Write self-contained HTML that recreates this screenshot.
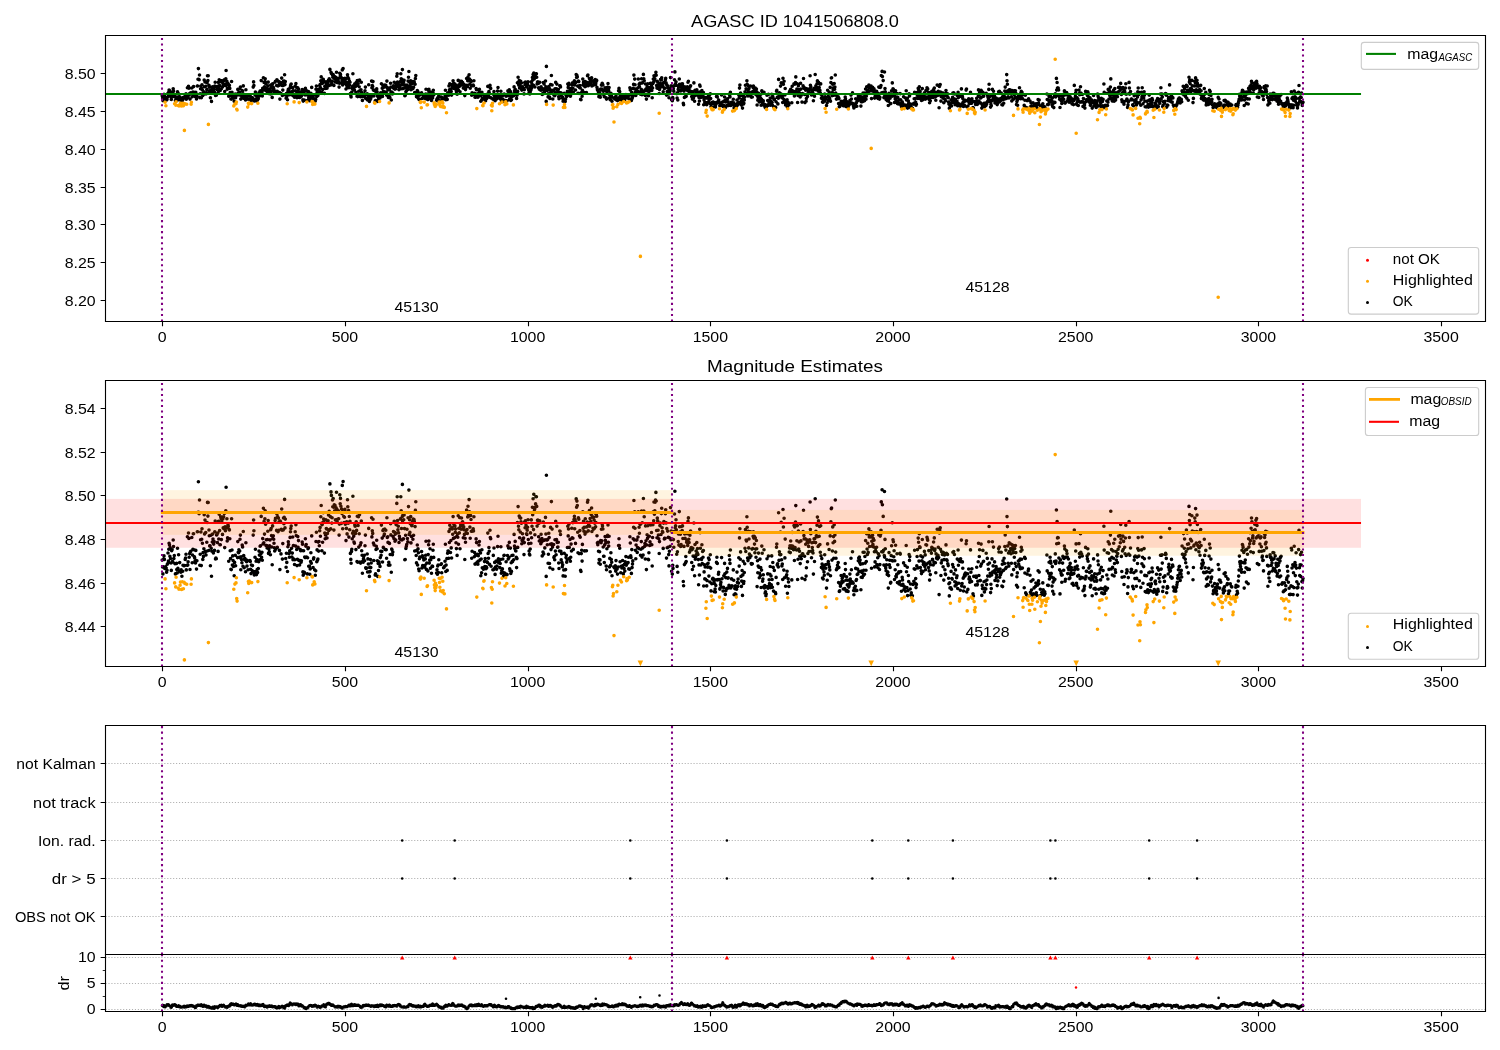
<!DOCTYPE html>
<html><head><meta charset="utf-8"><style>html,body{margin:0;padding:0;background:#fff;width:1500px;height:1050px;overflow:hidden}text{-webkit-font-smoothing:antialiased}svg{will-change:transform}</style></head><body>
<svg width="1500" height="1050" viewBox="0 0 1500 1050" style="display:block">
<rect width="1500" height="1050" fill="#fff"/>
<g font-family='"Liberation Sans", sans-serif'>
<defs><clipPath id="c1"><rect x="105.5" y="35.5" width="1380.0" height="286.0"/></clipPath><clipPath id="c2"><rect x="105.5" y="380.5" width="1380.0" height="286.0"/></clipPath><clipPath id="c4"><rect x="105.5" y="954.5" width="1380.0" height="57.0"/></clipPath></defs>
<g clip-path="url(#c1)">
<path d="M162.2 95.8h0M162.6 98.1h0M162.9 100.6h0M163.3 98.1h0M163.7 95.4h0M164.0 94.3h0M164.4 95.6h0M164.8 98.7h0M165.5 98.2h0M166.2 98.6h0M166.6 100.0h0M167.0 99.4h0M167.3 97.2h0M167.7 97.0h0M168.0 93.3h0M168.4 96.1h0M168.8 92.0h0M169.1 90.0h0M169.5 90.6h0M169.9 94.5h0M170.2 91.5h0M170.6 95.2h0M171.0 96.8h0M171.3 99.4h0M171.7 92.6h0M172.1 92.2h0M172.4 96.3h0M172.8 96.4h0M173.2 88.8h0M173.5 91.1h0M173.9 95.3h0M174.3 94.2h0M175.0 97.1h0M175.4 100.6h0M176.5 97.0h0M176.8 99.1h0M177.2 100.3h0M177.5 91.7h0M177.9 98.7h0M178.6 93.9h0M179.4 99.6h0M179.7 96.7h0M180.8 100.0h0M181.2 99.2h0M181.9 101.4h0M182.7 99.7h0M183.0 97.6h0M183.8 97.8h0M184.5 97.7h0M185.2 95.6h0M185.6 95.1h0M186.0 93.8h0M186.3 99.2h0M187.0 97.6h0M187.4 87.7h0M187.8 97.5h0M188.1 96.4h0M188.5 86.4h0M188.9 88.3h0M189.2 94.8h0M189.6 93.6h0M190.0 99.1h0M190.3 93.0h0M190.7 92.8h0M191.8 88.0h0M192.2 96.7h0M192.5 94.0h0M192.9 92.1h0M193.3 86.7h0M193.6 86.6h0M194.0 92.2h0M194.4 94.7h0M194.7 95.1h0M195.1 96.1h0M195.5 96.8h0M195.8 92.4h0M196.2 95.9h0M196.5 98.9h0M196.9 96.0h0M197.3 86.0h0M197.6 86.0h0M198.0 79.2h0M198.4 68.6h0M198.7 79.2h0M199.1 79.7h0M199.5 75.0h0M199.8 97.6h0M200.2 93.7h0M200.6 88.7h0M200.9 86.0h0M201.3 97.7h0M201.7 88.6h0M202.0 84.9h0M202.4 90.0h0M202.8 95.6h0M203.1 93.2h0M203.5 94.5h0M203.9 91.9h0M204.2 80.1h0M204.6 86.7h0M205.0 81.9h0M205.3 93.0h0M205.7 86.3h0M206.0 94.0h0M206.4 92.8h0M206.8 89.6h0M207.1 82.8h0M207.5 75.8h0M207.9 80.5h0M208.2 75.8h0M208.6 92.5h0M209.0 85.4h0M209.3 87.3h0M209.7 90.9h0M210.1 90.8h0M210.4 97.8h0M210.8 87.2h0M211.2 91.7h0M211.5 101.4h0M211.9 92.8h0M212.3 89.5h0M212.6 86.8h0M213.0 88.5h0M213.4 93.3h0M213.7 90.2h0M214.1 89.4h0M214.5 92.4h0M214.8 86.0h0M215.2 82.2h0M215.5 95.4h0M215.9 95.1h0M216.3 95.3h0M216.6 87.1h0M217.0 87.0h0M217.4 89.7h0M217.7 86.4h0M218.1 92.8h0M218.5 82.4h0M218.8 88.5h0M219.2 79.9h0M219.6 85.6h0M219.9 90.5h0M220.3 90.5h0M220.7 80.8h0M221.0 81.4h0M221.4 88.7h0M221.8 82.2h0M222.1 80.9h0M222.5 86.9h0M222.9 81.5h0M223.2 84.6h0M223.6 80.8h0M224.0 85.0h0M224.3 79.7h0M224.7 91.5h0M225.1 84.3h0M225.4 85.6h0M225.8 78.7h0M226.1 70.5h0M226.5 84.6h0M226.9 81.4h0M227.2 89.2h0M227.6 88.1h0M228.0 83.6h0M228.3 84.0h0M228.7 96.2h0M229.1 85.1h0M229.4 85.4h0M229.8 88.4h0M230.2 92.6h0M230.5 95.3h0M230.9 99.0h0M231.3 99.1h0M231.6 81.5h0M232.0 92.3h0M232.4 97.6h0M232.7 94.3h0M233.1 96.0h0M233.5 98.0h0M234.2 101.2h0M234.6 96.6h0M235.3 94.1h0M235.6 97.7h0M237.5 94.9h0M237.8 89.4h0M238.2 93.1h0M238.6 93.2h0M238.9 92.2h0M239.3 94.9h0M239.7 92.6h0M240.0 88.5h0M240.4 87.1h0M240.8 99.1h0M241.1 94.7h0M241.5 95.6h0M241.9 96.7h0M242.2 90.6h0M242.6 91.2h0M243.0 97.9h0M243.3 85.9h0M243.7 94.2h0M244.1 98.4h0M244.4 95.6h0M244.8 95.2h0M245.1 95.8h0M245.5 99.9h0M245.9 89.8h0M246.2 95.7h0M246.6 96.4h0M247.0 97.9h0M247.3 96.0h0M248.1 99.2h0M249.5 96.0h0M249.9 96.0h0M250.3 96.3h0M250.6 99.0h0M251.0 100.5h0M251.4 97.5h0M252.1 99.4h0M252.5 97.7h0M252.8 99.9h0M253.2 87.1h0M253.6 81.9h0M253.9 85.6h0M254.3 101.0h0M254.6 99.8h0M255.0 94.8h0M255.4 92.0h0M255.7 99.8h0M256.1 96.2h0M256.5 100.9h0M256.8 95.6h0M257.2 99.1h0M257.6 100.1h0M258.3 98.7h0M258.7 96.4h0M259.0 92.7h0M259.4 94.1h0M259.8 95.7h0M260.1 91.0h0M260.5 90.8h0M260.9 93.6h0M261.2 80.6h0M261.6 94.8h0M262.0 93.1h0M262.3 95.9h0M262.7 88.3h0M263.1 90.2h0M263.4 77.8h0M263.8 89.8h0M264.1 82.4h0M264.5 86.8h0M264.9 81.5h0M265.2 78.7h0M265.6 83.4h0M266.0 90.7h0M266.3 88.8h0M266.7 90.8h0M267.1 91.6h0M267.4 88.7h0M267.8 85.8h0M268.2 82.1h0M268.5 93.5h0M268.9 92.0h0M269.3 92.9h0M269.6 90.9h0M270.0 88.8h0M270.4 94.0h0M270.7 85.3h0M271.1 84.9h0M271.5 87.3h0M271.8 91.2h0M272.2 97.4h0M272.6 83.9h0M272.9 88.3h0M273.3 87.4h0M273.7 88.5h0M274.0 90.0h0M274.4 91.5h0M274.7 92.7h0M275.1 82.1h0M275.5 81.3h0M275.8 92.0h0M276.2 91.6h0M276.6 85.5h0M276.9 79.8h0M277.3 91.4h0M277.7 80.8h0M278.0 86.0h0M278.4 81.2h0M278.8 85.5h0M279.1 82.5h0M279.5 92.5h0M279.9 99.1h0M280.2 82.2h0M280.6 82.6h0M281.0 93.6h0M281.3 85.1h0M281.7 78.1h0M282.1 85.5h0M282.4 95.5h0M282.8 90.1h0M283.2 85.4h0M283.5 81.2h0M283.9 83.2h0M284.2 81.0h0M284.6 74.8h0M285.0 84.6h0M285.3 81.6h0M285.7 95.3h0M286.1 98.3h0M286.4 93.5h0M286.8 96.6h0M287.5 99.8h0M287.9 91.2h0M288.3 89.4h0M288.6 90.4h0M289.0 93.6h0M289.4 94.8h0M289.7 92.6h0M290.1 87.9h0M290.5 86.0h0M290.8 84.8h0M291.2 84.0h0M291.6 91.7h0M291.9 94.7h0M292.3 93.4h0M292.7 87.8h0M293.0 95.7h0M293.4 90.7h0M293.7 95.5h0M294.5 97.3h0M294.8 95.7h0M295.2 86.0h0M295.6 90.9h0M295.9 83.5h0M296.3 87.3h0M296.7 92.1h0M297.0 97.7h0M297.4 95.5h0M297.8 87.7h0M298.1 91.3h0M298.5 89.1h0M298.9 95.9h0M299.6 97.5h0M300.0 96.0h0M300.3 92.1h0M300.7 92.6h0M301.1 96.6h0M301.4 96.0h0M301.8 92.5h0M302.2 89.5h0M302.5 90.3h0M302.9 99.9h0M303.2 101.1h0M303.6 92.6h0M304.0 100.5h0M304.3 100.0h0M304.7 94.7h0M305.1 94.9h0M305.4 88.4h0M305.8 91.0h0M306.2 90.4h0M306.5 94.7h0M307.3 100.6h0M307.6 95.0h0M308.0 91.8h0M308.4 91.6h0M308.7 97.9h0M309.1 98.0h0M309.5 98.0h0M309.8 100.7h0M310.2 98.8h0M310.6 96.3h0M310.9 93.2h0M311.3 96.9h0M311.7 87.4h0M313.1 98.4h0M313.5 95.5h0M313.8 95.0h0M314.6 99.1h0M315.3 101.1h0M315.7 99.5h0M316.0 89.3h0M316.4 86.1h0M316.8 96.4h0M317.1 92.3h0M317.5 95.8h0M317.9 95.4h0M318.2 89.6h0M318.6 92.7h0M319.0 89.4h0M319.3 90.8h0M319.7 85.6h0M320.1 84.5h0M320.4 87.5h0M320.8 80.8h0M321.2 76.9h0M321.5 83.1h0M321.9 92.6h0M322.2 83.5h0M322.6 89.6h0M323.0 82.7h0M323.3 79.4h0M323.7 81.6h0M324.1 82.0h0M324.4 93.4h0M324.8 86.4h0M325.2 88.4h0M325.5 87.1h0M325.9 81.8h0M326.3 84.9h0M326.6 85.0h0M327.0 88.2h0M327.4 86.6h0M327.7 82.3h0M328.1 82.1h0M328.5 80.2h0M328.8 85.6h0M329.2 78.9h0M329.6 85.2h0M329.9 69.4h0M330.3 80.7h0M330.7 85.0h0M331.0 72.2h0M331.4 73.4h0M331.8 83.0h0M332.1 81.1h0M332.5 75.0h0M332.8 77.3h0M333.2 74.5h0M333.6 77.4h0M333.9 85.4h0M334.3 76.6h0M334.7 78.8h0M335.0 76.8h0M335.4 81.9h0M335.8 79.1h0M336.1 77.6h0M336.5 72.3h0M336.9 78.2h0M337.2 82.6h0M337.6 81.6h0M338.0 81.6h0M338.3 78.7h0M338.7 81.5h0M339.1 87.1h0M339.4 83.3h0M339.8 73.2h0M340.2 76.3h0M340.5 74.4h0M340.9 77.1h0M341.3 83.1h0M341.6 78.1h0M342.0 79.7h0M342.3 69.9h0M342.7 84.9h0M343.1 68.6h0M343.4 79.0h0M343.8 80.7h0M344.2 82.8h0M344.5 81.0h0M344.9 78.2h0M345.3 83.4h0M345.6 79.2h0M346.0 89.0h0M346.4 84.8h0M346.7 82.5h0M347.1 86.7h0M347.5 74.8h0M347.8 77.3h0M348.2 83.0h0M348.6 78.6h0M348.9 87.8h0M349.3 80.7h0M349.7 85.3h0M350.0 82.3h0M350.4 93.5h0M350.8 95.6h0M351.1 96.9h0M351.5 92.8h0M351.8 92.0h0M352.2 88.4h0M352.6 86.5h0M352.9 73.7h0M353.3 85.8h0M353.7 87.5h0M354.0 89.5h0M354.4 90.0h0M354.8 83.7h0M355.1 84.1h0M355.5 86.5h0M355.9 92.2h0M356.2 82.5h0M356.6 85.5h0M357.0 96.3h0M357.3 80.6h0M357.7 96.6h0M358.1 83.8h0M358.4 80.7h0M358.8 91.3h0M359.2 86.7h0M359.5 80.1h0M359.9 96.5h0M360.3 90.6h0M360.6 96.8h0M361.0 89.8h0M361.3 82.3h0M361.7 92.5h0M362.1 94.1h0M362.4 100.4h0M362.8 96.2h0M363.2 96.5h0M363.5 95.2h0M363.9 94.4h0M364.3 94.1h0M364.6 96.0h0M365.0 90.8h0M365.4 87.1h0M365.7 98.5h0M366.1 98.7h0M366.8 98.6h0M367.2 93.7h0M367.6 99.9h0M367.9 95.4h0M368.3 97.1h0M368.7 84.8h0M369.0 99.9h0M369.4 101.5h0M369.8 98.3h0M370.1 99.8h0M370.5 95.6h0M370.8 98.4h0M371.2 96.8h0M371.6 81.1h0M371.9 87.8h0M372.3 85.6h0M372.7 86.5h0M373.0 81.6h0M373.4 89.9h0M373.8 95.9h0M374.1 90.5h0M375.2 101.0h0M375.6 100.6h0M376.0 92.1h0M376.3 91.0h0M376.7 88.9h0M377.1 91.9h0M377.4 96.0h0M377.8 101.4h0M378.2 97.0h0M378.5 99.4h0M378.9 96.4h0M379.3 97.2h0M380.0 98.0h0M380.3 94.9h0M380.7 92.7h0M381.1 94.1h0M381.4 83.7h0M381.8 92.8h0M382.2 88.2h0M382.5 96.4h0M382.9 85.5h0M383.3 91.4h0M383.6 85.2h0M384.0 87.3h0M384.4 86.8h0M384.7 85.0h0M385.1 92.1h0M385.5 92.2h0M385.8 85.4h0M386.2 92.2h0M386.6 95.1h0M386.9 81.1h0M387.3 88.0h0M387.7 87.7h0M388.0 89.7h0M388.4 97.5h0M388.8 96.6h0M389.5 90.0h0M389.9 97.6h0M390.2 93.9h0M390.6 83.2h0M390.9 87.1h0M391.3 100.0h0M391.7 92.0h0M392.0 92.2h0M392.4 94.0h0M392.8 93.0h0M393.1 87.6h0M393.5 85.9h0M393.9 88.4h0M394.2 82.3h0M394.6 86.2h0M395.0 89.2h0M395.3 86.8h0M395.7 88.8h0M396.1 83.5h0M396.4 86.5h0M396.8 76.2h0M397.2 73.8h0M397.5 82.1h0M397.9 85.3h0M398.3 84.1h0M398.6 86.3h0M399.0 89.7h0M399.4 87.5h0M399.7 88.4h0M400.1 88.5h0M400.4 81.5h0M400.8 73.8h0M401.2 78.7h0M401.5 84.9h0M401.9 88.8h0M402.3 80.7h0M402.6 82.2h0M403.0 80.1h0M403.4 88.4h0M403.7 81.8h0M404.1 80.2h0M404.5 84.9h0M404.8 95.7h0M405.2 95.6h0M405.6 87.2h0M405.9 91.8h0M406.3 91.1h0M406.7 90.4h0M407.0 85.1h0M407.4 88.3h0M407.8 89.5h0M408.1 81.1h0M408.5 77.3h0M408.9 71.5h0M409.2 86.9h0M409.6 81.8h0M409.9 86.2h0M410.3 83.2h0M410.7 80.7h0M411.0 89.8h0M411.4 87.6h0M411.8 83.9h0M412.1 83.3h0M412.5 82.5h0M412.9 88.6h0M413.2 81.5h0M413.6 87.2h0M414.0 81.7h0M414.3 82.3h0M414.7 92.6h0M415.1 84.2h0M415.4 78.6h0M415.8 75.6h0M416.2 94.2h0M416.5 96.8h0M416.9 92.4h0M417.3 90.6h0M417.6 97.5h0M418.0 91.9h0M418.4 93.3h0M418.7 98.9h0M419.1 99.5h0M419.4 95.3h0M419.8 94.7h0M421.6 92.9h0M422.0 98.5h0M422.4 94.3h0M422.7 97.7h0M423.1 95.0h0M423.5 97.8h0M423.8 95.7h0M424.6 98.2h0M424.9 97.7h0M425.3 95.4h0M425.7 94.1h0M426.0 89.2h0M426.4 99.0h0M426.8 96.8h0M427.9 99.6h0M428.2 93.9h0M428.6 90.5h0M428.9 89.2h0M429.3 96.8h0M429.7 95.8h0M430.0 91.9h0M430.4 98.6h0M430.8 95.7h0M431.1 94.9h0M431.5 100.4h0M431.9 98.1h0M432.2 97.9h0M432.6 98.0h0M433.0 92.4h0M433.3 90.3h0M433.7 94.9h0M436.6 100.3h0M437.0 99.1h0M437.4 100.7h0M437.7 97.9h0M438.1 97.5h0M438.4 100.1h0M438.8 95.7h0M441.0 97.3h0M441.4 97.1h0M441.7 100.2h0M443.6 98.4h0M443.9 98.4h0M444.7 97.9h0M445.0 96.2h0M445.4 90.3h0M445.8 99.7h0M446.1 97.5h0M446.9 95.3h0M447.2 99.4h0M447.6 93.4h0M448.0 92.7h0M448.3 92.7h0M448.7 95.2h0M449.0 85.9h0M449.4 89.7h0M449.8 83.7h0M450.1 85.0h0M450.5 93.2h0M450.9 89.0h0M451.2 91.6h0M451.6 95.1h0M452.0 84.6h0M452.3 85.0h0M452.7 86.8h0M453.1 80.7h0M453.4 88.3h0M453.8 83.3h0M454.2 83.8h0M454.5 88.1h0M454.9 84.0h0M455.3 86.1h0M455.6 85.0h0M456.0 89.8h0M456.4 91.8h0M456.7 87.7h0M457.1 94.2h0M457.5 86.8h0M457.8 87.9h0M458.2 80.4h0M458.5 90.3h0M458.9 84.8h0M459.3 86.4h0M459.6 81.0h0M460.0 91.8h0M460.4 83.1h0M460.7 84.0h0M461.1 85.1h0M461.5 81.2h0M461.8 83.4h0M462.2 84.0h0M462.6 82.5h0M462.9 83.3h0M463.3 88.1h0M463.7 84.3h0M464.0 85.3h0M464.4 86.9h0M464.8 95.6h0M465.1 88.2h0M465.5 89.6h0M465.9 85.4h0M466.2 86.4h0M466.6 78.5h0M467.0 85.2h0M467.3 86.6h0M467.7 80.8h0M468.0 77.1h0M468.4 79.8h0M468.8 80.6h0M469.1 74.8h0M469.5 79.1h0M469.9 84.3h0M470.2 88.2h0M470.6 80.4h0M471.0 81.7h0M471.3 85.8h0M471.7 95.2h0M472.1 92.7h0M472.4 85.8h0M472.8 85.4h0M473.2 85.0h0M473.5 85.7h0M473.9 80.8h0M474.3 94.6h0M474.6 93.2h0M475.0 97.2h0M475.4 94.2h0M475.7 97.1h0M476.1 88.5h0M476.5 89.7h0M477.2 96.5h0M477.5 93.8h0M477.9 97.2h0M478.3 94.3h0M478.6 96.1h0M479.0 90.6h0M479.4 89.4h0M479.7 92.5h0M480.1 95.7h0M480.5 93.4h0M480.8 101.3h0M481.2 95.4h0M481.6 100.2h0M481.9 92.2h0M482.3 98.5h0M483.4 99.0h0M484.5 96.3h0M484.9 98.1h0M485.2 95.3h0M485.6 100.7h0M486.0 98.8h0M486.3 98.1h0M486.7 98.4h0M487.0 96.4h0M487.4 96.6h0M487.8 86.4h0M488.1 93.5h0M488.5 95.2h0M488.9 91.5h0M489.2 92.7h0M489.6 97.3h0M490.0 85.4h0M490.3 88.0h0M490.7 88.4h0M491.1 97.9h0M492.9 99.1h0M493.3 94.2h0M493.6 99.1h0M494.0 91.6h0M494.4 98.7h0M494.7 96.6h0M495.1 100.8h0M495.5 98.2h0M495.8 96.3h0M496.2 96.1h0M496.6 99.0h0M496.9 97.9h0M497.3 96.3h0M497.6 91.1h0M498.0 87.5h0M498.4 95.3h0M498.7 96.7h0M499.1 96.2h0M499.8 98.4h0M500.2 97.0h0M500.6 95.6h0M500.9 91.2h0M501.3 100.4h0M501.7 99.5h0M502.4 98.9h0M502.8 95.4h0M503.1 100.1h0M503.5 101.4h0M503.9 94.2h0M504.2 94.1h0M504.6 100.3h0M505.3 100.9h0M506.1 96.3h0M506.4 100.7h0M507.1 100.8h0M507.5 94.2h0M507.9 90.9h0M508.2 95.4h0M508.6 91.6h0M509.0 94.9h0M509.3 89.7h0M509.7 98.8h0M510.1 99.5h0M510.4 91.6h0M510.8 100.4h0M511.2 96.7h0M511.5 99.7h0M511.9 94.2h0M512.3 96.2h0M512.6 96.3h0M513.0 94.1h0M513.7 95.7h0M514.1 86.9h0M514.5 90.9h0M514.8 91.8h0M515.2 89.3h0M515.6 92.6h0M515.9 92.7h0M516.3 94.8h0M516.6 98.4h0M517.0 95.3h0M517.4 82.8h0M517.7 91.4h0M518.1 77.3h0M518.5 84.1h0M518.8 85.3h0M519.2 80.5h0M519.6 88.0h0M519.9 81.1h0M520.3 86.0h0M520.7 81.3h0M521.0 82.5h0M521.4 83.0h0M521.8 90.1h0M522.1 89.0h0M522.5 86.7h0M522.9 88.8h0M523.2 88.3h0M523.6 88.2h0M524.0 93.9h0M524.3 89.7h0M524.7 82.5h0M525.1 84.6h0M525.4 82.1h0M525.8 83.1h0M526.1 83.8h0M526.5 86.7h0M526.9 86.9h0M527.2 85.4h0M527.6 84.4h0M528.0 81.8h0M528.3 88.7h0M528.7 90.1h0M529.1 92.7h0M529.4 93.8h0M529.8 94.0h0M530.2 92.0h0M530.5 86.4h0M530.9 90.0h0M531.3 81.9h0M531.6 88.1h0M532.0 84.0h0M532.4 77.5h0M532.7 80.1h0M533.1 74.6h0M533.5 85.2h0M533.8 73.0h0M534.2 79.0h0M534.6 78.3h0M534.9 87.0h0M535.3 77.5h0M535.6 76.3h0M536.0 73.8h0M536.4 73.8h0M536.7 77.2h0M537.1 84.0h0M537.5 82.0h0M537.8 81.9h0M538.2 82.5h0M538.6 87.7h0M538.9 83.1h0M539.3 89.2h0M539.7 82.2h0M540.0 89.3h0M540.4 88.8h0M540.8 90.2h0M541.1 86.9h0M541.5 89.6h0M541.9 88.3h0M542.2 94.4h0M542.6 89.2h0M543.0 93.0h0M543.3 82.6h0M543.7 93.6h0M544.1 84.0h0M544.4 88.9h0M544.8 91.6h0M545.1 88.8h0M545.5 81.0h0M545.9 86.8h0M546.2 101.4h0M547.0 88.9h0M547.3 90.5h0M547.7 88.6h0M548.1 96.9h0M548.4 93.8h0M548.8 86.5h0M549.2 88.0h0M549.5 97.0h0M549.9 98.5h0M550.3 90.3h0M550.6 84.5h0M551.0 92.2h0M551.4 75.5h0M551.7 90.2h0M552.1 85.0h0M552.5 91.3h0M552.8 99.0h0M553.6 90.4h0M553.9 94.9h0M554.3 94.6h0M554.7 95.7h0M555.0 88.7h0M555.4 92.7h0M555.7 82.4h0M556.1 93.9h0M556.5 88.7h0M556.8 84.1h0M557.2 89.7h0M557.6 91.4h0M557.9 91.3h0M558.3 89.6h0M558.7 96.8h0M559.0 98.7h0M559.4 92.6h0M559.8 85.8h0M560.1 85.8h0M560.5 86.9h0M560.9 92.8h0M561.2 95.7h0M561.6 93.6h0M562.0 96.6h0M562.3 98.1h0M562.7 97.4h0M563.1 101.3h0M563.8 99.3h0M564.2 93.4h0M565.2 101.4h0M565.6 99.1h0M566.0 94.9h0M566.3 94.1h0M566.7 96.5h0M567.1 95.7h0M567.4 91.4h0M567.8 84.0h0M568.2 87.4h0M568.5 85.0h0M568.9 83.4h0M569.3 91.4h0M569.6 95.2h0M570.0 88.6h0M570.4 96.2h0M570.7 94.8h0M571.1 90.2h0M571.5 92.6h0M571.8 84.8h0M572.2 88.0h0M572.6 82.8h0M572.9 88.2h0M573.3 92.1h0M573.7 82.7h0M574.0 81.7h0M574.4 80.7h0M574.7 84.9h0M575.1 81.8h0M575.5 90.0h0M575.8 82.5h0M576.2 74.6h0M576.6 77.5h0M576.9 75.4h0M577.3 76.9h0M577.7 86.1h0M578.0 93.3h0M578.4 81.1h0M578.8 81.6h0M579.1 93.5h0M579.5 87.4h0M579.9 85.6h0M580.2 87.9h0M580.6 99.4h0M581.0 99.8h0M581.3 93.5h0M581.7 92.4h0M582.1 96.2h0M582.4 90.4h0M582.8 79.1h0M583.2 84.8h0M583.5 82.3h0M583.9 85.8h0M584.2 84.5h0M584.6 92.6h0M585.0 86.8h0M585.3 81.5h0M585.7 86.2h0M586.1 86.1h0M586.4 92.6h0M586.8 84.3h0M587.2 82.6h0M587.5 75.8h0M587.9 75.1h0M588.3 85.7h0M588.6 83.3h0M589.0 82.9h0M589.4 78.6h0M589.7 84.1h0M590.1 81.4h0M590.5 82.7h0M590.8 82.5h0M591.2 80.0h0M591.6 77.7h0M591.9 85.9h0M592.3 80.9h0M592.7 80.7h0M593.0 84.7h0M593.4 85.1h0M593.7 81.0h0M594.1 81.9h0M594.5 84.8h0M594.8 83.0h0M595.2 79.6h0M595.6 84.2h0M595.9 82.8h0M596.3 80.0h0M596.7 80.6h0M597.0 87.4h0M597.4 89.8h0M597.8 90.5h0M598.1 89.7h0M598.5 92.8h0M598.9 96.8h0M599.2 95.6h0M599.6 92.9h0M600.0 95.7h0M600.3 97.2h0M600.7 89.0h0M601.1 89.8h0M601.4 85.1h0M601.8 89.1h0M602.2 83.3h0M602.5 84.0h0M602.9 85.0h0M603.2 91.3h0M603.6 94.5h0M604.0 94.5h0M604.3 96.7h0M604.7 90.5h0M605.1 87.7h0M605.4 89.0h0M605.8 89.9h0M606.2 97.9h0M606.5 99.1h0M606.9 91.9h0M607.3 87.6h0M607.6 87.2h0M608.0 83.6h0M608.4 89.6h0M608.7 90.9h0M609.1 87.5h0M609.5 98.2h0M609.8 95.2h0M610.2 99.8h0M610.6 97.6h0M610.9 93.2h0M611.3 95.6h0M611.7 96.5h0M612.0 101.2h0M613.8 98.2h0M614.2 98.1h0M614.6 98.5h0M614.9 98.4h0M615.3 97.8h0M615.7 99.6h0M616.0 96.0h0M616.4 99.0h0M617.1 98.9h0M617.5 100.6h0M618.2 98.2h0M618.6 90.8h0M619.0 88.4h0M619.3 90.7h0M619.7 91.7h0M620.1 96.4h0M620.8 100.2h0M621.2 98.0h0M621.9 98.5h0M622.3 98.4h0M622.6 95.9h0M623.0 97.7h0M623.3 100.6h0M624.1 98.7h0M624.4 97.3h0M624.8 99.6h0M625.2 96.3h0M625.5 96.7h0M625.9 94.6h0M626.3 97.6h0M627.7 96.9h0M628.1 96.7h0M628.5 94.8h0M628.8 98.8h0M629.6 99.0h0M629.9 87.7h0M630.3 89.9h0M630.7 94.4h0M631.0 94.9h0M631.4 100.4h0M631.8 92.2h0M632.1 98.4h0M632.5 97.2h0M632.8 96.1h0M633.2 88.4h0M633.6 84.4h0M633.9 75.1h0M634.3 88.8h0M634.7 79.1h0M635.0 84.8h0M635.4 92.4h0M635.8 95.4h0M636.1 90.6h0M636.5 88.9h0M636.9 88.8h0M637.2 93.1h0M637.6 91.4h0M638.0 87.8h0M638.3 79.0h0M638.7 91.7h0M639.1 84.4h0M639.4 86.5h0M639.8 83.2h0M640.2 83.4h0M640.5 94.2h0M640.9 92.0h0M641.3 89.4h0M641.6 78.8h0M642.0 94.8h0M642.3 82.9h0M642.7 91.6h0M643.1 94.0h0M643.4 74.4h0M643.8 78.8h0M644.2 80.8h0M644.5 91.1h0M644.9 90.1h0M645.3 95.4h0M645.6 84.0h0M646.0 89.1h0M646.4 99.1h0M646.7 90.6h0M647.1 87.0h0M647.5 88.3h0M647.8 83.9h0M648.2 95.5h0M648.6 95.7h0M648.9 93.2h0M649.3 87.5h0M649.7 90.7h0M650.0 89.5h0M650.4 83.4h0M650.8 83.6h0M651.1 83.4h0M651.5 86.2h0M651.8 90.5h0M652.2 97.8h0M652.6 88.0h0M652.9 83.6h0M653.3 79.1h0M653.7 82.1h0M654.0 75.7h0M654.4 79.9h0M654.8 78.7h0M655.1 75.7h0M655.5 75.0h0M655.9 72.3h0M656.2 75.3h0M656.6 85.6h0M657.0 88.1h0M657.3 81.2h0M657.7 82.2h0M658.1 85.5h0M658.4 87.1h0M658.8 88.4h0M659.2 93.5h0M659.5 89.4h0M659.9 83.8h0M660.3 83.0h0M660.6 79.4h0M661.0 86.9h0M661.4 79.7h0M661.7 77.8h0M662.1 84.6h0M662.4 85.9h0M662.8 86.1h0M663.2 91.7h0M663.5 83.0h0M663.9 82.4h0M664.3 88.5h0M664.6 88.2h0M665.0 88.3h0M665.4 79.7h0M665.7 78.3h0M666.1 82.9h0M666.5 95.1h0M666.8 84.9h0M667.2 91.5h0M667.6 85.7h0M667.9 91.4h0M668.3 87.9h0M668.7 93.9h0M669.0 97.8h0M669.4 92.7h0M669.8 88.1h0M670.1 91.0h0M670.5 77.6h0M670.9 88.8h0M671.2 85.7h0M671.6 99.7h0M671.9 88.5h0M672.3 100.7h0M672.7 97.6h0M673.0 98.7h0M673.4 88.7h0M673.8 91.3h0M674.1 85.9h0M674.5 79.8h0M674.9 71.9h0M675.2 84.6h0M675.6 83.9h0M676.0 81.8h0M676.3 85.3h0M676.7 93.8h0M677.1 98.0h0M677.4 92.9h0M677.8 100.0h0M678.2 89.4h0M678.5 86.7h0M678.9 90.6h0M679.3 79.0h0M679.6 84.2h0M680.0 86.0h0M680.4 86.9h0M680.7 91.0h0M681.1 90.4h0M681.4 84.1h0M681.8 86.0h0M682.2 85.5h0M682.5 83.9h0M682.9 88.3h0M683.3 103.2h0M683.6 104.7h0M684.0 91.1h0M684.4 97.4h0M684.7 86.7h0M685.1 88.3h0M685.5 96.8h0M685.8 94.6h0M686.2 96.3h0M686.6 89.6h0M686.9 89.0h0M687.3 86.7h0M687.7 90.7h0M688.0 82.3h0M688.4 81.2h0M688.8 88.6h0M689.1 89.7h0M689.5 93.1h0M689.9 87.2h0M690.2 92.4h0M690.6 85.7h0M690.9 91.7h0M691.3 91.5h0M691.7 96.6h0M692.0 92.2h0M692.4 99.1h0M692.8 91.7h0M693.1 94.4h0M693.5 98.0h0M693.9 82.9h0M694.2 94.5h0M694.6 101.2h0M695.0 90.4h0M695.3 95.5h0M695.7 94.6h0M696.1 92.7h0M696.4 93.9h0M696.8 89.7h0M697.2 93.3h0M697.5 91.8h0M697.9 93.8h0M698.3 95.6h0M698.6 104.3h0M699.0 97.5h0M699.4 101.0h0M699.7 85.1h0M700.1 86.3h0M700.4 91.7h0M700.8 97.5h0M701.2 95.4h0M701.5 95.6h0M701.9 90.5h0M702.3 97.0h0M702.6 92.8h0M703.0 94.8h0M703.4 92.5h0M703.7 104.8h0M704.1 99.9h0M704.5 97.4h0M704.8 102.3h0M705.2 98.2h0M705.6 102.5h0M706.7 104.7h0M707.0 102.9h0M707.4 97.2h0M707.8 98.3h0M708.1 96.9h0M708.5 95.1h0M708.9 101.4h0M709.2 95.6h0M709.6 98.3h0M709.9 103.4h0M710.3 93.9h0M710.7 98.6h0M711.0 106.5h0M711.8 104.0h0M712.5 102.4h0M712.9 102.1h0M713.6 102.4h0M714.0 103.1h0M714.3 106.8h0M714.7 104.0h0M715.1 105.8h0M715.4 106.9h0M715.8 104.6h0M716.2 102.6h0M716.5 96.6h0M716.9 94.8h0M717.3 97.0h0M717.6 102.7h0M718.0 102.5h0M718.4 100.7h0M718.7 100.0h0M719.1 102.5h0M719.8 105.8h0M720.2 105.5h0M720.5 104.3h0M720.9 103.5h0M721.3 105.1h0M721.6 94.9h0M722.0 102.3h0M723.1 106.5h0M723.5 105.3h0M723.8 101.2h0M724.6 97.0h0M724.9 100.5h0M725.3 107.7h0M725.7 101.9h0M726.0 106.4h0M726.4 105.8h0M726.8 99.9h0M727.1 105.6h0M727.5 98.7h0M727.9 102.1h0M728.2 101.9h0M728.6 105.4h0M729.0 104.5h0M729.3 94.2h0M729.7 95.7h0M730.0 96.9h0M730.4 92.3h0M730.8 105.5h0M731.1 105.2h0M731.5 102.3h0M731.9 104.7h0M732.2 104.8h0M733.3 99.2h0M733.7 102.8h0M734.1 107.9h0M734.8 105.7h0M735.2 107.5h0M735.5 104.8h0M735.9 107.7h0M736.6 105.9h0M737.0 100.0h0M737.4 103.5h0M737.7 105.0h0M738.1 102.4h0M738.5 103.8h0M738.8 95.0h0M739.2 97.9h0M739.5 88.1h0M739.9 85.0h0M740.3 95.5h0M740.6 93.0h0M741.0 101.5h0M741.4 104.9h0M741.7 103.1h0M742.1 99.4h0M742.5 108.1h0M742.8 101.0h0M743.2 96.2h0M743.6 103.9h0M743.9 103.2h0M744.3 100.1h0M744.7 97.1h0M745.0 91.7h0M745.4 85.2h0M745.8 92.8h0M746.1 88.8h0M746.5 89.1h0M746.9 80.8h0M747.2 84.4h0M747.6 95.1h0M748.0 96.0h0M748.3 85.8h0M748.7 91.6h0M749.0 88.5h0M749.4 93.7h0M749.8 95.0h0M750.1 94.3h0M750.5 86.0h0M750.9 94.3h0M751.2 97.0h0M751.6 97.2h0M752.0 92.0h0M752.3 97.0h0M752.7 91.8h0M753.1 87.5h0M753.4 86.0h0M753.8 88.2h0M754.2 87.5h0M754.5 90.2h0M754.9 93.2h0M755.3 88.1h0M755.6 92.0h0M756.0 94.8h0M756.4 89.0h0M756.7 91.9h0M757.1 105.0h0M757.5 96.1h0M757.8 100.2h0M758.2 97.9h0M758.5 93.4h0M758.9 98.3h0M759.3 101.9h0M759.6 100.4h0M760.0 95.4h0M760.4 101.2h0M760.7 98.4h0M761.1 105.3h0M761.5 99.3h0M761.8 90.9h0M762.2 93.4h0M762.6 103.1h0M762.9 102.3h0M763.3 100.9h0M763.7 105.1h0M764.0 92.2h0M764.4 105.5h0M764.8 104.6h0M765.1 107.3h0M765.5 106.7h0M765.9 108.1h0M766.2 107.6h0M767.0 95.3h0M767.3 105.1h0M767.7 100.6h0M768.0 105.5h0M768.4 94.4h0M768.8 104.8h0M769.1 102.6h0M769.5 104.0h0M769.9 100.7h0M770.2 98.0h0M770.6 105.3h0M771.0 101.3h0M771.3 104.4h0M771.7 94.3h0M772.1 102.5h0M772.4 105.2h0M772.8 96.6h0M773.2 98.3h0M773.5 106.5h0M774.3 99.4h0M775.4 107.1h0M775.7 107.5h0M776.1 101.8h0M776.5 91.3h0M776.8 90.3h0M777.2 97.5h0M777.6 97.1h0M777.9 103.9h0M778.3 98.2h0M778.6 79.4h0M779.0 95.9h0M779.4 92.9h0M779.7 93.9h0M780.1 93.9h0M780.5 86.1h0M780.8 93.9h0M781.2 82.7h0M781.6 95.7h0M781.9 97.8h0M782.3 97.2h0M782.7 102.5h0M783.0 78.3h0M783.4 84.3h0M783.8 99.3h0M784.1 81.3h0M784.5 101.9h0M784.9 95.0h0M785.2 88.5h0M785.6 104.9h0M786.0 101.5h0M786.3 101.4h0M786.7 100.9h0M787.1 99.7h0M787.4 107.3h0M788.1 102.3h0M788.5 103.4h0M788.9 105.0h0M789.2 93.0h0M789.6 91.6h0M790.0 90.8h0M790.3 93.2h0M790.7 89.2h0M791.1 90.9h0M791.4 91.7h0M791.8 102.7h0M792.2 86.2h0M792.5 90.9h0M792.9 91.4h0M793.3 91.2h0M793.6 92.2h0M794.0 83.8h0M794.4 95.9h0M794.7 84.3h0M795.1 91.5h0M795.5 82.6h0M795.8 76.9h0M796.2 83.3h0M796.6 92.3h0M796.9 89.1h0M797.3 83.8h0M797.6 102.5h0M798.0 95.5h0M798.4 85.7h0M798.7 92.0h0M799.1 89.5h0M799.5 92.7h0M799.8 94.5h0M800.2 97.0h0M800.6 83.3h0M800.9 89.1h0M801.3 95.3h0M801.7 94.2h0M802.0 102.1h0M802.4 93.6h0M802.8 93.7h0M803.1 85.9h0M803.5 78.5h0M803.9 87.3h0M804.2 88.5h0M804.6 94.5h0M805.0 102.6h0M805.3 88.4h0M805.7 90.3h0M806.1 101.3h0M806.4 98.5h0M806.8 88.7h0M807.1 89.7h0M807.5 96.4h0M807.9 93.5h0M808.2 89.8h0M808.6 91.1h0M809.0 92.8h0M809.3 89.2h0M809.7 88.8h0M810.1 75.7h0M810.4 85.2h0M810.8 86.7h0M811.2 92.7h0M811.5 95.0h0M811.9 89.8h0M812.3 91.4h0M812.6 92.5h0M813.0 93.4h0M813.4 100.7h0M813.7 89.6h0M814.1 88.4h0M814.5 96.3h0M814.8 88.4h0M815.2 74.5h0M815.6 89.7h0M815.9 85.8h0M816.3 87.3h0M816.6 87.4h0M817.0 83.7h0M817.4 80.9h0M817.7 87.7h0M818.1 91.1h0M818.5 82.2h0M818.8 90.8h0M819.2 87.5h0M819.6 84.1h0M819.9 90.4h0M820.3 93.1h0M820.7 83.9h0M821.0 94.3h0M821.4 98.3h0M821.8 95.3h0M822.1 97.2h0M822.5 102.1h0M822.9 98.9h0M823.2 102.3h0M823.6 98.1h0M824.0 99.9h0M824.3 101.1h0M824.7 94.0h0M825.4 97.4h0M825.8 98.7h0M826.5 105.5h0M826.9 97.2h0M827.2 102.8h0M827.6 90.2h0M828.0 100.6h0M828.3 96.3h0M828.7 97.2h0M829.1 92.1h0M829.4 98.2h0M829.8 99.2h0M830.2 87.4h0M830.5 101.2h0M830.9 82.6h0M831.3 78.0h0M831.6 77.7h0M832.0 95.8h0M832.4 92.6h0M832.7 84.3h0M833.1 89.8h0M833.5 87.7h0M833.8 95.2h0M834.2 83.5h0M834.6 89.3h0M834.9 87.1h0M835.3 75.0h0M835.7 93.0h0M836.0 95.2h0M836.4 99.1h0M837.1 98.7h0M837.5 97.6h0M837.8 98.7h0M838.2 96.7h0M838.6 103.6h0M838.9 98.4h0M839.3 106.7h0M839.7 106.5h0M840.0 104.0h0M840.4 104.9h0M840.8 104.1h0M841.1 101.2h0M841.5 103.8h0M841.9 103.1h0M842.2 102.2h0M842.6 103.2h0M843.0 103.4h0M843.3 105.8h0M843.7 101.4h0M844.1 100.8h0M844.4 105.8h0M844.8 105.7h0M845.2 97.0h0M845.5 99.1h0M845.9 102.8h0M846.2 106.6h0M846.6 101.5h0M847.0 106.4h0M847.3 104.4h0M847.7 102.8h0M848.1 106.7h0M848.8 105.2h0M849.2 104.7h0M849.5 104.1h0M849.9 100.6h0M850.3 102.4h0M850.6 103.4h0M851.0 95.1h0M851.4 99.1h0M851.7 103.8h0M852.1 103.3h0M852.5 92.9h0M852.8 103.6h0M853.2 103.8h0M853.6 106.4h0M853.9 107.9h0M854.3 105.5h0M854.7 105.5h0M855.0 106.5h0M855.4 104.9h0M855.7 98.7h0M856.1 102.9h0M856.5 102.6h0M856.8 106.3h0M857.2 100.8h0M857.6 98.9h0M857.9 100.6h0M858.3 96.0h0M858.7 95.1h0M859.0 99.7h0M859.4 94.7h0M859.8 96.7h0M860.1 95.8h0M860.5 97.2h0M860.9 106.1h0M861.2 101.8h0M861.6 99.6h0M862.0 100.1h0M862.3 101.8h0M862.7 97.0h0M863.1 93.1h0M863.4 101.2h0M863.8 99.3h0M864.2 93.1h0M864.5 100.7h0M864.9 94.6h0M865.2 96.9h0M865.6 89.0h0M866.0 99.3h0M866.3 96.3h0M866.7 86.7h0M867.1 92.0h0M867.4 93.8h0M867.8 90.0h0M868.2 93.1h0M868.5 86.7h0M868.9 85.0h0M869.3 87.8h0M869.6 91.1h0M870.0 86.1h0M870.4 87.5h0M870.7 87.8h0M871.1 86.0h0M871.5 98.6h0M871.8 89.3h0M872.2 91.0h0M872.6 87.2h0M872.9 90.4h0M873.3 88.3h0M873.7 91.2h0M874.0 88.9h0M874.4 92.9h0M874.7 98.1h0M875.1 96.4h0M875.5 92.5h0M875.8 91.5h0M876.2 92.9h0M876.6 91.3h0M876.9 97.4h0M877.3 97.4h0M877.7 95.0h0M878.0 98.5h0M878.4 93.6h0M878.8 87.1h0M879.1 94.3h0M879.5 99.1h0M879.9 97.4h0M880.2 87.5h0M880.6 86.9h0M881.0 85.5h0M881.3 75.6h0M881.7 92.9h0M882.1 71.4h0M882.4 76.6h0M882.8 92.9h0M883.2 80.6h0M883.5 92.4h0M883.9 97.6h0M884.3 94.2h0M884.6 94.8h0M885.0 88.6h0M885.3 91.9h0M885.7 98.5h0M886.1 99.5h0M886.4 97.5h0M886.8 95.7h0M887.2 100.8h0M887.5 99.9h0M887.9 100.0h0M888.3 105.5h0M888.6 101.2h0M889.0 93.2h0M889.4 97.5h0M889.7 95.9h0M890.1 98.3h0M890.5 103.8h0M890.8 103.5h0M891.2 94.2h0M891.6 90.8h0M891.9 96.0h0M892.3 82.9h0M892.7 96.1h0M893.0 88.7h0M893.4 89.4h0M893.8 94.7h0M894.1 92.5h0M894.5 102.5h0M894.8 96.1h0M895.2 99.1h0M895.6 90.7h0M895.9 101.4h0M896.3 101.7h0M896.7 100.8h0M897.0 93.6h0M897.4 103.6h0M897.8 97.4h0M898.1 103.7h0M898.5 100.3h0M898.9 99.8h0M899.2 104.1h0M899.6 103.2h0M900.0 93.5h0M900.3 93.7h0M900.7 99.8h0M901.1 104.5h0M901.4 106.6h0M902.2 101.7h0M902.5 102.7h0M902.9 104.2h0M903.3 104.7h0M903.6 96.8h0M904.0 106.0h0M904.7 105.1h0M905.1 97.7h0M905.4 106.6h0M905.8 105.3h0M906.2 90.7h0M906.5 99.9h0M906.9 105.3h0M907.3 98.3h0M907.6 108.1h0M908.0 106.4h0M908.4 101.1h0M908.7 103.3h0M909.1 93.9h0M909.5 95.9h0M909.8 94.6h0M910.2 105.8h0M910.6 104.1h0M910.9 108.0h0M911.3 107.2h0M912.4 108.2h0M913.1 104.2h0M913.8 103.2h0M914.2 98.8h0M914.6 92.4h0M914.9 99.0h0M915.3 103.9h0M915.7 102.2h0M916.0 105.3h0M916.4 104.2h0M916.8 97.8h0M917.1 94.6h0M917.5 92.2h0M917.9 98.5h0M918.2 88.2h0M918.6 89.6h0M919.0 96.2h0M919.3 86.7h0M919.7 91.2h0M920.1 91.4h0M920.4 98.4h0M920.8 94.4h0M921.2 99.5h0M921.5 100.5h0M921.9 96.1h0M922.3 88.6h0M922.6 94.7h0M923.0 99.7h0M923.3 97.4h0M923.7 96.7h0M924.1 96.6h0M924.4 92.8h0M924.8 98.0h0M925.2 94.0h0M925.5 99.1h0M925.9 90.5h0M926.3 97.3h0M926.6 90.6h0M927.0 87.9h0M927.4 88.5h0M927.7 88.9h0M928.1 96.8h0M928.5 98.4h0M928.8 92.5h0M929.2 99.5h0M929.6 102.8h0M929.9 96.4h0M930.3 100.8h0M930.7 97.4h0M931.0 92.4h0M931.4 93.4h0M931.8 91.4h0M932.1 91.9h0M932.5 95.5h0M932.8 91.7h0M933.2 97.5h0M933.6 89.5h0M933.9 96.5h0M934.3 88.1h0M934.7 92.5h0M935.0 92.0h0M935.4 96.7h0M935.8 100.2h0M936.1 93.7h0M936.5 95.2h0M936.9 94.8h0M937.2 85.1h0M937.6 95.4h0M938.0 94.2h0M938.3 91.3h0M938.7 94.9h0M939.1 107.8h0M939.4 86.4h0M939.8 85.4h0M940.2 84.6h0M940.5 92.0h0M940.9 101.1h0M941.3 96.8h0M941.6 92.9h0M942.0 95.9h0M942.4 93.9h0M942.7 93.1h0M943.1 98.1h0M943.4 93.2h0M943.8 102.7h0M944.2 95.6h0M944.5 94.0h0M944.9 99.1h0M945.3 100.6h0M945.6 100.8h0M946.0 90.5h0M946.4 93.4h0M946.7 95.7h0M947.1 96.0h0M947.5 93.8h0M947.8 97.1h0M948.2 97.7h0M948.6 102.1h0M948.9 104.0h0M949.3 108.2h0M949.7 103.6h0M950.0 105.4h0M950.8 105.4h0M951.1 99.7h0M951.5 105.9h0M951.9 102.2h0M952.2 102.4h0M952.6 97.4h0M952.9 93.1h0M953.3 98.2h0M953.7 92.8h0M954.0 100.6h0M954.4 93.9h0M954.8 103.3h0M955.1 104.8h0M955.5 99.2h0M955.9 103.5h0M956.2 104.5h0M956.6 101.9h0M957.0 101.2h0M957.3 95.4h0M957.7 105.7h0M958.1 92.3h0M958.4 97.6h0M958.8 103.8h0M959.2 96.1h0M960.3 106.3h0M960.6 95.4h0M961.0 96.4h0M961.4 88.9h0M961.7 104.7h0M962.1 103.9h0M962.4 96.4h0M962.8 98.6h0M963.2 102.1h0M963.5 106.5h0M963.9 101.6h0M964.3 105.1h0M964.6 100.8h0M965.0 101.3h0M965.4 100.3h0M965.7 100.8h0M966.1 90.1h0M966.5 89.1h0M966.8 106.8h0M967.6 100.5h0M967.9 106.0h0M968.7 98.9h0M969.0 102.4h0M969.4 101.7h0M969.8 103.5h0M970.1 102.4h0M970.5 92.3h0M970.9 100.0h0M971.6 103.2h0M971.9 98.8h0M973.0 107.5h0M973.4 108.2h0M973.8 101.5h0M975.6 104.4h0M976.0 101.3h0M976.3 101.9h0M976.7 98.3h0M977.1 104.4h0M977.4 104.3h0M977.8 103.1h0M978.2 96.4h0M978.5 89.9h0M978.9 101.1h0M979.3 94.5h0M979.6 92.2h0M980.0 102.9h0M980.4 102.9h0M980.7 97.9h0M981.1 90.3h0M981.4 97.2h0M981.8 108.1h0M982.2 104.6h0M982.5 105.7h0M982.9 92.4h0M983.3 96.3h0M983.6 96.2h0M984.0 103.3h0M984.4 106.8h0M984.7 105.6h0M985.5 103.1h0M985.8 105.8h0M986.2 93.4h0M986.6 104.3h0M986.9 102.7h0M987.3 95.2h0M987.7 101.3h0M988.0 97.2h0M988.4 99.0h0M988.8 89.4h0M989.1 84.2h0M989.5 96.8h0M989.9 101.4h0M990.2 100.4h0M990.6 107.1h0M990.9 104.2h0M991.3 105.7h0M991.7 100.9h0M992.0 95.4h0M992.4 89.4h0M992.8 99.8h0M993.1 97.8h0M993.5 91.3h0M993.9 100.0h0M994.2 99.5h0M994.6 96.4h0M995.0 102.9h0M995.3 100.2h0M995.7 99.1h0M996.1 98.0h0M996.4 101.8h0M996.8 101.0h0M997.2 104.6h0M997.5 98.9h0M997.9 103.0h0M998.3 99.8h0M998.6 91.8h0M999.0 93.0h0M999.4 91.3h0M999.7 101.8h0M1000.1 98.9h0M1000.5 100.9h0M1000.8 100.4h0M1001.2 93.1h0M1001.5 100.0h0M1001.9 104.8h0M1002.3 97.2h0M1002.6 105.0h0M1003.0 96.0h0M1003.4 99.4h0M1003.7 103.2h0M1004.1 95.1h0M1004.5 97.0h0M1004.8 91.1h0M1005.2 87.1h0M1005.6 98.7h0M1005.9 92.3h0M1006.3 98.4h0M1006.7 74.6h0M1007.0 80.7h0M1007.4 84.2h0M1007.8 90.9h0M1008.1 96.9h0M1008.5 93.3h0M1008.9 97.9h0M1009.2 89.8h0M1009.6 92.8h0M1010.0 90.1h0M1010.3 90.1h0M1010.7 91.8h0M1011.0 93.6h0M1011.4 96.9h0M1011.8 100.9h0M1012.1 90.5h0M1012.5 91.5h0M1012.9 92.5h0M1013.2 93.2h0M1013.6 99.1h0M1014.0 90.8h0M1014.3 94.8h0M1014.7 91.8h0M1015.1 97.0h0M1015.4 90.8h0M1015.8 93.2h0M1016.2 98.1h0M1016.5 104.6h0M1016.9 101.5h0M1017.3 100.2h0M1017.6 105.2h0M1018.4 96.1h0M1018.7 97.2h0M1019.1 96.0h0M1019.5 87.8h0M1019.8 98.2h0M1020.2 95.5h0M1020.5 98.8h0M1020.9 92.8h0M1021.3 91.4h0M1021.6 95.5h0M1022.0 92.3h0M1022.4 98.6h0M1024.2 105.4h0M1024.6 94.9h0M1024.9 100.3h0M1025.3 95.2h0M1025.7 107.2h0M1026.4 107.7h0M1026.8 107.9h0M1027.1 100.6h0M1028.2 99.5h0M1028.6 98.9h0M1030.0 101.0h0M1030.4 106.9h0M1030.8 107.9h0M1031.1 103.1h0M1031.5 106.2h0M1033.0 102.7h0M1033.3 107.5h0M1033.7 108.1h0M1034.1 105.5h0M1035.2 108.2h0M1035.5 104.9h0M1035.9 103.8h0M1036.3 107.1h0M1036.6 104.0h0M1037.0 108.0h0M1037.7 104.5h0M1038.1 99.5h0M1038.5 103.0h0M1038.8 104.0h0M1039.2 100.0h0M1040.3 105.9h0M1040.6 108.1h0M1041.7 107.0h0M1042.5 107.7h0M1042.8 103.7h0M1043.2 106.1h0M1043.6 107.6h0M1044.3 108.0h0M1044.7 106.8h0M1045.0 107.5h0M1046.9 94.0h0M1047.2 99.5h0M1047.6 104.5h0M1048.3 104.6h0M1048.7 100.4h0M1049.1 96.6h0M1049.4 102.3h0M1049.8 101.4h0M1050.1 94.8h0M1050.5 96.2h0M1050.9 96.9h0M1051.2 100.4h0M1051.6 101.7h0M1052.0 104.8h0M1052.3 98.1h0M1052.7 106.6h0M1053.1 103.4h0M1053.4 102.0h0M1053.8 107.6h0M1054.2 102.8h0M1054.5 96.3h0M1054.9 102.4h0M1055.3 93.7h0M1055.6 96.9h0M1056.0 96.1h0M1056.4 78.4h0M1056.7 90.1h0M1057.1 82.5h0M1057.5 88.1h0M1057.8 88.0h0M1058.2 88.1h0M1058.6 90.0h0M1058.9 95.1h0M1059.3 96.7h0M1059.6 99.2h0M1060.0 107.5h0M1060.4 95.7h0M1060.7 99.6h0M1061.1 100.4h0M1061.5 101.0h0M1061.8 103.5h0M1062.2 101.0h0M1062.6 96.8h0M1062.9 94.5h0M1063.3 94.9h0M1063.7 99.3h0M1064.0 95.2h0M1064.4 90.9h0M1064.8 92.0h0M1065.1 103.1h0M1065.5 102.4h0M1065.9 94.8h0M1066.2 94.7h0M1066.6 92.5h0M1067.0 93.5h0M1067.3 94.8h0M1067.7 100.5h0M1068.1 98.5h0M1068.4 95.4h0M1068.8 99.2h0M1069.1 102.3h0M1069.5 97.9h0M1069.9 102.0h0M1070.2 96.9h0M1070.6 100.8h0M1071.0 100.2h0M1071.3 98.4h0M1071.7 99.2h0M1072.1 104.0h0M1072.4 100.7h0M1072.8 103.9h0M1073.2 100.6h0M1073.5 104.6h0M1073.9 100.5h0M1074.3 85.4h0M1074.6 99.2h0M1075.0 98.3h0M1075.4 96.2h0M1075.7 92.7h0M1076.1 90.2h0M1076.5 103.9h0M1076.8 104.6h0M1077.2 97.9h0M1077.6 101.3h0M1077.9 99.0h0M1078.3 105.5h0M1078.6 101.1h0M1079.0 90.1h0M1079.4 93.5h0M1079.7 94.8h0M1080.1 102.2h0M1080.5 86.7h0M1080.8 93.1h0M1081.2 101.8h0M1081.6 93.7h0M1081.9 101.9h0M1082.3 94.4h0M1082.7 101.9h0M1083.0 106.4h0M1083.4 98.5h0M1083.8 106.3h0M1084.1 105.8h0M1084.5 104.9h0M1084.9 108.1h0M1085.2 102.3h0M1085.6 91.4h0M1086.0 101.5h0M1086.3 99.7h0M1086.7 99.7h0M1087.1 94.4h0M1087.4 95.4h0M1087.8 91.9h0M1088.1 96.2h0M1088.5 93.7h0M1088.9 98.6h0M1089.2 102.1h0M1089.6 100.1h0M1090.0 97.8h0M1090.3 105.2h0M1090.7 104.6h0M1091.1 102.7h0M1091.4 99.7h0M1091.8 101.3h0M1092.2 108.1h0M1092.5 102.2h0M1092.9 101.4h0M1093.3 101.3h0M1093.6 95.4h0M1094.0 105.7h0M1094.4 103.1h0M1094.7 100.5h0M1095.1 105.6h0M1095.5 105.9h0M1095.8 101.9h0M1096.2 107.5h0M1096.6 103.2h0M1096.9 102.8h0M1097.3 100.7h0M1097.6 94.0h0M1098.0 96.1h0M1098.4 97.4h0M1098.7 105.9h0M1099.5 100.3h0M1100.2 99.2h0M1100.6 102.7h0M1100.9 105.6h0M1101.3 98.3h0M1101.7 107.2h0M1102.4 101.6h0M1102.8 105.7h0M1103.1 99.4h0M1103.5 107.5h0M1103.9 84.0h0M1104.2 92.4h0M1104.6 107.4h0M1105.0 106.4h0M1105.3 105.2h0M1106.1 106.2h0M1106.8 101.0h0M1107.2 93.2h0M1107.5 105.5h0M1107.9 102.3h0M1108.2 89.4h0M1108.6 93.4h0M1109.0 99.0h0M1109.3 90.2h0M1109.7 95.5h0M1110.1 95.9h0M1110.4 87.1h0M1110.8 78.9h0M1111.2 98.9h0M1111.5 92.2h0M1111.9 94.8h0M1112.3 101.0h0M1112.6 98.3h0M1113.0 92.6h0M1113.4 95.2h0M1113.7 90.0h0M1114.1 101.3h0M1114.5 97.0h0M1114.8 88.6h0M1115.2 99.1h0M1115.6 100.1h0M1115.9 92.9h0M1116.3 95.8h0M1116.7 94.4h0M1117.0 94.4h0M1117.4 96.7h0M1117.7 93.5h0M1118.1 92.0h0M1118.5 87.5h0M1118.8 87.4h0M1119.2 91.2h0M1119.6 87.4h0M1119.9 87.2h0M1120.3 89.8h0M1120.7 83.4h0M1121.0 88.5h0M1121.4 94.5h0M1121.8 99.7h0M1122.1 101.8h0M1122.5 92.7h0M1122.9 87.5h0M1123.2 92.1h0M1123.6 89.3h0M1124.0 104.3h0M1124.3 101.6h0M1124.7 91.4h0M1125.1 93.6h0M1125.4 88.1h0M1125.8 83.7h0M1126.2 94.2h0M1126.5 100.3h0M1126.9 99.1h0M1127.2 99.7h0M1127.6 107.4h0M1128.0 105.1h0M1128.3 101.9h0M1128.7 93.7h0M1129.1 82.4h0M1129.4 88.0h0M1129.8 94.1h0M1130.5 91.6h0M1130.9 100.0h0M1131.3 99.0h0M1131.6 99.1h0M1132.7 104.9h0M1133.5 105.7h0M1133.8 100.2h0M1134.2 95.8h0M1134.6 94.6h0M1134.9 102.2h0M1135.3 94.4h0M1136.0 99.5h0M1136.4 104.9h0M1136.7 102.1h0M1137.1 94.7h0M1137.5 97.0h0M1137.8 91.8h0M1138.2 88.0h0M1138.6 92.4h0M1138.9 94.4h0M1139.3 102.9h0M1140.8 105.3h0M1141.1 99.9h0M1141.5 92.3h0M1141.9 97.1h0M1142.2 87.8h0M1142.6 94.8h0M1143.0 103.8h0M1143.3 97.8h0M1143.7 98.0h0M1144.1 91.8h0M1144.4 95.3h0M1144.8 101.1h0M1145.2 106.7h0M1146.2 107.0h0M1146.6 101.2h0M1147.7 106.1h0M1148.1 104.3h0M1148.4 107.1h0M1148.8 100.2h0M1149.2 95.1h0M1149.5 104.1h0M1149.9 99.9h0M1150.3 106.4h0M1150.6 104.9h0M1151.0 102.6h0M1151.4 104.1h0M1151.7 102.1h0M1152.1 98.6h0M1152.5 99.9h0M1152.8 106.7h0M1153.6 106.9h0M1154.3 106.0h0M1155.0 103.3h0M1155.4 103.1h0M1155.7 104.0h0M1156.1 106.8h0M1156.5 100.7h0M1156.8 107.6h0M1157.2 106.9h0M1157.6 98.5h0M1157.9 106.0h0M1158.3 106.6h0M1158.7 99.3h0M1159.0 102.1h0M1159.8 103.3h0M1160.1 100.8h0M1160.5 94.1h0M1160.9 87.8h0M1161.2 98.9h0M1161.6 94.1h0M1162.0 94.0h0M1162.3 96.9h0M1162.7 106.6h0M1163.1 105.2h0M1163.4 101.8h0M1164.5 103.2h0M1164.9 101.3h0M1165.3 93.9h0M1165.6 93.5h0M1166.0 93.7h0M1166.3 95.2h0M1166.7 107.1h0M1167.1 105.6h0M1167.4 105.0h0M1167.8 105.3h0M1168.2 100.6h0M1168.5 98.3h0M1168.9 97.3h0M1169.3 99.2h0M1169.6 84.9h0M1170.0 99.6h0M1170.4 99.5h0M1170.7 101.6h0M1171.1 98.5h0M1171.5 95.6h0M1171.8 102.1h0M1172.2 102.0h0M1172.6 97.5h0M1172.9 97.9h0M1173.3 105.1h0M1174.0 106.5h0M1174.4 105.6h0M1175.5 105.8h0M1175.8 106.6h0M1176.6 105.2h0M1176.9 104.4h0M1177.3 103.5h0M1177.7 102.1h0M1178.0 101.1h0M1178.4 99.2h0M1178.8 102.0h0M1179.1 98.1h0M1179.5 98.0h0M1179.9 100.3h0M1180.2 102.9h0M1180.6 100.5h0M1181.0 100.6h0M1181.3 99.4h0M1181.7 101.7h0M1182.1 90.9h0M1182.4 93.8h0M1182.8 93.8h0M1183.2 86.3h0M1183.5 86.6h0M1183.9 94.9h0M1184.3 91.7h0M1184.6 88.5h0M1185.0 93.8h0M1185.3 95.5h0M1185.7 96.7h0M1186.1 92.9h0M1186.4 85.4h0M1186.8 98.2h0M1187.2 86.4h0M1187.5 90.3h0M1187.9 91.9h0M1188.3 100.2h0M1188.6 90.2h0M1189.0 77.2h0M1189.4 82.1h0M1189.7 80.0h0M1190.1 83.6h0M1190.5 88.6h0M1190.8 91.6h0M1191.2 89.0h0M1191.6 89.2h0M1191.9 80.4h0M1192.3 85.7h0M1192.7 86.0h0M1193.0 102.6h0M1193.4 98.4h0M1193.8 90.9h0M1194.1 90.6h0M1194.5 85.9h0M1194.8 81.2h0M1195.2 82.6h0M1195.6 77.9h0M1195.9 92.2h0M1196.3 89.9h0M1196.7 85.9h0M1197.0 80.2h0M1197.4 83.4h0M1197.8 90.8h0M1198.1 86.2h0M1198.5 91.1h0M1198.9 92.9h0M1199.2 91.5h0M1199.6 89.6h0M1200.0 94.1h0M1200.3 85.8h0M1200.7 85.2h0M1201.1 90.8h0M1201.4 98.6h0M1201.8 97.1h0M1202.2 97.7h0M1202.5 95.9h0M1202.9 97.2h0M1203.3 96.7h0M1203.6 100.0h0M1204.0 100.2h0M1204.3 88.6h0M1204.7 94.2h0M1205.1 98.5h0M1205.4 100.1h0M1205.8 92.4h0M1206.2 104.9h0M1206.5 102.3h0M1206.9 99.9h0M1207.3 104.4h0M1207.6 104.3h0M1208.0 101.7h0M1208.4 104.5h0M1208.7 98.6h0M1209.1 94.4h0M1209.5 90.3h0M1209.8 100.1h0M1210.2 91.6h0M1210.6 103.4h0M1210.9 95.5h0M1211.3 102.2h0M1211.7 101.7h0M1212.0 99.3h0M1212.4 104.8h0M1213.1 107.5h0M1213.5 106.5h0M1213.8 106.3h0M1214.6 103.9h0M1214.9 106.8h0M1215.3 105.6h0M1215.7 105.2h0M1216.0 105.3h0M1216.4 106.5h0M1216.8 107.6h0M1217.1 104.9h0M1217.5 104.1h0M1217.9 105.3h0M1218.2 97.4h0M1219.0 99.0h0M1219.3 102.7h0M1219.7 105.5h0M1220.1 102.8h0M1220.8 103.5h0M1223.0 106.2h0M1223.4 107.2h0M1223.7 105.6h0M1224.1 100.6h0M1224.4 105.1h0M1224.8 106.4h0M1225.2 100.2h0M1225.9 101.4h0M1227.0 104.4h0M1227.4 103.9h0M1227.7 102.3h0M1228.1 102.4h0M1228.5 107.5h0M1228.8 106.5h0M1229.6 106.5h0M1230.3 104.0h0M1231.4 105.0h0M1231.8 105.1h0M1235.8 105.2h0M1236.1 104.5h0M1236.5 107.8h0M1237.2 106.6h0M1237.6 107.3h0M1238.0 104.9h0M1238.3 103.1h0M1238.7 101.4h0M1239.1 99.3h0M1239.4 94.4h0M1239.8 96.4h0M1240.2 97.1h0M1240.5 98.0h0M1240.9 96.3h0M1241.3 99.0h0M1241.6 100.0h0M1242.0 92.4h0M1242.4 90.4h0M1242.7 90.6h0M1243.1 91.3h0M1243.4 96.7h0M1243.8 93.1h0M1244.2 105.5h0M1244.5 100.0h0M1244.9 96.8h0M1245.3 95.8h0M1245.6 92.3h0M1246.0 98.5h0M1246.4 103.4h0M1246.7 92.1h0M1247.1 98.7h0M1247.5 93.8h0M1247.8 99.0h0M1248.2 104.0h0M1248.6 88.4h0M1248.9 91.3h0M1249.3 99.0h0M1249.7 90.1h0M1250.0 86.3h0M1250.4 89.1h0M1250.8 92.9h0M1251.1 84.7h0M1251.5 81.2h0M1251.9 82.5h0M1252.2 85.9h0M1252.6 88.1h0M1252.9 87.4h0M1253.3 93.2h0M1253.7 90.0h0M1254.0 89.3h0M1254.4 85.5h0M1254.8 83.4h0M1255.1 85.2h0M1255.5 85.9h0M1255.9 82.0h0M1256.2 88.1h0M1256.6 81.4h0M1257.0 83.8h0M1257.3 97.0h0M1257.7 87.5h0M1258.1 86.3h0M1258.4 87.6h0M1258.8 97.4h0M1259.2 92.8h0M1259.5 86.4h0M1259.9 90.2h0M1260.3 88.1h0M1260.6 88.0h0M1261.0 87.8h0M1261.4 91.2h0M1261.7 92.7h0M1262.1 94.8h0M1262.4 94.4h0M1262.8 95.9h0M1263.2 95.9h0M1263.5 99.5h0M1263.9 92.5h0M1264.3 86.6h0M1264.6 88.0h0M1265.0 87.1h0M1265.4 90.2h0M1265.7 85.8h0M1266.1 89.6h0M1266.5 91.6h0M1266.8 94.5h0M1267.2 86.0h0M1267.6 97.6h0M1267.9 104.9h0M1268.3 97.8h0M1268.7 100.6h0M1269.0 102.0h0M1269.4 100.0h0M1269.8 103.2h0M1270.1 94.0h0M1270.5 94.9h0M1270.9 94.7h0M1271.2 97.6h0M1271.6 95.8h0M1272.0 96.8h0M1272.3 99.6h0M1272.7 95.6h0M1273.0 93.2h0M1273.4 98.7h0M1273.8 93.2h0M1274.1 95.3h0M1274.5 98.9h0M1274.9 99.2h0M1275.2 94.4h0M1275.6 99.7h0M1276.0 96.9h0M1276.3 97.5h0M1276.7 98.0h0M1277.1 101.3h0M1277.4 100.4h0M1277.8 95.5h0M1278.2 97.6h0M1278.5 104.3h0M1278.9 96.9h0M1279.3 99.4h0M1279.6 101.6h0M1280.0 96.1h0M1280.4 94.9h0M1280.7 101.3h0M1281.1 94.5h0M1281.8 104.1h0M1282.2 104.1h0M1282.5 103.7h0M1283.3 106.8h0M1284.0 106.4h0M1284.4 103.6h0M1284.7 106.4h0M1285.5 106.1h0M1285.8 104.7h0M1286.6 102.5h0M1286.9 101.9h0M1287.3 98.0h0M1287.7 99.7h0M1288.0 101.3h0M1288.4 103.5h0M1289.1 105.5h0M1289.5 107.7h0M1290.6 107.7h0M1291.0 104.8h0M1291.3 91.7h0M1291.7 92.3h0M1292.0 98.6h0M1292.4 105.0h0M1292.8 97.4h0M1293.1 107.8h0M1293.5 100.2h0M1293.9 105.3h0M1294.2 91.0h0M1294.6 97.9h0M1295.0 96.7h0M1295.3 101.2h0M1295.7 97.5h0M1296.1 93.3h0M1296.4 98.6h0M1296.8 103.3h0M1297.2 105.4h0M1297.5 108.0h0M1297.9 105.3h0M1298.3 104.1h0M1298.6 92.2h0M1299.0 85.5h0M1299.4 98.4h0M1299.7 101.2h0M1300.1 97.5h0M1300.5 93.9h0M1300.8 101.5h0M1301.2 97.5h0M1301.5 93.1h0M1301.9 103.3h0M1302.3 105.5h0M1302.6 103.0h0M1303.0 102.2h0M546.4 66.4h0M884.5 72.0h0M402.4 69.6h0" stroke="#000" stroke-width="3.6" stroke-linecap="round"/>
<path d="M165.1 102.3h0M165.9 105.7h0M174.6 103.7h0M175.7 105.1h0M176.1 101.8h0M178.3 105.6h0M179.0 105.9h0M180.1 104.5h0M180.5 103.4h0M181.6 106.0h0M182.3 103.3h0M183.4 105.8h0M184.1 103.5h0M184.9 103.9h0M186.7 104.2h0M191.1 104.2h0M191.4 102.3h0M233.8 105.9h0M234.9 104.1h0M236.0 103.7h0M236.4 102.0h0M236.7 109.2h0M237.1 110.0h0M247.7 107.1h0M248.4 103.3h0M248.8 103.9h0M249.2 103.1h0M251.7 103.6h0M257.9 103.3h0M287.2 103.7h0M294.1 101.9h0M299.2 102.6h0M306.9 102.0h0M312.0 101.5h0M312.4 101.7h0M312.7 104.4h0M314.2 103.4h0M314.9 104.1h0M366.5 106.4h0M374.5 102.8h0M374.9 103.3h0M379.6 101.5h0M389.1 102.9h0M420.2 102.1h0M420.5 102.4h0M420.9 101.7h0M421.3 107.7h0M424.2 102.1h0M427.1 104.9h0M427.5 104.7h0M434.1 102.8h0M434.4 104.4h0M434.8 105.4h0M435.2 106.4h0M435.5 103.9h0M435.9 105.3h0M436.3 104.6h0M439.2 102.1h0M439.5 103.6h0M439.9 105.2h0M440.3 102.2h0M440.6 106.5h0M442.1 101.8h0M442.5 106.9h0M442.8 103.1h0M443.2 106.3h0M444.3 107.4h0M446.5 112.7h0M476.8 108.6h0M482.7 105.6h0M483.0 105.7h0M483.8 103.2h0M484.1 103.0h0M491.4 105.3h0M491.8 110.7h0M492.2 105.9h0M492.5 103.3h0M499.5 103.8h0M502.0 102.1h0M505.0 104.8h0M505.7 101.9h0M506.8 103.9h0M513.4 104.9h0M546.6 104.4h0M553.2 105.1h0M563.4 107.4h0M564.5 104.6h0M564.9 107.5h0M612.4 105.0h0M612.8 104.5h0M613.1 108.3h0M613.5 107.4h0M616.8 106.8h0M617.9 104.5h0M620.4 102.8h0M621.5 103.4h0M623.7 101.6h0M626.6 102.9h0M627.0 102.2h0M627.4 102.7h0M629.2 101.7h0M705.9 112.5h0M706.3 110.2h0M711.4 108.3h0M712.1 109.8h0M713.2 109.6h0M719.5 108.7h0M722.4 112.3h0M722.7 111.0h0M724.2 109.4h0M732.6 111.1h0M733.0 111.0h0M734.4 110.6h0M736.3 108.6h0M766.6 109.4h0M773.9 108.5h0M774.6 109.4h0M775.0 109.8h0M787.8 108.8h0M825.1 108.5h0M826.1 112.2h0M836.7 109.2h0M848.4 109.0h0M901.8 109.1h0M904.3 108.6h0M911.7 108.9h0M912.0 109.0h0M912.8 110.0h0M913.5 109.9h0M950.4 110.8h0M959.5 110.0h0M959.9 109.2h0M967.2 113.4h0M968.3 109.3h0M971.2 108.6h0M972.3 109.1h0M972.7 109.1h0M974.1 110.2h0M974.5 113.1h0M974.9 113.7h0M975.2 112.3h0M985.1 110.0h0M1018.0 108.9h0M1022.7 109.9h0M1023.1 112.2h0M1023.5 108.9h0M1023.8 108.8h0M1026.0 109.0h0M1027.5 109.6h0M1027.9 109.8h0M1029.0 108.3h0M1029.3 111.1h0M1029.7 113.3h0M1031.9 111.1h0M1032.2 109.1h0M1032.6 109.7h0M1034.4 108.7h0M1034.8 112.8h0M1037.4 110.2h0M1039.5 109.1h0M1039.9 108.6h0M1041.0 111.8h0M1041.4 109.7h0M1042.1 110.7h0M1043.9 109.7h0M1045.4 113.9h0M1045.8 111.6h0M1046.1 109.3h0M1046.5 110.2h0M1048.0 109.1h0M1099.1 112.4h0M1099.8 109.8h0M1102.0 109.6h0M1105.7 114.7h0M1106.4 109.0h0M1130.2 108.6h0M1132.0 109.4h0M1132.4 110.0h0M1133.1 114.9h0M1135.7 108.4h0M1139.7 123.8h0M1140.0 117.2h0M1140.4 118.3h0M1145.5 113.9h0M1145.9 113.0h0M1147.0 111.3h0M1147.3 112.3h0M1153.2 110.2h0M1153.9 117.5h0M1154.7 109.3h0M1159.4 110.0h0M1163.8 112.3h0M1164.2 108.6h0M1173.7 110.4h0M1174.8 114.3h0M1175.1 108.6h0M1176.2 109.6h0M1212.8 110.8h0M1214.2 111.2h0M1218.6 109.2h0M1220.4 110.2h0M1221.2 108.4h0M1221.5 116.4h0M1221.9 110.6h0M1222.3 112.2h0M1222.6 110.5h0M1225.5 109.6h0M1226.3 108.4h0M1226.6 108.6h0M1229.2 110.6h0M1229.9 108.5h0M1230.7 111.1h0M1231.0 109.2h0M1232.1 109.1h0M1232.5 109.2h0M1232.9 114.7h0M1233.2 113.8h0M1233.6 108.5h0M1233.9 108.6h0M1234.3 108.7h0M1234.7 109.4h0M1235.0 109.5h0M1235.4 110.1h0M1236.9 108.7h0M1281.5 109.1h0M1282.9 109.4h0M1283.6 109.9h0M1285.1 112.5h0M1286.2 109.3h0M1288.8 110.1h0M1289.9 116.5h0M1290.2 113.6h0M184.4 130.4h0M208.4 124.4h0M614.0 122.0h0M640.4 256.4h0M659.2 113.2h0M871.2 148.4h0M1055.2 59.2h0M1076.2 133.3h0M1218.2 297.2h0M1039.4 124.5h0M707.2 116.1h0M1040.4 117.1h0M1013.5 115.4h0M1097.5 119.8h0M1138.0 118.3h0M1285.5 116.2h0" stroke="#ffa500" stroke-width="3.6" stroke-linecap="round"/>
<path d="M105.5 94.0H1360" stroke="#008000" stroke-width="2.08" stroke-linecap="square"/>
<path d="M162.00 321.5V35.5M672.00 321.5V35.5M1303.00 321.5V35.5" stroke="#800080" stroke-width="2.08" stroke-dasharray="2.08 3.44"/>
</g>
<path d="M105.5 35.5H1485.5V321.5H105.5Z" fill="none" stroke="#000" stroke-width="1.11" stroke-linejoin="miter"/>
<path d="M162.50 321.5v4.86M345.50 321.5v4.86M528.50 321.5v4.86M710.50 321.5v4.86M893.50 321.5v4.86M1076.50 321.5v4.86M1258.50 321.5v4.86M1441.50 321.5v4.86" stroke="#000" stroke-width="1.11"/>
<text x="162.20" y="342.20" font-size="14.72" text-anchor="middle" textLength="8.84" lengthAdjust="spacingAndGlyphs" fill="#000">0</text>
<text x="344.90" y="342.20" font-size="14.72" text-anchor="middle" textLength="26.51" lengthAdjust="spacingAndGlyphs" fill="#000">500</text>
<text x="527.61" y="342.20" font-size="14.72" text-anchor="middle" textLength="35.35" lengthAdjust="spacingAndGlyphs" fill="#000">1000</text>
<text x="710.32" y="342.20" font-size="14.72" text-anchor="middle" textLength="35.35" lengthAdjust="spacingAndGlyphs" fill="#000">1500</text>
<text x="893.02" y="342.20" font-size="14.72" text-anchor="middle" textLength="35.35" lengthAdjust="spacingAndGlyphs" fill="#000">2000</text>
<text x="1075.72" y="342.20" font-size="14.72" text-anchor="middle" textLength="35.35" lengthAdjust="spacingAndGlyphs" fill="#000">2500</text>
<text x="1258.43" y="342.20" font-size="14.72" text-anchor="middle" textLength="35.35" lengthAdjust="spacingAndGlyphs" fill="#000">3000</text>
<text x="1441.13" y="342.20" font-size="14.72" text-anchor="middle" textLength="35.35" lengthAdjust="spacingAndGlyphs" fill="#000">3500</text>
<path d="M100.64 73.50H105.5M100.64 111.50H105.5M100.64 149.50H105.5M100.64 187.50H105.5M100.64 224.50H105.5M100.64 262.50H105.5M100.64 300.50H105.5" stroke="#000" stroke-width="1.11"/>
<text x="95.60" y="78.60" font-size="14.72" text-anchor="end" textLength="30.92" lengthAdjust="spacingAndGlyphs" fill="#000">8.50</text>
<text x="95.60" y="116.60" font-size="14.72" text-anchor="end" textLength="30.92" lengthAdjust="spacingAndGlyphs" fill="#000">8.45</text>
<text x="95.60" y="154.60" font-size="14.72" text-anchor="end" textLength="30.92" lengthAdjust="spacingAndGlyphs" fill="#000">8.40</text>
<text x="95.60" y="192.60" font-size="14.72" text-anchor="end" textLength="30.92" lengthAdjust="spacingAndGlyphs" fill="#000">8.35</text>
<text x="95.60" y="229.60" font-size="14.72" text-anchor="end" textLength="30.92" lengthAdjust="spacingAndGlyphs" fill="#000">8.30</text>
<text x="95.60" y="267.60" font-size="14.72" text-anchor="end" textLength="30.92" lengthAdjust="spacingAndGlyphs" fill="#000">8.25</text>
<text x="95.60" y="305.60" font-size="14.72" text-anchor="end" textLength="30.92" lengthAdjust="spacingAndGlyphs" fill="#000">8.20</text>
<text x="795.00" y="26.70" font-size="16.33" text-anchor="middle" textLength="207.93" lengthAdjust="spacingAndGlyphs" fill="#000">AGASC ID 1041506808.0</text>
<text x="416.60" y="312.00" font-size="14.72" text-anchor="middle" textLength="44.18" lengthAdjust="spacingAndGlyphs" fill="#000">45130</text>
<text x="987.50" y="291.90" font-size="14.72" text-anchor="middle" textLength="44.18" lengthAdjust="spacingAndGlyphs" fill="#000">45128</text>
<rect x="1361.3" y="42.4" width="117.40" height="27.00" rx="2.8" fill="#fff" fill-opacity="0.8" stroke="#cccccc" stroke-width="1.1"/>
<path d="M1366 53.9H1396" stroke="#008000" stroke-width="2.08"/>
<text x="1407.20" y="58.90" font-size="14.72" text-anchor="start" textLength="30.86" lengthAdjust="spacingAndGlyphs" fill="#000">mag</text>
<text x="1438.40" y="60.60" font-size="10.30" text-anchor="start" textLength="33.79" lengthAdjust="spacingAndGlyphs" font-style="italic" fill="#000">AGASC</text>
<rect x="1348.3" y="247.5" width="130.40" height="66.60" rx="2.8" fill="#fff" fill-opacity="0.8" stroke="#cccccc" stroke-width="1.1"/>
<path d="M1367.5 260.3h0" stroke="#ff0000" stroke-width="3" stroke-linecap="round"/>
<path d="M1367.5 281.3h0" stroke="#ffa500" stroke-width="3" stroke-linecap="round"/>
<path d="M1367.5 302.4h0" stroke="#000" stroke-width="3" stroke-linecap="round"/>
<text x="1392.80" y="264.00" font-size="14.72" text-anchor="start" textLength="47.20" lengthAdjust="spacingAndGlyphs" fill="#000">not OK</text>
<text x="1392.80" y="284.80" font-size="14.72" text-anchor="start" textLength="80.07" lengthAdjust="spacingAndGlyphs" fill="#000">Highlighted</text>
<text x="1392.80" y="305.60" font-size="14.72" text-anchor="start" textLength="20.04" lengthAdjust="spacingAndGlyphs" fill="#000">OK</text>
<g clip-path="url(#c2)">
<path d="M162.2 560.1h0M162.6 566.9h0M162.9 573.9h0M163.3 566.8h0M163.7 559.0h0M164.0 555.9h0M164.4 559.4h0M164.8 568.4h0M165.5 566.9h0M166.2 568.1h0M166.6 572.2h0M167.0 570.3h0M167.3 564.2h0M167.7 563.6h0M168.0 553.0h0M168.4 561.0h0M168.8 549.2h0M169.1 543.3h0M169.5 545.1h0M169.9 556.3h0M170.2 547.8h0M170.6 558.5h0M171.0 563.0h0M171.3 570.4h0M171.7 550.8h0M172.1 549.7h0M172.4 561.5h0M172.8 561.9h0M173.2 540.0h0M173.5 546.6h0M173.9 558.5h0M174.3 555.6h0M175.0 563.8h0M175.4 573.9h0M176.5 563.4h0M176.8 569.6h0M177.2 573.0h0M177.5 548.2h0M177.9 568.4h0M178.6 554.7h0M179.4 571.1h0M179.7 562.6h0M180.8 572.2h0M181.2 569.9h0M181.9 576.2h0M182.7 571.3h0M183.0 565.2h0M183.8 565.8h0M184.5 565.6h0M185.2 559.4h0M185.6 558.0h0M186.0 554.3h0M186.3 569.9h0M187.0 565.3h0M187.4 536.7h0M187.8 565.1h0M188.1 561.8h0M188.5 533.0h0M188.9 538.4h0M189.2 557.2h0M189.6 553.6h0M190.0 569.5h0M190.3 552.0h0M190.7 551.4h0M191.8 537.5h0M192.2 562.7h0M192.5 555.0h0M192.9 549.4h0M193.3 533.8h0M193.6 533.7h0M194.0 549.7h0M194.4 556.9h0M194.7 558.0h0M195.1 561.0h0M195.5 563.0h0M195.8 550.4h0M196.2 560.5h0M196.5 569.1h0M196.9 560.7h0M197.3 531.8h0M197.6 531.8h0M198.0 512.3h0M198.4 481.7h0M198.7 512.2h0M199.1 513.8h0M199.5 500.0h0M199.8 565.3h0M200.2 554.2h0M200.6 539.7h0M200.9 532.0h0M201.3 565.6h0M201.7 539.2h0M202.0 528.7h0M202.4 543.2h0M202.8 559.4h0M203.1 552.6h0M203.5 556.4h0M203.9 548.8h0M204.2 514.8h0M204.6 533.9h0M205.0 520.1h0M205.3 551.9h0M205.7 532.6h0M206.0 555.0h0M206.4 551.3h0M206.8 542.2h0M207.1 522.5h0M207.5 502.4h0M207.9 516.1h0M208.2 502.5h0M208.6 550.5h0M209.0 530.0h0M209.3 535.7h0M209.7 545.9h0M210.1 545.7h0M210.4 565.8h0M210.8 535.3h0M211.2 548.2h0M211.5 576.2h0M211.9 551.3h0M212.3 542.0h0M212.6 534.1h0M213.0 539.1h0M213.4 552.9h0M213.7 544.1h0M214.1 541.6h0M214.5 550.4h0M214.8 531.7h0M215.2 521.0h0M215.5 558.9h0M215.9 558.0h0M216.3 558.8h0M216.6 534.9h0M217.0 534.6h0M217.4 542.6h0M217.7 533.1h0M218.1 551.4h0M218.5 521.3h0M218.8 539.0h0M219.2 514.2h0M219.6 530.6h0M219.9 544.8h0M220.3 544.8h0M220.7 516.8h0M221.0 518.5h0M221.4 539.6h0M221.8 520.9h0M222.1 517.1h0M222.5 534.4h0M222.9 518.8h0M223.2 527.9h0M223.6 516.8h0M224.0 528.8h0M224.3 513.6h0M224.7 547.6h0M225.1 526.9h0M225.4 530.8h0M225.8 510.9h0M226.1 487.2h0M226.5 527.8h0M226.9 518.7h0M227.2 541.0h0M227.6 537.9h0M228.0 524.9h0M228.3 526.2h0M228.7 561.3h0M229.1 529.4h0M229.4 530.0h0M229.8 538.7h0M230.2 550.8h0M230.5 558.6h0M230.9 569.2h0M231.3 569.6h0M231.6 518.8h0M232.0 550.0h0M232.4 565.1h0M232.7 555.9h0M233.1 560.6h0M233.5 566.4h0M234.2 575.7h0M234.6 562.4h0M235.3 555.2h0M235.6 565.7h0M237.5 557.6h0M237.8 541.6h0M238.2 552.2h0M238.6 552.7h0M238.9 549.7h0M239.3 557.4h0M239.7 551.0h0M240.0 539.2h0M240.4 535.1h0M240.8 569.7h0M241.1 556.9h0M241.5 559.6h0M241.9 562.8h0M242.2 545.1h0M242.6 546.9h0M243.0 566.2h0M243.3 531.5h0M243.7 555.6h0M244.1 567.7h0M244.4 559.4h0M244.8 558.3h0M245.1 560.1h0M245.5 571.8h0M245.9 542.8h0M246.2 559.7h0M246.6 561.8h0M247.0 566.1h0M247.3 560.6h0M248.1 569.8h0M249.5 560.7h0M249.9 560.6h0M250.3 561.4h0M250.6 569.2h0M251.0 573.6h0M251.4 565.0h0M252.1 570.5h0M252.5 565.6h0M252.8 571.9h0M253.2 535.1h0M253.6 520.0h0M253.9 530.7h0M254.3 575.0h0M254.6 571.7h0M255.0 557.3h0M255.4 549.2h0M255.7 571.5h0M256.1 561.3h0M256.5 574.6h0M256.8 559.6h0M257.2 569.5h0M257.6 572.6h0M258.3 568.5h0M258.7 561.8h0M259.0 551.1h0M259.4 555.1h0M259.8 559.9h0M260.1 546.2h0M260.5 545.7h0M260.9 553.8h0M261.2 516.4h0M261.6 557.3h0M262.0 552.3h0M262.3 560.3h0M262.7 538.6h0M263.1 543.9h0M263.4 508.2h0M263.8 542.7h0M264.1 521.4h0M264.5 534.1h0M264.9 518.8h0M265.2 510.9h0M265.6 524.3h0M266.0 545.5h0M266.3 539.8h0M266.7 545.5h0M267.1 548.0h0M267.4 539.5h0M267.8 531.3h0M268.2 520.5h0M268.5 553.4h0M268.9 549.1h0M269.3 551.8h0M269.6 545.9h0M270.0 539.9h0M270.4 554.8h0M270.7 529.8h0M271.1 528.6h0M271.5 535.6h0M271.8 547.0h0M272.2 564.8h0M272.6 525.9h0M272.9 538.5h0M273.3 535.8h0M273.7 539.2h0M274.0 543.2h0M274.4 547.8h0M274.7 551.0h0M275.1 520.5h0M275.5 518.2h0M275.8 549.2h0M276.2 548.1h0M276.6 530.4h0M276.9 513.9h0M277.3 547.4h0M277.7 516.9h0M278.0 531.8h0M278.4 518.1h0M278.8 530.3h0M279.1 521.7h0M279.5 550.4h0M279.9 569.6h0M280.2 521.0h0M280.6 522.1h0M281.0 553.9h0M281.3 529.2h0M281.7 509.0h0M282.1 530.2h0M282.4 559.1h0M282.8 543.6h0M283.2 530.0h0M283.5 518.0h0M283.9 523.7h0M284.2 517.4h0M284.6 499.4h0M285.0 527.9h0M285.3 519.1h0M285.7 558.5h0M286.1 567.3h0M286.4 553.3h0M286.8 562.4h0M287.5 571.5h0M287.9 546.8h0M288.3 541.7h0M288.6 544.5h0M289.0 553.6h0M289.4 557.2h0M289.7 550.9h0M290.1 537.4h0M290.5 531.8h0M290.8 528.5h0M291.2 526.0h0M291.6 548.3h0M291.9 557.0h0M292.3 553.1h0M292.7 537.0h0M293.0 559.8h0M293.4 545.5h0M293.7 559.1h0M294.5 564.5h0M294.8 559.8h0M295.2 531.7h0M295.6 546.1h0M295.9 524.7h0M296.3 535.6h0M296.7 549.5h0M297.0 565.6h0M297.4 559.2h0M297.8 536.6h0M298.1 547.2h0M298.5 540.6h0M298.9 560.4h0M299.6 565.0h0M300.0 560.6h0M300.3 549.6h0M300.7 550.7h0M301.1 562.3h0M301.4 560.7h0M301.8 550.5h0M302.2 542.0h0M302.5 544.2h0M302.9 571.9h0M303.2 575.3h0M303.6 550.8h0M304.0 573.6h0M304.3 572.3h0M304.7 557.0h0M305.1 557.6h0M305.4 538.7h0M305.8 546.1h0M306.2 544.5h0M306.5 557.0h0M307.3 573.9h0M307.6 557.8h0M308.0 548.7h0M308.4 547.9h0M308.7 566.2h0M309.1 566.3h0M309.5 566.3h0M309.8 574.2h0M310.2 568.9h0M310.6 561.6h0M310.9 552.7h0M311.3 563.3h0M311.7 535.9h0M313.1 567.5h0M313.5 559.1h0M313.8 557.8h0M314.6 569.7h0M315.3 575.2h0M315.7 570.8h0M316.0 541.5h0M316.4 532.2h0M316.8 561.8h0M317.1 549.9h0M317.5 560.2h0M317.9 559.0h0M318.2 542.1h0M318.6 551.1h0M319.0 541.5h0M319.3 545.7h0M319.7 530.8h0M320.1 527.4h0M320.4 536.3h0M320.8 516.8h0M321.2 505.5h0M321.5 523.4h0M321.9 550.8h0M322.2 524.6h0M322.6 542.2h0M323.0 522.3h0M323.3 512.7h0M323.7 519.0h0M324.1 520.4h0M324.4 553.1h0M324.8 533.0h0M325.2 538.8h0M325.5 535.0h0M325.9 519.8h0M326.3 528.6h0M326.6 528.9h0M327.0 538.0h0M327.4 533.6h0M327.7 521.3h0M328.1 520.7h0M328.5 515.0h0M328.8 530.6h0M329.2 511.4h0M329.6 529.6h0M329.9 483.9h0M330.3 516.6h0M330.7 528.9h0M331.0 491.9h0M331.4 495.4h0M331.8 523.1h0M332.1 517.8h0M332.5 500.0h0M332.8 506.7h0M333.2 498.6h0M333.6 507.2h0M333.9 530.1h0M334.3 504.7h0M334.7 510.9h0M335.0 505.4h0M335.4 519.9h0M335.8 512.1h0M336.1 507.8h0M336.5 492.3h0M336.9 509.3h0M337.2 522.1h0M337.6 519.2h0M338.0 519.1h0M338.3 510.8h0M338.7 518.8h0M339.1 535.1h0M339.4 524.1h0M339.8 494.8h0M340.2 503.8h0M340.5 498.4h0M340.9 506.2h0M341.3 523.4h0M341.6 509.1h0M342.0 513.6h0M342.3 485.4h0M342.7 528.8h0M343.1 481.5h0M343.4 511.7h0M343.8 516.5h0M344.2 522.5h0M344.5 517.3h0M344.9 509.2h0M345.3 524.2h0M345.6 512.1h0M346.0 540.6h0M346.4 528.4h0M346.7 521.8h0M347.1 533.9h0M347.5 499.7h0M347.8 506.7h0M348.2 523.3h0M348.6 510.6h0M348.9 537.1h0M349.3 516.5h0M349.7 529.7h0M350.0 521.3h0M350.4 553.4h0M350.8 559.4h0M351.1 563.3h0M351.5 551.4h0M351.8 549.2h0M352.2 538.7h0M352.6 533.3h0M352.9 496.3h0M353.3 531.3h0M353.7 536.3h0M354.0 542.0h0M354.4 543.3h0M354.8 525.1h0M355.1 526.3h0M355.5 533.4h0M355.9 549.6h0M356.2 521.7h0M356.6 530.4h0M357.0 561.5h0M357.3 516.2h0M357.7 562.3h0M358.1 525.5h0M358.4 516.7h0M358.8 547.1h0M359.2 533.8h0M359.5 514.8h0M359.9 562.1h0M360.3 545.1h0M360.6 563.1h0M361.0 542.8h0M361.3 521.1h0M361.7 550.7h0M362.1 555.2h0M362.4 573.3h0M362.8 561.1h0M363.2 562.2h0M363.5 558.5h0M363.9 556.0h0M364.3 555.3h0M364.6 560.7h0M365.0 545.7h0M365.4 535.1h0M365.7 567.8h0M366.1 568.5h0M366.8 568.0h0M367.2 554.0h0M367.6 572.0h0M367.9 558.9h0M368.3 564.0h0M368.7 528.4h0M369.0 571.9h0M369.4 576.4h0M369.8 567.4h0M370.1 571.6h0M370.5 559.5h0M370.8 567.6h0M371.2 563.0h0M371.6 517.8h0M371.9 536.9h0M372.3 530.7h0M372.7 533.4h0M373.0 519.2h0M373.4 543.1h0M373.8 560.5h0M374.1 544.9h0M375.2 575.1h0M375.6 573.9h0M376.0 549.5h0M376.3 546.2h0M376.7 540.3h0M377.1 548.8h0M377.4 560.7h0M377.8 576.4h0M378.2 563.4h0M378.5 570.5h0M378.9 561.9h0M379.3 564.1h0M380.0 566.4h0M380.3 557.6h0M380.7 551.2h0M381.1 555.3h0M381.4 525.1h0M381.8 551.4h0M382.2 538.1h0M382.5 562.0h0M382.9 530.5h0M383.3 547.4h0M383.6 529.5h0M384.0 535.6h0M384.4 534.1h0M384.7 529.0h0M385.1 549.5h0M385.5 549.6h0M385.8 530.2h0M386.2 549.8h0M386.6 558.2h0M386.9 517.7h0M387.3 537.5h0M387.7 536.8h0M388.0 542.4h0M388.4 565.1h0M388.8 562.3h0M389.5 543.4h0M389.9 565.1h0M390.2 554.5h0M390.6 523.7h0M390.9 534.9h0M391.3 572.2h0M391.7 549.1h0M392.0 549.7h0M392.4 554.8h0M392.8 552.1h0M393.1 536.5h0M393.5 531.5h0M393.9 538.6h0M394.2 521.3h0M394.6 532.3h0M395.0 541.2h0M395.3 534.1h0M395.7 540.0h0M396.1 524.6h0M396.4 533.2h0M396.8 503.4h0M397.2 496.7h0M397.5 520.6h0M397.9 529.7h0M398.3 526.3h0M398.6 532.7h0M399.0 542.5h0M399.4 536.3h0M399.7 538.6h0M400.1 539.1h0M400.4 518.9h0M400.8 496.7h0M401.2 510.9h0M401.5 528.5h0M401.9 540.0h0M402.3 516.5h0M402.6 520.9h0M403.0 514.9h0M403.4 538.9h0M403.7 519.7h0M404.1 515.0h0M404.5 528.6h0M404.8 559.7h0M405.2 559.6h0M405.6 535.3h0M405.9 548.4h0M406.3 546.6h0M406.7 544.5h0M407.0 529.2h0M407.4 538.5h0M407.8 541.9h0M408.1 517.8h0M408.5 506.6h0M408.9 490.1h0M409.2 534.4h0M409.6 519.7h0M409.9 532.4h0M410.3 523.7h0M410.7 516.5h0M411.0 542.9h0M411.4 536.4h0M411.8 525.8h0M412.1 524.0h0M412.5 521.6h0M412.9 539.3h0M413.2 519.0h0M413.6 535.3h0M414.0 519.5h0M414.3 521.2h0M414.7 551.0h0M415.1 526.6h0M415.4 510.4h0M415.8 501.7h0M416.2 555.5h0M416.5 562.9h0M416.9 550.4h0M417.3 545.0h0M417.6 565.0h0M418.0 548.9h0M418.4 552.8h0M418.7 569.0h0M419.1 570.8h0M419.4 558.7h0M419.8 557.0h0M421.6 551.6h0M422.0 567.9h0M422.4 555.7h0M422.7 565.6h0M423.1 557.7h0M423.5 565.9h0M423.8 559.9h0M424.6 567.1h0M424.9 565.4h0M425.3 558.9h0M425.7 555.2h0M426.0 541.2h0M426.4 569.4h0M426.8 563.1h0M427.9 570.9h0M428.2 554.6h0M428.6 544.7h0M428.9 541.1h0M429.3 563.1h0M429.7 560.1h0M430.0 548.7h0M430.4 568.2h0M430.8 559.8h0M431.1 557.4h0M431.5 573.3h0M431.9 566.8h0M432.2 566.0h0M432.6 566.4h0M433.0 550.3h0M433.3 544.3h0M433.7 557.4h0M436.6 573.0h0M437.0 569.7h0M437.4 574.3h0M437.7 566.0h0M438.1 565.0h0M438.4 572.5h0M438.8 559.8h0M441.0 564.5h0M441.4 563.8h0M441.7 572.8h0M443.6 567.7h0M443.9 567.6h0M444.7 566.3h0M445.0 561.3h0M445.4 544.3h0M445.8 571.5h0M446.1 565.1h0M446.9 558.6h0M447.2 570.4h0M447.6 553.3h0M448.0 551.1h0M448.3 551.0h0M448.7 558.2h0M449.0 531.4h0M449.4 542.5h0M449.8 525.2h0M450.1 529.1h0M450.5 552.5h0M450.9 540.5h0M451.2 547.9h0M451.6 558.0h0M452.0 527.8h0M452.3 528.9h0M452.7 534.3h0M453.1 516.6h0M453.4 538.4h0M453.8 524.1h0M454.2 525.3h0M454.5 537.8h0M454.9 525.9h0M455.3 532.2h0M455.6 529.0h0M456.0 542.8h0M456.4 548.6h0M456.7 536.6h0M457.1 555.4h0M457.5 534.1h0M457.8 537.3h0M458.2 515.7h0M458.5 544.3h0M458.9 528.3h0M459.3 532.9h0M459.6 517.5h0M460.0 548.7h0M460.4 523.5h0M460.7 525.9h0M461.1 529.2h0M461.5 518.0h0M461.8 524.3h0M462.2 526.0h0M462.6 521.7h0M462.9 524.1h0M463.3 537.8h0M463.7 526.9h0M464.0 529.8h0M464.4 534.4h0M464.8 559.5h0M465.1 538.2h0M465.5 542.3h0M465.9 530.2h0M466.2 533.1h0M466.6 510.1h0M467.0 529.6h0M467.3 533.4h0M467.7 516.9h0M468.0 506.2h0M468.4 514.1h0M468.8 516.2h0M469.1 499.6h0M469.5 511.9h0M469.9 527.1h0M470.2 538.2h0M470.6 515.5h0M471.0 519.5h0M471.3 531.2h0M471.7 558.3h0M472.1 551.3h0M472.4 531.1h0M472.8 530.0h0M473.2 528.9h0M473.5 531.0h0M473.9 516.8h0M474.3 556.7h0M474.6 552.5h0M475.0 564.1h0M475.4 555.6h0M475.7 563.9h0M476.1 538.9h0M476.5 542.6h0M477.2 562.1h0M477.5 554.2h0M477.9 564.3h0M478.3 555.7h0M478.6 561.1h0M479.0 545.0h0M479.4 541.5h0M479.7 550.7h0M480.1 559.9h0M480.5 553.0h0M480.8 575.8h0M481.2 559.0h0M481.6 572.7h0M481.9 549.7h0M482.3 567.8h0M483.4 569.3h0M484.5 561.6h0M484.9 566.6h0M485.2 558.6h0M485.6 574.2h0M486.0 568.8h0M486.3 566.8h0M486.7 567.7h0M487.0 561.8h0M487.4 562.4h0M487.8 533.1h0M488.1 553.5h0M488.5 558.3h0M488.9 547.5h0M489.2 551.3h0M489.6 564.4h0M490.0 530.2h0M490.3 537.6h0M490.7 538.8h0M491.1 566.2h0M492.9 569.7h0M493.3 555.4h0M493.6 569.6h0M494.0 548.0h0M494.4 568.5h0M494.7 562.4h0M495.1 574.4h0M495.5 567.1h0M495.8 561.6h0M496.2 561.0h0M496.6 569.3h0M496.9 566.1h0M497.3 561.5h0M497.6 546.6h0M498.0 536.3h0M498.4 558.8h0M498.7 562.8h0M499.1 561.4h0M499.8 567.6h0M500.2 563.5h0M500.6 559.5h0M500.9 546.7h0M501.3 573.2h0M501.7 570.7h0M502.4 568.9h0M502.8 559.0h0M503.1 572.6h0M503.5 576.3h0M503.9 555.5h0M504.2 555.2h0M504.6 573.1h0M505.3 574.9h0M506.1 561.7h0M506.4 574.3h0M507.1 574.6h0M507.5 555.5h0M507.9 545.9h0M508.2 559.0h0M508.6 548.0h0M509.0 557.4h0M509.3 542.4h0M509.7 568.8h0M510.1 570.7h0M510.4 548.1h0M510.8 573.5h0M511.2 562.7h0M511.5 571.4h0M511.9 555.5h0M512.3 561.3h0M512.6 561.6h0M513.0 555.3h0M513.7 559.8h0M514.1 534.4h0M514.5 546.1h0M514.8 548.5h0M515.2 541.4h0M515.6 550.8h0M515.9 551.0h0M516.3 557.2h0M516.6 567.6h0M517.0 558.6h0M517.4 522.5h0M517.7 547.4h0M518.1 506.6h0M518.5 526.3h0M518.8 529.7h0M519.2 516.0h0M519.6 537.7h0M519.9 517.8h0M520.3 532.0h0M520.7 518.1h0M521.0 521.8h0M521.4 523.2h0M521.8 543.7h0M522.1 540.4h0M522.5 533.8h0M522.9 539.9h0M523.2 538.4h0M523.6 538.1h0M524.0 554.6h0M524.3 542.6h0M524.7 521.8h0M525.1 527.7h0M525.4 520.7h0M525.8 523.6h0M526.1 525.6h0M526.5 533.8h0M526.9 534.4h0M527.2 530.2h0M527.6 527.2h0M528.0 519.7h0M528.3 539.5h0M528.7 543.6h0M529.1 551.1h0M529.4 554.3h0M529.8 555.0h0M530.2 549.0h0M530.5 532.9h0M530.9 543.3h0M531.3 519.9h0M531.6 537.8h0M532.0 526.2h0M532.4 507.3h0M532.7 514.7h0M533.1 498.8h0M533.5 529.6h0M533.8 494.3h0M534.2 511.6h0M534.6 509.5h0M534.9 534.7h0M535.3 507.2h0M535.6 503.9h0M536.0 496.8h0M536.4 496.7h0M536.7 506.4h0M537.1 526.1h0M537.5 520.3h0M537.8 520.0h0M538.2 521.7h0M538.6 536.8h0M538.9 523.3h0M539.3 541.0h0M539.7 520.9h0M540.0 541.2h0M540.4 539.8h0M540.8 543.8h0M541.1 534.3h0M541.5 542.1h0M541.9 538.5h0M542.2 555.9h0M542.6 541.0h0M543.0 552.1h0M543.3 522.1h0M543.7 553.9h0M544.1 526.2h0M544.4 540.3h0M544.8 547.9h0M545.1 539.8h0M545.5 517.4h0M545.9 534.0h0M546.2 576.4h0M547.0 540.1h0M547.3 544.8h0M547.7 539.4h0M548.1 563.3h0M548.4 554.3h0M548.8 533.2h0M549.2 537.5h0M549.5 563.5h0M549.9 567.8h0M550.3 544.2h0M550.6 527.4h0M551.0 549.6h0M551.4 501.6h0M551.7 543.9h0M552.1 529.1h0M552.5 547.1h0M552.8 569.2h0M553.6 544.5h0M553.9 557.4h0M554.3 556.6h0M554.7 559.8h0M555.0 539.7h0M555.4 551.1h0M555.7 521.4h0M556.1 554.7h0M556.5 539.6h0M556.8 526.3h0M557.2 542.4h0M557.6 547.3h0M557.9 547.1h0M558.3 542.2h0M558.7 563.0h0M559.0 568.5h0M559.4 551.0h0M559.8 531.1h0M560.1 531.3h0M560.5 534.5h0M560.9 551.4h0M561.2 559.9h0M561.6 553.7h0M562.0 562.5h0M562.3 566.8h0M562.7 564.7h0M563.1 575.9h0M563.8 570.0h0M564.2 553.2h0M565.2 576.2h0M565.6 569.6h0M566.0 557.5h0M566.3 555.3h0M566.7 562.2h0M567.1 559.8h0M567.4 547.5h0M567.8 526.2h0M568.2 535.9h0M568.5 529.0h0M568.9 524.2h0M569.3 547.4h0M569.6 558.4h0M570.0 539.4h0M570.4 561.2h0M570.7 557.2h0M571.1 544.1h0M571.5 551.0h0M571.8 528.3h0M572.2 537.7h0M572.6 522.6h0M572.9 538.2h0M573.3 549.4h0M573.7 522.4h0M574.0 519.6h0M574.4 516.4h0M574.7 528.7h0M575.1 519.6h0M575.5 543.4h0M575.8 521.8h0M576.2 498.9h0M576.6 507.2h0M576.9 501.1h0M577.3 505.5h0M577.7 532.2h0M578.0 552.7h0M578.4 517.7h0M578.8 519.2h0M579.1 553.6h0M579.5 535.8h0M579.9 530.6h0M580.2 537.3h0M580.6 570.4h0M581.0 571.5h0M581.3 553.6h0M581.7 550.3h0M582.1 561.1h0M582.4 544.4h0M582.8 511.9h0M583.2 528.3h0M583.5 521.2h0M583.9 531.3h0M584.2 527.4h0M584.6 550.9h0M585.0 534.1h0M585.3 518.7h0M585.7 532.3h0M586.1 532.2h0M586.4 550.8h0M586.8 526.9h0M587.2 522.0h0M587.5 502.3h0M587.9 500.3h0M588.3 530.9h0M588.6 524.1h0M589.0 523.0h0M589.4 510.6h0M589.7 526.3h0M590.1 518.6h0M590.5 522.4h0M590.8 521.6h0M591.2 514.5h0M591.6 508.0h0M591.9 531.5h0M592.3 517.1h0M592.7 516.7h0M593.0 528.2h0M593.4 529.2h0M593.7 517.3h0M594.1 520.0h0M594.5 528.3h0M594.8 523.3h0M595.2 513.3h0M595.6 526.7h0M595.9 522.6h0M596.3 514.6h0M596.7 516.3h0M597.0 535.8h0M597.4 542.9h0M597.8 544.7h0M598.1 542.4h0M598.5 551.3h0M598.9 563.1h0M599.2 559.6h0M599.6 551.7h0M600.0 559.9h0M600.3 564.2h0M600.7 540.5h0M601.1 542.7h0M601.4 529.3h0M601.8 540.8h0M602.2 524.1h0M602.5 526.0h0M602.9 529.0h0M603.2 547.0h0M603.6 556.3h0M604.0 556.2h0M604.3 562.6h0M604.7 544.9h0M605.1 536.6h0M605.4 540.4h0M605.8 543.0h0M606.2 566.1h0M606.5 569.7h0M606.9 548.8h0M607.3 536.5h0M607.6 535.2h0M608.0 525.0h0M608.4 542.3h0M608.7 546.1h0M609.1 536.2h0M609.5 566.9h0M609.8 558.4h0M610.2 571.7h0M610.6 565.4h0M610.9 552.7h0M611.3 559.6h0M611.7 562.2h0M612.0 575.8h0M613.8 567.0h0M614.2 566.8h0M614.6 568.0h0M614.9 567.6h0M615.3 565.8h0M615.7 571.1h0M616.0 560.6h0M616.4 569.4h0M617.1 569.0h0M617.5 574.1h0M618.2 567.0h0M618.6 545.6h0M619.0 538.8h0M619.3 545.5h0M619.7 548.3h0M620.1 561.7h0M620.8 572.8h0M621.2 566.3h0M621.9 568.0h0M622.3 567.5h0M622.6 560.5h0M623.0 565.5h0M623.3 573.9h0M624.1 568.5h0M624.4 564.4h0M624.8 571.1h0M625.2 561.7h0M625.5 562.7h0M625.9 556.6h0M626.3 565.3h0M627.7 563.1h0M628.1 562.6h0M628.5 557.2h0M628.8 568.9h0M629.6 569.3h0M629.9 536.8h0M630.3 543.0h0M630.7 555.9h0M631.0 557.4h0M631.4 573.4h0M631.8 549.6h0M632.1 567.6h0M632.5 564.1h0M632.8 560.9h0M633.2 538.8h0M633.6 527.2h0M633.9 500.5h0M634.3 539.9h0M634.7 511.8h0M635.0 528.3h0M635.4 550.2h0M635.8 558.8h0M636.1 545.0h0M636.5 540.1h0M636.9 539.9h0M637.2 552.4h0M637.6 547.5h0M638.0 537.0h0M638.3 511.7h0M638.7 548.4h0M639.1 527.2h0M639.4 533.2h0M639.8 523.7h0M640.2 524.4h0M640.5 555.3h0M640.9 549.2h0M641.3 541.6h0M641.6 511.0h0M642.0 557.1h0M642.3 522.8h0M642.7 547.9h0M643.1 555.0h0M643.4 498.5h0M643.8 511.1h0M644.2 516.8h0M644.5 546.5h0M644.9 543.6h0M645.3 559.0h0M645.6 525.9h0M646.0 540.7h0M646.4 569.6h0M646.7 545.0h0M647.1 534.8h0M647.5 538.4h0M647.8 525.8h0M648.2 559.2h0M648.6 559.7h0M648.9 552.7h0M649.3 536.3h0M649.7 545.5h0M650.0 541.9h0M650.4 524.2h0M650.8 524.9h0M651.1 524.3h0M651.5 532.5h0M651.8 544.8h0M652.2 566.0h0M652.6 537.5h0M652.9 524.8h0M653.3 511.9h0M653.7 520.7h0M654.0 502.0h0M654.4 514.3h0M654.8 510.8h0M655.1 502.2h0M655.5 500.1h0M655.9 492.4h0M656.2 501.0h0M656.6 530.5h0M657.0 537.7h0M657.3 518.1h0M657.7 520.9h0M658.1 530.3h0M658.4 535.0h0M658.8 538.7h0M659.2 553.5h0M659.5 541.6h0M659.9 525.6h0M660.3 523.1h0M660.6 512.7h0M661.0 534.5h0M661.4 513.6h0M661.7 508.3h0M662.1 527.7h0M662.4 531.6h0M662.8 532.2h0M663.2 548.4h0M663.5 523.1h0M663.9 521.5h0M664.3 539.0h0M664.6 538.2h0M665.0 538.4h0M665.4 513.7h0M665.7 509.7h0M666.1 522.9h0M666.5 558.1h0M666.8 528.5h0M667.2 547.8h0M667.6 531.1h0M667.9 547.3h0M668.3 537.4h0M668.7 554.6h0M669.0 565.9h0M669.4 551.2h0M669.8 538.0h0M670.1 546.3h0M670.5 507.5h0M670.9 539.8h0M671.2 531.0h0M671.6 571.3h0M671.9 539.1h0M672.3 574.1h0M672.7 565.3h0M673.0 568.4h0M673.4 539.6h0M673.8 547.3h0M674.1 531.6h0M674.5 514.0h0M674.9 491.3h0M675.2 527.7h0M675.6 525.8h0M676.0 519.7h0M676.3 529.7h0M676.7 554.2h0M677.1 566.4h0M677.4 551.7h0M677.8 572.2h0M678.2 541.6h0M678.5 534.0h0M678.9 545.1h0M679.3 511.6h0M679.6 526.8h0M680.0 532.0h0M680.4 534.3h0M680.7 546.4h0M681.1 544.5h0M681.4 526.5h0M681.8 531.9h0M682.2 530.5h0M682.5 525.9h0M682.9 538.5h0M683.3 581.5h0M683.6 585.8h0M684.0 546.4h0M684.4 564.6h0M684.7 533.9h0M685.1 538.4h0M685.5 562.9h0M685.8 556.5h0M686.2 561.6h0M686.6 542.3h0M686.9 540.4h0M687.3 533.8h0M687.7 545.4h0M688.0 521.2h0M688.4 517.9h0M688.8 539.3h0M689.1 542.5h0M689.5 552.3h0M689.9 535.2h0M690.2 550.4h0M690.6 531.1h0M690.9 548.2h0M691.3 547.6h0M691.7 562.5h0M692.0 549.8h0M692.4 569.5h0M692.8 548.2h0M693.1 556.1h0M693.5 566.3h0M693.9 523.0h0M694.2 556.4h0M694.6 575.8h0M695.0 544.5h0M695.3 559.2h0M695.7 556.7h0M696.1 551.0h0M696.4 554.6h0M696.8 542.5h0M697.2 552.8h0M697.5 548.6h0M697.9 554.4h0M698.3 559.6h0M698.6 584.7h0M699.0 564.9h0M699.4 575.0h0M699.7 529.3h0M700.1 532.8h0M700.4 548.2h0M700.8 565.0h0M701.2 558.9h0M701.5 559.4h0M701.9 544.8h0M702.3 563.5h0M702.6 551.5h0M703.0 557.3h0M703.4 550.6h0M703.7 586.0h0M704.1 571.9h0M704.5 564.7h0M704.8 578.9h0M705.2 567.0h0M705.6 579.3h0M706.7 585.9h0M707.0 580.6h0M707.4 564.1h0M707.8 567.2h0M708.1 563.3h0M708.5 558.1h0M708.9 576.1h0M709.2 559.6h0M709.6 567.3h0M709.9 582.0h0M710.3 554.7h0M710.7 568.1h0M711.0 590.9h0M711.8 583.8h0M712.5 579.1h0M712.9 578.3h0M713.6 579.1h0M714.0 581.1h0M714.3 591.8h0M714.7 583.7h0M715.1 589.1h0M715.4 592.0h0M715.8 585.5h0M716.2 579.7h0M716.5 562.4h0M716.9 557.3h0M717.3 563.4h0M717.6 579.9h0M718.0 579.5h0M718.4 574.3h0M718.7 572.3h0M719.1 579.5h0M719.8 589.1h0M720.2 588.1h0M720.5 584.6h0M720.9 582.4h0M721.3 587.0h0M721.6 557.6h0M722.0 578.7h0M723.1 591.0h0M723.5 587.4h0M723.8 575.8h0M724.6 563.4h0M724.9 573.7h0M725.3 594.4h0M725.7 577.6h0M726.0 590.6h0M726.4 588.9h0M726.8 572.1h0M727.1 588.3h0M727.5 568.4h0M727.9 578.3h0M728.2 577.7h0M728.6 587.9h0M729.0 585.2h0M729.3 555.5h0M729.7 559.7h0M730.0 563.4h0M730.4 550.0h0M730.8 588.0h0M731.1 587.2h0M731.5 578.9h0M731.9 585.8h0M732.2 586.1h0M733.3 569.9h0M733.7 580.3h0M734.1 594.8h0M734.8 588.6h0M735.2 593.7h0M735.5 585.9h0M735.9 594.5h0M736.6 589.3h0M737.0 572.1h0M737.4 582.4h0M737.7 586.5h0M738.1 579.0h0M738.5 583.1h0M738.8 557.7h0M739.2 566.1h0M739.5 537.9h0M739.9 528.8h0M740.3 559.2h0M740.6 551.9h0M741.0 576.4h0M741.4 586.4h0M741.7 581.1h0M742.1 570.5h0M742.5 595.4h0M742.8 574.9h0M743.2 561.2h0M743.6 583.5h0M743.9 581.5h0M744.3 572.6h0M744.7 563.8h0M745.0 548.3h0M745.4 529.5h0M745.8 551.5h0M746.1 540.0h0M746.5 540.9h0M746.9 516.8h0M747.2 527.3h0M747.6 558.0h0M748.0 560.6h0M748.3 531.4h0M748.7 547.9h0M749.0 539.0h0M749.4 554.1h0M749.8 557.8h0M750.1 555.7h0M750.5 531.8h0M750.9 555.9h0M751.2 563.6h0M751.6 564.2h0M752.0 549.1h0M752.3 563.7h0M752.7 548.6h0M753.1 536.2h0M753.4 531.8h0M753.8 538.1h0M754.2 536.2h0M754.5 544.1h0M754.9 552.7h0M755.3 537.9h0M755.6 549.1h0M756.0 557.3h0M756.4 540.5h0M756.7 548.7h0M757.1 586.6h0M757.5 560.8h0M757.8 572.7h0M758.2 566.1h0M758.5 553.1h0M758.9 567.2h0M759.3 577.7h0M759.6 573.3h0M760.0 559.1h0M760.4 575.6h0M760.7 567.6h0M761.1 587.5h0M761.5 570.1h0M761.8 546.1h0M762.2 553.2h0M762.6 581.2h0M762.9 579.0h0M763.3 574.8h0M763.7 586.9h0M764.0 549.7h0M764.4 588.0h0M764.8 585.5h0M765.1 593.3h0M765.5 591.7h0M765.9 595.7h0M766.2 594.1h0M767.0 558.7h0M767.3 586.9h0M767.7 573.9h0M768.0 588.2h0M768.4 556.1h0M768.8 586.1h0M769.1 579.8h0M769.5 583.6h0M769.9 574.3h0M770.2 566.5h0M770.6 587.6h0M771.0 575.9h0M771.3 584.9h0M771.7 555.9h0M772.1 579.5h0M772.4 587.3h0M772.8 562.5h0M773.2 567.4h0M773.5 591.1h0M774.3 570.4h0M775.4 592.6h0M775.7 593.8h0M776.1 577.4h0M776.5 547.2h0M776.8 544.1h0M777.2 565.1h0M777.6 563.7h0M777.9 583.6h0M778.3 566.9h0M778.6 512.7h0M779.0 560.4h0M779.4 551.7h0M779.7 554.5h0M780.1 554.7h0M780.5 532.0h0M780.8 554.6h0M781.2 522.4h0M781.6 559.8h0M781.9 565.9h0M782.3 564.1h0M782.7 579.5h0M783.0 509.5h0M783.4 527.0h0M783.8 570.1h0M784.1 518.3h0M784.5 577.7h0M784.9 557.9h0M785.2 539.1h0M785.6 586.2h0M786.0 576.5h0M786.3 576.3h0M786.7 574.7h0M787.1 571.3h0M787.4 593.3h0M788.1 578.8h0M788.5 582.0h0M788.9 586.5h0M789.2 552.0h0M789.6 548.0h0M790.0 545.8h0M790.3 552.6h0M790.7 541.0h0M791.1 545.9h0M791.4 548.3h0M791.8 579.9h0M792.2 532.4h0M792.5 546.0h0M792.9 547.5h0M793.3 546.9h0M793.6 549.8h0M794.0 525.5h0M794.4 560.5h0M794.7 526.9h0M795.1 547.6h0M795.5 522.0h0M795.8 505.6h0M796.2 524.0h0M796.6 550.0h0M796.9 540.8h0M797.3 525.6h0M797.6 579.5h0M798.0 559.2h0M798.4 531.1h0M798.7 549.0h0M799.1 542.0h0M799.5 551.3h0M799.8 556.3h0M800.2 563.6h0M800.6 524.0h0M800.9 540.9h0M801.3 558.7h0M801.7 555.4h0M802.0 578.3h0M802.4 553.7h0M802.8 553.9h0M803.1 531.6h0M803.5 510.3h0M803.9 535.5h0M804.2 538.9h0M804.6 556.3h0M805.0 579.6h0M805.3 538.7h0M805.7 544.2h0M806.1 576.1h0M806.4 567.8h0M806.8 539.7h0M807.1 542.4h0M807.5 561.7h0M807.9 553.5h0M808.2 542.8h0M808.6 546.4h0M809.0 551.5h0M809.3 541.2h0M809.7 539.8h0M810.1 502.0h0M810.4 529.6h0M810.8 533.8h0M811.2 551.2h0M811.5 557.8h0M811.9 542.7h0M812.3 547.5h0M812.6 550.6h0M813.0 553.0h0M813.4 574.1h0M813.7 542.2h0M814.1 538.7h0M814.5 561.5h0M814.8 538.6h0M815.2 498.7h0M815.6 542.6h0M815.9 531.2h0M816.3 535.7h0M816.6 535.9h0M817.0 525.2h0M817.4 517.1h0M817.7 536.8h0M818.1 546.5h0M818.5 520.9h0M818.8 545.6h0M819.2 536.2h0M819.6 526.4h0M819.9 544.5h0M820.3 552.3h0M820.7 525.7h0M821.0 555.7h0M821.4 567.4h0M821.8 558.6h0M822.1 564.0h0M822.5 578.1h0M822.9 569.1h0M823.2 578.9h0M823.6 566.8h0M824.0 571.9h0M824.3 575.3h0M824.7 554.8h0M825.4 564.7h0M825.8 568.3h0M826.5 588.1h0M826.9 564.2h0M827.2 580.2h0M827.6 543.9h0M828.0 574.0h0M828.3 561.5h0M828.7 564.0h0M829.1 549.5h0M829.4 566.9h0M829.8 569.9h0M830.2 535.9h0M830.5 575.7h0M830.9 521.9h0M831.3 508.8h0M831.6 508.0h0M832.0 560.1h0M832.4 551.0h0M832.7 526.9h0M833.1 542.7h0M833.5 536.6h0M833.8 558.3h0M834.2 524.7h0M834.6 541.4h0M834.9 535.0h0M835.3 500.0h0M835.7 552.1h0M836.0 558.3h0M836.4 569.7h0M837.1 568.3h0M837.5 565.3h0M837.8 568.3h0M838.2 562.6h0M838.6 582.6h0M838.9 567.5h0M839.3 591.4h0M839.7 590.9h0M840.0 583.7h0M840.4 586.3h0M840.8 584.1h0M841.1 575.5h0M841.5 583.1h0M841.9 581.2h0M842.2 578.4h0M842.6 581.4h0M843.0 581.9h0M843.3 589.0h0M843.7 576.1h0M844.1 574.5h0M844.4 589.0h0M844.8 588.6h0M845.2 563.5h0M845.5 569.6h0M845.9 580.2h0M846.2 591.1h0M846.6 576.7h0M847.0 590.5h0M847.3 584.9h0M847.7 580.3h0M848.1 591.4h0M848.8 587.1h0M849.2 585.8h0M849.5 584.1h0M849.9 574.1h0M850.3 579.1h0M850.6 582.0h0M851.0 558.2h0M851.4 569.7h0M851.7 583.1h0M852.1 581.8h0M852.5 551.8h0M852.8 582.5h0M853.2 583.2h0M853.6 590.5h0M853.9 594.8h0M854.3 588.0h0M854.7 588.1h0M855.0 590.8h0M855.4 586.2h0M855.7 568.4h0M856.1 580.5h0M856.5 579.6h0M856.8 590.4h0M857.2 574.5h0M857.6 569.1h0M857.9 573.9h0M858.3 560.7h0M858.7 558.0h0M859.0 571.4h0M859.4 557.0h0M859.8 562.7h0M860.1 560.1h0M860.5 564.2h0M860.9 589.8h0M861.2 577.3h0M861.6 571.0h0M862.0 572.5h0M862.3 577.4h0M862.7 563.7h0M863.1 552.3h0M863.4 575.5h0M863.8 570.3h0M864.2 552.3h0M864.5 574.3h0M864.9 556.5h0M865.2 563.1h0M865.6 540.6h0M866.0 570.3h0M866.3 561.5h0M866.7 533.8h0M867.1 549.0h0M867.4 554.4h0M867.8 543.3h0M868.2 552.4h0M868.5 533.9h0M868.9 528.9h0M869.3 536.9h0M869.6 546.5h0M870.0 532.0h0M870.4 536.3h0M870.7 537.0h0M871.1 531.7h0M871.5 568.2h0M871.8 541.2h0M872.2 546.2h0M872.6 535.3h0M872.9 544.4h0M873.3 538.5h0M873.7 546.9h0M874.0 540.2h0M874.4 551.7h0M874.7 566.9h0M875.1 561.9h0M875.5 550.5h0M875.8 547.7h0M876.2 551.7h0M876.6 547.2h0M876.9 564.7h0M877.3 564.7h0M877.7 557.7h0M878.0 567.8h0M878.4 553.7h0M878.8 534.9h0M879.1 555.7h0M879.5 569.5h0M879.9 564.6h0M880.2 536.1h0M880.6 534.5h0M881.0 530.3h0M881.3 501.9h0M881.7 551.7h0M882.1 489.7h0M882.4 504.7h0M882.8 551.9h0M883.2 516.4h0M883.5 550.4h0M883.9 565.1h0M884.3 555.5h0M884.6 557.1h0M885.0 539.4h0M885.3 548.8h0M885.7 567.9h0M886.1 570.8h0M886.4 564.9h0M886.8 559.8h0M887.2 574.4h0M887.5 571.8h0M887.9 572.2h0M888.3 588.1h0M888.6 575.6h0M889.0 552.6h0M889.4 564.9h0M889.7 560.3h0M890.1 567.4h0M890.5 583.1h0M890.8 582.4h0M891.2 555.6h0M891.6 545.7h0M891.9 560.6h0M892.3 522.8h0M892.7 561.0h0M893.0 539.7h0M893.4 541.8h0M893.8 556.8h0M894.1 550.7h0M894.5 579.5h0M894.8 560.8h0M895.2 569.7h0M895.6 545.3h0M895.9 576.3h0M896.3 577.0h0M896.7 574.4h0M897.0 553.7h0M897.4 582.6h0M897.8 564.8h0M898.1 582.8h0M898.5 573.0h0M898.9 571.7h0M899.2 584.0h0M899.6 581.6h0M900.0 553.4h0M900.3 554.1h0M900.7 571.6h0M901.1 585.1h0M901.4 591.3h0M902.2 577.2h0M902.5 579.9h0M902.9 584.3h0M903.3 585.7h0M903.6 562.9h0M904.0 589.6h0M904.7 586.9h0M905.1 565.5h0M905.4 591.2h0M905.8 587.6h0M906.2 545.5h0M906.5 571.8h0M906.9 587.6h0M907.3 567.3h0M907.6 595.6h0M908.0 590.6h0M908.4 575.5h0M908.7 581.6h0M909.1 554.6h0M909.5 560.4h0M909.8 556.6h0M910.2 589.0h0M910.6 584.0h0M910.9 595.3h0M911.3 592.9h0M912.4 595.8h0M913.1 584.4h0M913.8 581.3h0M914.2 568.8h0M914.6 550.3h0M914.9 569.3h0M915.3 583.3h0M915.7 578.6h0M916.0 587.6h0M916.4 584.4h0M916.8 565.9h0M917.1 556.5h0M917.5 549.6h0M917.9 567.9h0M918.2 538.1h0M918.6 542.3h0M919.0 561.1h0M919.3 533.7h0M919.7 546.9h0M920.1 547.4h0M920.4 567.5h0M920.8 555.9h0M921.2 570.8h0M921.5 573.6h0M921.9 560.9h0M922.3 539.5h0M922.6 557.1h0M923.0 571.5h0M923.3 564.6h0M923.7 562.6h0M924.1 562.5h0M924.4 551.4h0M924.8 566.5h0M925.2 554.9h0M925.5 569.7h0M925.9 544.8h0M926.3 564.4h0M926.6 545.1h0M927.0 537.2h0M927.4 539.1h0M927.7 540.3h0M928.1 563.0h0M928.5 567.6h0M928.8 550.6h0M929.2 570.9h0M929.6 580.1h0M929.9 561.9h0M930.3 574.6h0M930.7 564.8h0M931.0 550.2h0M931.4 553.2h0M931.8 547.4h0M932.1 548.9h0M932.5 559.4h0M932.8 548.2h0M933.2 565.0h0M933.6 542.0h0M933.9 562.0h0M934.3 537.9h0M934.7 550.6h0M935.0 549.1h0M935.4 562.8h0M935.8 572.7h0M936.1 553.9h0M936.5 558.3h0M936.9 557.2h0M937.2 529.3h0M937.6 558.9h0M938.0 555.4h0M938.3 547.2h0M938.7 557.5h0M939.1 594.6h0M939.4 532.9h0M939.8 530.1h0M940.2 527.7h0M940.5 549.2h0M940.9 575.5h0M941.3 562.9h0M941.6 551.8h0M942.0 560.3h0M942.4 554.5h0M942.7 552.2h0M943.1 566.8h0M943.4 552.5h0M943.8 580.1h0M944.2 559.6h0M944.5 555.0h0M944.9 569.7h0M945.3 574.1h0M945.6 574.6h0M946.0 544.9h0M946.4 553.3h0M946.7 559.8h0M947.1 560.6h0M947.5 554.4h0M947.8 563.7h0M948.2 565.6h0M948.6 578.2h0M948.9 583.7h0M949.3 595.9h0M949.7 582.7h0M950.0 587.9h0M950.8 587.8h0M951.1 571.4h0M951.5 589.3h0M951.9 578.5h0M952.2 579.1h0M952.6 564.6h0M952.9 552.3h0M953.3 567.0h0M953.7 551.6h0M954.0 573.9h0M954.4 554.5h0M954.8 581.7h0M955.1 585.9h0M955.5 569.9h0M955.9 582.2h0M956.2 585.1h0M956.6 577.7h0M957.0 575.8h0M957.3 559.1h0M957.7 588.5h0M958.1 550.0h0M958.4 565.2h0M958.8 583.3h0M959.2 561.1h0M960.3 590.3h0M960.6 558.8h0M961.0 561.8h0M961.4 540.1h0M961.7 585.9h0M962.1 583.6h0M962.4 561.9h0M962.8 568.3h0M963.2 578.3h0M963.5 591.0h0M963.9 576.9h0M964.3 587.0h0M964.6 574.5h0M965.0 576.0h0M965.4 573.1h0M965.7 574.4h0M966.1 543.8h0M966.5 540.7h0M966.8 591.9h0M967.6 573.7h0M967.9 589.4h0M968.7 569.0h0M969.0 579.1h0M969.4 577.0h0M969.8 582.3h0M970.1 579.2h0M970.5 549.9h0M970.9 572.2h0M971.6 581.5h0M971.9 568.7h0M973.0 593.7h0M973.4 595.9h0M973.8 576.4h0M975.6 585.0h0M976.0 576.0h0M976.3 577.5h0M976.7 567.2h0M977.1 585.0h0M977.4 584.6h0M977.8 581.2h0M978.2 561.8h0M978.5 543.2h0M978.9 575.5h0M979.3 556.5h0M979.6 549.8h0M980.0 580.5h0M980.4 580.6h0M980.7 566.1h0M981.1 544.1h0M981.4 564.0h0M981.8 595.4h0M982.2 585.4h0M982.5 588.6h0M982.9 550.4h0M983.3 561.6h0M983.6 561.2h0M984.0 581.7h0M984.4 591.9h0M984.7 588.4h0M985.5 581.0h0M985.8 588.9h0M986.2 553.2h0M986.6 584.6h0M986.9 580.0h0M987.3 558.4h0M987.7 576.1h0M988.0 564.3h0M988.4 569.3h0M988.8 541.7h0M989.1 526.5h0M989.5 563.0h0M989.9 576.1h0M990.2 573.3h0M990.6 592.6h0M990.9 584.3h0M991.3 588.6h0M991.7 574.9h0M992.0 558.9h0M992.4 541.7h0M992.8 571.8h0M993.1 565.9h0M993.5 547.1h0M993.9 572.3h0M994.2 570.9h0M994.6 561.9h0M995.0 580.4h0M995.3 572.9h0M995.7 569.5h0M996.1 566.5h0M996.4 577.5h0M996.8 575.0h0M997.2 585.6h0M997.5 569.1h0M997.9 580.9h0M998.3 571.6h0M998.6 548.6h0M999.0 552.0h0M999.4 547.0h0M999.7 577.3h0M1000.1 569.1h0M1000.5 574.7h0M1000.8 573.4h0M1001.2 552.2h0M1001.5 572.3h0M1001.9 586.1h0M1002.3 564.3h0M1002.6 586.6h0M1003.0 560.7h0M1003.4 570.4h0M1003.7 581.3h0M1004.1 558.2h0M1004.5 563.5h0M1004.8 546.5h0M1005.2 535.0h0M1005.6 568.6h0M1005.9 550.1h0M1006.3 567.4h0M1006.7 499.0h0M1007.0 516.6h0M1007.4 526.6h0M1007.8 545.9h0M1008.1 563.2h0M1008.5 553.0h0M1008.9 566.1h0M1009.2 542.9h0M1009.6 551.4h0M1010.0 543.6h0M1010.3 543.8h0M1010.7 548.6h0M1011.0 553.8h0M1011.4 563.2h0M1011.8 574.9h0M1012.1 544.8h0M1012.5 547.8h0M1012.9 550.6h0M1013.2 552.6h0M1013.6 569.6h0M1014.0 545.7h0M1014.3 557.2h0M1014.7 548.5h0M1015.1 563.4h0M1015.4 545.5h0M1015.8 552.6h0M1016.2 566.6h0M1016.5 585.3h0M1016.9 576.7h0M1017.3 572.9h0M1017.6 587.1h0M1018.4 561.0h0M1018.7 564.3h0M1019.1 560.8h0M1019.5 537.2h0M1019.8 566.9h0M1020.2 559.1h0M1020.5 568.8h0M1020.9 551.3h0M1021.3 547.3h0M1021.6 559.2h0M1022.0 550.0h0M1022.4 568.1h0M1024.2 587.8h0M1024.6 557.4h0M1024.9 573.0h0M1025.3 558.5h0M1025.7 592.9h0M1026.4 594.4h0M1026.8 595.0h0M1027.1 574.1h0M1028.2 570.8h0M1028.6 569.0h0M1030.0 575.2h0M1030.4 592.2h0M1030.8 595.0h0M1031.1 581.2h0M1031.5 590.1h0M1033.0 579.8h0M1033.3 593.9h0M1033.7 595.7h0M1034.1 587.9h0M1035.2 596.0h0M1035.5 586.5h0M1035.9 583.0h0M1036.3 592.7h0M1036.6 583.6h0M1037.0 595.3h0M1037.7 585.1h0M1038.1 570.8h0M1038.5 580.7h0M1038.8 583.7h0M1039.2 572.1h0M1040.3 589.3h0M1040.6 595.5h0M1041.7 592.5h0M1042.5 594.3h0M1042.8 582.9h0M1043.2 589.8h0M1043.6 594.0h0M1044.3 595.3h0M1044.7 591.7h0M1045.0 593.8h0M1046.9 555.0h0M1047.2 570.9h0M1047.6 585.3h0M1048.3 585.4h0M1048.7 573.3h0M1049.1 562.3h0M1049.4 579.0h0M1049.8 576.3h0M1050.1 557.2h0M1050.5 561.1h0M1050.9 563.3h0M1051.2 573.4h0M1051.6 577.0h0M1052.0 586.1h0M1052.3 566.6h0M1052.7 591.2h0M1053.1 582.1h0M1053.4 578.0h0M1053.8 594.1h0M1054.2 580.2h0M1054.5 561.6h0M1054.9 579.3h0M1055.3 553.9h0M1055.6 563.4h0M1056.0 561.0h0M1056.4 510.0h0M1056.7 543.7h0M1057.1 521.6h0M1057.5 538.0h0M1057.8 537.5h0M1058.2 537.8h0M1058.6 543.3h0M1058.9 558.0h0M1059.3 562.7h0M1059.6 569.8h0M1060.0 593.9h0M1060.4 559.9h0M1060.7 571.2h0M1061.1 573.4h0M1061.5 575.1h0M1061.8 582.3h0M1062.2 575.0h0M1062.6 563.1h0M1062.9 556.2h0M1063.3 557.4h0M1063.7 570.2h0M1064.0 558.5h0M1064.4 546.1h0M1064.8 549.0h0M1065.1 581.2h0M1065.5 579.2h0M1065.9 557.3h0M1066.2 557.0h0M1066.6 550.7h0M1067.0 553.5h0M1067.3 557.1h0M1067.7 573.6h0M1068.1 567.8h0M1068.4 559.0h0M1068.8 569.8h0M1069.1 578.8h0M1069.5 566.2h0M1069.9 577.9h0M1070.2 563.4h0M1070.6 574.6h0M1071.0 572.9h0M1071.3 567.5h0M1071.7 570.0h0M1072.1 583.7h0M1072.4 574.3h0M1072.8 583.4h0M1073.2 573.9h0M1073.5 585.3h0M1073.9 573.6h0M1074.3 530.1h0M1074.6 569.9h0M1075.0 567.4h0M1075.4 561.3h0M1075.7 551.0h0M1076.1 543.9h0M1076.5 583.3h0M1076.8 585.6h0M1077.2 566.0h0M1077.6 576.1h0M1077.9 569.3h0M1078.3 588.1h0M1078.6 575.4h0M1079.0 543.6h0M1079.4 553.5h0M1079.7 557.1h0M1080.1 578.7h0M1080.5 533.8h0M1080.8 552.3h0M1081.2 577.4h0M1081.6 554.0h0M1081.9 577.7h0M1082.3 556.0h0M1082.7 577.8h0M1083.0 590.7h0M1083.4 567.8h0M1083.8 590.3h0M1084.1 588.9h0M1084.5 586.3h0M1084.9 595.6h0M1085.2 578.9h0M1085.6 547.4h0M1086.0 576.4h0M1086.3 571.3h0M1086.7 571.4h0M1087.1 555.9h0M1087.4 558.9h0M1087.8 548.8h0M1088.1 561.2h0M1088.5 554.1h0M1088.9 568.1h0M1089.2 578.2h0M1089.6 572.5h0M1090.0 565.9h0M1090.3 587.1h0M1090.7 585.3h0M1091.1 580.0h0M1091.4 571.4h0M1091.8 575.9h0M1092.2 595.7h0M1092.5 578.5h0M1092.9 576.2h0M1093.3 576.0h0M1093.6 558.9h0M1094.0 588.7h0M1094.4 581.1h0M1094.7 573.7h0M1095.1 588.2h0M1095.5 589.3h0M1095.8 577.5h0M1096.2 593.7h0M1096.6 581.3h0M1096.9 580.2h0M1097.3 574.1h0M1097.6 554.9h0M1098.0 561.0h0M1098.4 564.8h0M1098.7 589.2h0M1099.5 573.1h0M1100.2 569.9h0M1100.6 579.9h0M1100.9 588.4h0M1101.3 567.3h0M1101.7 592.9h0M1102.4 576.8h0M1102.8 588.7h0M1103.1 570.6h0M1103.5 593.8h0M1103.9 526.2h0M1104.2 550.1h0M1104.6 593.5h0M1105.0 590.8h0M1105.3 587.1h0M1106.1 590.2h0M1106.8 575.0h0M1107.2 552.7h0M1107.5 588.2h0M1107.9 579.0h0M1108.2 541.7h0M1108.6 553.2h0M1109.0 569.4h0M1109.3 543.9h0M1109.7 559.1h0M1110.1 560.3h0M1110.4 535.1h0M1110.8 511.2h0M1111.2 569.0h0M1111.5 549.6h0M1111.9 557.3h0M1112.3 575.0h0M1112.6 567.4h0M1113.0 550.9h0M1113.4 558.3h0M1113.7 543.3h0M1114.1 576.0h0M1114.5 563.5h0M1114.8 539.3h0M1115.2 569.7h0M1115.6 572.4h0M1115.9 551.6h0M1116.3 560.0h0M1116.7 556.1h0M1117.0 556.2h0M1117.4 562.6h0M1117.7 553.5h0M1118.1 549.2h0M1118.5 536.1h0M1118.8 536.0h0M1119.2 546.8h0M1119.6 535.7h0M1119.9 535.2h0M1120.3 542.8h0M1120.7 524.4h0M1121.0 539.1h0M1121.4 556.4h0M1121.8 571.5h0M1122.1 577.3h0M1122.5 551.0h0M1122.9 536.1h0M1123.2 549.5h0M1123.6 541.4h0M1124.0 584.5h0M1124.3 576.8h0M1124.7 547.3h0M1125.1 553.8h0M1125.4 538.0h0M1125.8 525.3h0M1126.2 555.4h0M1126.5 573.0h0M1126.9 569.7h0M1127.2 571.3h0M1127.6 593.5h0M1128.0 586.9h0M1128.3 577.6h0M1128.7 554.0h0M1129.1 521.5h0M1129.4 537.5h0M1129.8 555.2h0M1130.5 548.0h0M1130.9 572.2h0M1131.3 569.4h0M1131.6 569.6h0M1132.7 586.4h0M1133.5 588.7h0M1133.8 572.7h0M1134.2 560.1h0M1134.6 556.7h0M1134.9 578.6h0M1135.3 556.0h0M1136.0 570.9h0M1136.4 586.3h0M1136.7 578.4h0M1137.1 557.1h0M1137.5 563.5h0M1137.8 548.6h0M1138.2 537.6h0M1138.6 550.2h0M1138.9 556.1h0M1139.3 580.7h0M1140.8 587.4h0M1141.1 571.9h0M1141.5 549.9h0M1141.9 563.7h0M1142.2 537.0h0M1142.6 557.3h0M1143.0 583.2h0M1143.3 565.9h0M1143.7 566.6h0M1144.1 548.6h0M1144.4 558.7h0M1144.8 575.4h0M1145.2 591.6h0M1146.2 592.3h0M1146.6 575.8h0M1147.7 589.9h0M1148.1 584.5h0M1148.4 592.6h0M1148.8 572.7h0M1149.2 558.0h0M1149.5 584.0h0M1149.9 572.0h0M1150.3 590.6h0M1150.6 586.4h0M1151.0 579.6h0M1151.4 583.9h0M1151.7 578.2h0M1152.1 568.1h0M1152.5 571.8h0M1152.8 591.6h0M1153.6 592.2h0M1154.3 589.5h0M1155.0 581.8h0M1155.4 581.0h0M1155.7 583.8h0M1156.1 591.9h0M1156.5 574.3h0M1156.8 594.3h0M1157.2 592.0h0M1157.6 567.9h0M1157.9 589.4h0M1158.3 591.3h0M1158.7 570.1h0M1159.0 578.3h0M1159.8 581.7h0M1160.1 574.5h0M1160.5 555.3h0M1160.9 537.2h0M1161.2 569.1h0M1161.6 555.2h0M1162.0 554.8h0M1162.3 563.1h0M1162.7 591.4h0M1163.1 587.1h0M1163.4 577.3h0M1164.5 581.4h0M1164.9 575.9h0M1165.3 554.5h0M1165.6 553.4h0M1166.0 554.2h0M1166.3 558.4h0M1166.7 592.8h0M1167.1 588.2h0M1167.4 586.6h0M1167.8 587.6h0M1168.2 574.0h0M1168.5 567.3h0M1168.9 564.4h0M1169.3 569.9h0M1169.6 528.6h0M1170.0 571.2h0M1170.4 570.7h0M1170.7 576.9h0M1171.1 567.8h0M1171.5 559.4h0M1171.8 578.3h0M1172.2 577.9h0M1172.6 565.0h0M1172.9 566.2h0M1173.3 587.0h0M1174.0 591.0h0M1174.4 588.4h0M1175.5 589.0h0M1175.8 591.3h0M1176.6 587.2h0M1176.9 584.8h0M1177.3 582.4h0M1177.7 578.2h0M1178.0 575.5h0M1178.4 569.8h0M1178.8 577.9h0M1179.1 566.7h0M1179.5 566.3h0M1179.9 573.0h0M1180.2 580.4h0M1180.6 573.6h0M1181.0 573.9h0M1181.3 570.4h0M1181.7 577.0h0M1182.1 546.0h0M1182.4 554.2h0M1182.8 554.3h0M1183.2 532.8h0M1183.5 533.6h0M1183.9 557.4h0M1184.3 548.2h0M1184.6 539.0h0M1185.0 554.4h0M1185.3 559.2h0M1185.7 562.7h0M1186.1 551.6h0M1186.4 530.1h0M1186.8 567.1h0M1187.2 532.9h0M1187.5 544.2h0M1187.9 548.7h0M1188.3 572.9h0M1188.6 543.9h0M1189.0 506.4h0M1189.4 520.6h0M1189.7 514.5h0M1190.1 524.8h0M1190.5 539.3h0M1190.8 547.9h0M1191.2 540.6h0M1191.6 541.0h0M1191.9 515.7h0M1192.3 531.0h0M1192.7 532.0h0M1193.0 579.7h0M1193.4 567.5h0M1193.8 546.0h0M1194.1 545.1h0M1194.5 531.7h0M1194.8 518.1h0M1195.2 521.9h0M1195.6 508.6h0M1195.9 549.8h0M1196.3 543.0h0M1196.7 531.5h0M1197.0 515.1h0M1197.4 524.4h0M1197.8 545.6h0M1198.1 532.4h0M1198.5 546.5h0M1198.9 551.8h0M1199.2 547.7h0M1199.6 542.2h0M1200.0 555.2h0M1200.3 531.3h0M1200.7 529.6h0M1201.1 545.6h0M1201.4 568.1h0M1201.8 563.7h0M1202.2 565.5h0M1202.5 560.3h0M1202.9 564.2h0M1203.3 562.7h0M1203.6 572.2h0M1204.0 572.7h0M1204.3 539.3h0M1204.7 555.4h0M1205.1 567.8h0M1205.4 572.5h0M1205.8 550.4h0M1206.2 586.2h0M1206.5 578.9h0M1206.9 571.9h0M1207.3 584.8h0M1207.6 584.6h0M1208.0 577.1h0M1208.4 585.1h0M1208.7 568.3h0M1209.1 556.0h0M1209.5 544.1h0M1209.8 572.4h0M1210.2 548.0h0M1210.6 581.9h0M1210.9 559.1h0M1211.3 578.6h0M1211.7 577.1h0M1212.0 570.2h0M1212.4 586.1h0M1213.1 593.8h0M1213.5 590.9h0M1213.8 590.2h0M1214.6 583.5h0M1214.9 591.9h0M1215.3 588.4h0M1215.7 587.3h0M1216.0 587.5h0M1216.4 590.9h0M1216.8 594.1h0M1217.1 586.2h0M1217.5 584.1h0M1217.9 587.6h0M1218.2 564.6h0M1219.0 569.4h0M1219.3 580.1h0M1219.7 588.1h0M1220.1 580.2h0M1220.8 582.2h0M1223.0 590.1h0M1223.4 593.0h0M1223.7 588.5h0M1224.1 573.8h0M1224.4 586.9h0M1224.8 590.7h0M1225.2 572.7h0M1225.9 576.2h0M1227.0 584.8h0M1227.4 583.5h0M1227.7 578.7h0M1228.1 579.2h0M1228.5 593.8h0M1228.8 591.1h0M1229.6 591.0h0M1230.3 583.9h0M1231.4 586.5h0M1231.8 586.9h0M1235.8 587.3h0M1236.1 585.3h0M1236.5 594.7h0M1237.2 591.2h0M1237.6 593.3h0M1238.0 586.2h0M1238.3 581.0h0M1238.7 576.1h0M1239.1 570.1h0M1239.4 556.1h0M1239.8 561.9h0M1240.2 563.9h0M1240.5 566.5h0M1240.9 561.5h0M1241.3 569.4h0M1241.6 572.2h0M1242.0 550.2h0M1242.4 544.5h0M1242.7 545.2h0M1243.1 547.2h0M1243.4 562.8h0M1243.8 552.4h0M1244.2 588.1h0M1244.5 572.3h0M1244.9 562.9h0M1245.3 560.0h0M1245.6 550.0h0M1246.0 567.8h0M1246.4 582.1h0M1246.7 549.4h0M1247.1 568.4h0M1247.5 554.3h0M1247.8 569.4h0M1248.2 583.8h0M1248.6 538.7h0M1248.9 547.1h0M1249.3 569.4h0M1249.7 543.7h0M1250.0 532.7h0M1250.4 540.7h0M1250.8 551.7h0M1251.1 528.2h0M1251.5 518.0h0M1251.9 521.8h0M1252.2 531.6h0M1252.6 537.9h0M1252.9 535.8h0M1253.3 552.6h0M1253.7 543.5h0M1254.0 541.2h0M1254.4 530.3h0M1254.8 524.3h0M1255.1 529.7h0M1255.5 531.6h0M1255.9 520.2h0M1256.2 537.9h0M1256.6 518.6h0M1257.0 525.5h0M1257.3 563.6h0M1257.7 536.2h0M1258.1 532.6h0M1258.4 536.6h0M1258.8 564.6h0M1259.2 551.4h0M1259.5 533.0h0M1259.9 544.0h0M1260.3 538.0h0M1260.6 537.7h0M1261.0 536.9h0M1261.4 546.8h0M1261.7 551.3h0M1262.1 557.3h0M1262.4 556.0h0M1262.8 560.4h0M1263.2 560.3h0M1263.5 570.9h0M1263.9 550.6h0M1264.3 533.5h0M1264.6 537.5h0M1265.0 534.9h0M1265.4 543.9h0M1265.7 531.2h0M1266.1 542.3h0M1266.5 547.9h0M1266.8 556.4h0M1267.2 532.0h0M1267.6 565.4h0M1267.9 586.3h0M1268.3 565.9h0M1268.7 573.8h0M1269.0 578.0h0M1269.4 572.2h0M1269.8 581.5h0M1270.1 554.8h0M1270.5 557.5h0M1270.9 557.0h0M1271.2 565.4h0M1271.6 559.9h0M1272.0 563.0h0M1272.3 571.0h0M1272.7 559.4h0M1273.0 552.6h0M1273.4 568.4h0M1273.8 552.7h0M1274.1 558.8h0M1274.5 569.0h0M1274.9 569.8h0M1275.2 555.9h0M1275.6 571.4h0M1276.0 563.2h0M1276.3 564.9h0M1276.7 566.4h0M1277.1 576.1h0M1277.4 573.5h0M1277.8 559.2h0M1278.2 565.4h0M1278.5 584.7h0M1278.9 563.1h0M1279.3 570.6h0M1279.6 576.9h0M1280.0 560.9h0M1280.4 557.4h0M1280.7 576.0h0M1281.1 556.3h0M1281.8 584.1h0M1282.2 584.1h0M1282.5 582.8h0M1283.3 591.7h0M1284.0 590.7h0M1284.4 582.7h0M1284.7 590.6h0M1285.5 589.8h0M1285.8 585.7h0M1286.6 579.5h0M1286.9 577.7h0M1287.3 566.4h0M1287.7 571.3h0M1288.0 576.0h0M1288.4 582.3h0M1289.1 588.2h0M1289.5 594.5h0M1290.6 594.4h0M1291.0 585.9h0M1291.3 548.2h0M1291.7 550.0h0M1292.0 568.0h0M1292.4 586.5h0M1292.8 564.8h0M1293.1 594.6h0M1293.5 572.8h0M1293.9 587.6h0M1294.2 546.2h0M1294.6 566.1h0M1295.0 562.6h0M1295.3 575.6h0M1295.7 565.1h0M1296.1 552.8h0M1296.4 568.1h0M1296.8 581.7h0M1297.2 587.9h0M1297.5 595.1h0M1297.9 587.4h0M1298.3 584.1h0M1298.6 549.6h0M1299.0 530.3h0M1299.4 567.7h0M1299.7 575.6h0M1300.1 564.9h0M1300.5 554.6h0M1300.8 576.5h0M1301.2 565.0h0M1301.5 552.3h0M1301.9 581.6h0M1302.3 588.0h0M1302.6 580.8h0M1303.0 578.5h0M546.4 475.3h0M884.5 491.5h0M402.4 484.4h0" stroke="#000" stroke-width="3.6" stroke-linecap="round"/>
<path d="M165.1 578.9h0M165.9 588.7h0M174.6 582.9h0M175.7 586.9h0M176.1 577.3h0M178.3 588.3h0M179.0 589.2h0M180.1 585.2h0M180.5 582.0h0M181.6 589.4h0M182.3 581.8h0M183.4 588.8h0M184.1 582.3h0M184.9 583.4h0M186.7 584.2h0M191.1 584.3h0M191.4 578.9h0M233.8 589.2h0M234.9 584.1h0M236.0 582.9h0M236.4 577.8h0M236.7 598.6h0M237.1 601.1h0M247.7 592.7h0M248.4 581.6h0M248.8 583.4h0M249.2 581.1h0M251.7 582.6h0M257.9 581.6h0M287.2 582.7h0M294.1 577.6h0M299.2 579.8h0M306.9 577.8h0M312.0 576.5h0M312.4 577.0h0M312.7 584.9h0M314.2 581.9h0M314.9 584.0h0M366.5 590.7h0M374.5 580.2h0M374.9 581.6h0M379.6 576.7h0M389.1 580.6h0M420.2 578.2h0M420.5 579.1h0M420.9 577.1h0M421.3 594.4h0M424.2 578.2h0M427.1 586.4h0M427.5 585.8h0M434.1 580.3h0M434.4 584.9h0M434.8 587.7h0M435.2 590.6h0M435.5 583.3h0M435.9 587.5h0M436.3 585.4h0M439.2 578.2h0M439.5 582.5h0M439.9 587.2h0M440.3 578.6h0M440.6 590.9h0M442.1 577.3h0M442.5 592.0h0M442.8 581.2h0M443.2 590.5h0M444.3 593.7h0M446.5 608.9h0M476.8 597.1h0M482.7 588.2h0M483.0 588.8h0M483.8 581.3h0M484.1 580.8h0M491.4 587.6h0M491.8 603.0h0M492.2 589.2h0M492.5 581.7h0M499.5 583.1h0M502.0 578.2h0M505.0 586.0h0M505.7 577.8h0M506.8 583.5h0M513.4 586.2h0M546.6 584.9h0M553.2 587.0h0M563.4 593.6h0M564.5 585.5h0M564.9 593.9h0M612.4 586.7h0M612.8 585.2h0M613.1 596.0h0M613.5 593.6h0M616.8 591.7h0M617.9 585.2h0M620.4 580.3h0M621.5 582.0h0M623.7 576.8h0M626.6 580.7h0M627.0 578.6h0M627.4 579.9h0M629.2 577.2h0M705.9 608.3h0M706.3 601.7h0M711.4 596.1h0M712.1 600.4h0M713.2 600.0h0M719.5 597.1h0M722.4 607.8h0M722.7 603.8h0M724.2 599.3h0M732.6 604.3h0M733.0 604.0h0M734.4 602.9h0M736.3 597.1h0M766.6 599.4h0M773.9 596.6h0M774.6 599.4h0M775.0 600.5h0M787.8 597.7h0M825.1 596.8h0M826.1 607.4h0M836.7 598.7h0M848.4 598.1h0M901.8 598.6h0M904.3 597.0h0M911.7 597.8h0M912.0 598.2h0M912.8 601.1h0M913.5 600.7h0M950.4 603.2h0M959.5 601.1h0M959.9 598.7h0M967.2 610.9h0M968.3 598.9h0M971.2 597.1h0M972.3 598.3h0M972.7 598.4h0M974.1 601.6h0M974.5 610.1h0M974.9 611.7h0M975.2 607.6h0M985.1 601.0h0M1018.0 597.8h0M1022.7 600.6h0M1023.1 607.3h0M1023.5 597.9h0M1023.8 597.5h0M1026.0 598.2h0M1027.5 600.0h0M1027.9 600.5h0M1029.0 596.1h0M1029.3 604.3h0M1029.7 610.5h0M1031.9 604.2h0M1032.2 598.4h0M1032.6 600.2h0M1034.4 597.3h0M1034.8 609.2h0M1037.4 601.7h0M1039.5 598.5h0M1039.9 596.9h0M1041.0 606.2h0M1041.4 600.3h0M1042.1 603.1h0M1043.9 600.2h0M1045.4 612.4h0M1045.8 605.5h0M1046.1 599.0h0M1046.5 601.6h0M1048.0 598.4h0M1099.1 608.0h0M1099.8 600.4h0M1102.0 599.8h0M1105.7 614.7h0M1106.4 598.1h0M1130.2 597.1h0M1132.0 599.2h0M1132.4 601.0h0M1133.1 615.1h0M1135.7 596.5h0M1139.7 640.8h0M1140.0 621.7h0M1140.4 624.8h0M1145.5 612.4h0M1145.9 609.7h0M1147.0 604.7h0M1147.3 607.6h0M1153.2 601.6h0M1153.9 622.6h0M1154.7 599.0h0M1159.4 601.1h0M1163.8 607.7h0M1164.2 597.0h0M1173.7 602.1h0M1174.8 613.4h0M1175.1 597.1h0M1176.2 599.9h0M1212.8 603.2h0M1214.2 604.6h0M1218.6 598.8h0M1220.4 601.5h0M1221.2 596.4h0M1221.5 619.6h0M1221.9 602.7h0M1222.3 607.4h0M1222.6 602.5h0M1225.5 599.9h0M1226.3 596.3h0M1226.6 597.1h0M1229.2 602.7h0M1229.9 596.6h0M1230.7 604.2h0M1231.0 598.7h0M1232.1 598.5h0M1232.5 598.8h0M1232.9 614.7h0M1233.2 612.1h0M1233.6 596.6h0M1233.9 597.0h0M1234.3 597.3h0M1234.7 599.3h0M1235.0 599.5h0M1235.4 601.4h0M1236.9 597.2h0M1281.5 598.5h0M1282.9 599.3h0M1283.6 600.8h0M1285.1 608.3h0M1286.2 599.0h0M1288.8 601.3h0M1289.9 619.9h0M1290.2 611.5h0M184.4 659.9h0M208.4 642.6h0M614.0 635.6h0M659.2 610.3h0M1055.2 454.6h0M1039.4 642.8h0M707.2 618.5h0M1040.4 621.5h0M1013.5 616.5h0M1097.5 629.3h0M1138.0 625.0h0M1285.5 619.0h0" stroke="#ffa500" stroke-width="3.6" stroke-linecap="round"/>
<path d="M637.6 660.6H643.2L640.4 666.2Z" fill="#ffa500"/>
<path d="M868.4 660.6H874.0L871.2 666.2Z" fill="#ffa500"/>
<path d="M1073.4 660.6H1079.0L1076.2 666.2Z" fill="#ffa500"/>
<path d="M1215.4 660.6H1221.0L1218.2 666.2Z" fill="#ffa500"/>
<rect x="105.5" y="498.9" width="1255.5" height="48.9" fill="#ff0000" fill-opacity="0.12"/>
<rect x="162.20" y="490.1" width="509.75" height="44.8" fill="#ffa500" fill-opacity="0.12"/>
<rect x="671.95" y="509.9" width="631.85" height="45.9" fill="#ffa500" fill-opacity="0.12"/>
<path d="M162.20 512.5H671.95M671.95 532.5H1303.01" stroke="#ffa500" stroke-width="2.78" stroke-linecap="square"/>
<path d="M105.5 523H1360" stroke="#ff0000" stroke-width="2.08" stroke-linecap="square"/>
<path d="M162.00 666.5V380.5M672.00 666.5V380.5M1303.00 666.5V380.5" stroke="#800080" stroke-width="2.08" stroke-dasharray="2.08 3.44"/>
</g>
<path d="M105.5 380.5H1485.5V666.5H105.5Z" fill="none" stroke="#000" stroke-width="1.11" stroke-linejoin="miter"/>
<path d="M162.50 666.5v4.86M345.50 666.5v4.86M528.50 666.5v4.86M710.50 666.5v4.86M893.50 666.5v4.86M1076.50 666.5v4.86M1258.50 666.5v4.86M1441.50 666.5v4.86" stroke="#000" stroke-width="1.11"/>
<text x="162.20" y="687.20" font-size="14.72" text-anchor="middle" textLength="8.84" lengthAdjust="spacingAndGlyphs" fill="#000">0</text>
<text x="344.90" y="687.20" font-size="14.72" text-anchor="middle" textLength="26.51" lengthAdjust="spacingAndGlyphs" fill="#000">500</text>
<text x="527.61" y="687.20" font-size="14.72" text-anchor="middle" textLength="35.35" lengthAdjust="spacingAndGlyphs" fill="#000">1000</text>
<text x="710.32" y="687.20" font-size="14.72" text-anchor="middle" textLength="35.35" lengthAdjust="spacingAndGlyphs" fill="#000">1500</text>
<text x="893.02" y="687.20" font-size="14.72" text-anchor="middle" textLength="35.35" lengthAdjust="spacingAndGlyphs" fill="#000">2000</text>
<text x="1075.72" y="687.20" font-size="14.72" text-anchor="middle" textLength="35.35" lengthAdjust="spacingAndGlyphs" fill="#000">2500</text>
<text x="1258.43" y="687.20" font-size="14.72" text-anchor="middle" textLength="35.35" lengthAdjust="spacingAndGlyphs" fill="#000">3000</text>
<text x="1441.13" y="687.20" font-size="14.72" text-anchor="middle" textLength="35.35" lengthAdjust="spacingAndGlyphs" fill="#000">3500</text>
<path d="M100.64 408.50H105.5M100.64 452.50H105.5M100.64 495.50H105.5M100.64 539.50H105.5M100.64 583.50H105.5M100.64 626.50H105.5" stroke="#000" stroke-width="1.11"/>
<text x="95.60" y="413.60" font-size="14.72" text-anchor="end" textLength="30.92" lengthAdjust="spacingAndGlyphs" fill="#000">8.54</text>
<text x="95.60" y="457.60" font-size="14.72" text-anchor="end" textLength="30.92" lengthAdjust="spacingAndGlyphs" fill="#000">8.52</text>
<text x="95.60" y="500.60" font-size="14.72" text-anchor="end" textLength="30.92" lengthAdjust="spacingAndGlyphs" fill="#000">8.50</text>
<text x="95.60" y="544.60" font-size="14.72" text-anchor="end" textLength="30.92" lengthAdjust="spacingAndGlyphs" fill="#000">8.48</text>
<text x="95.60" y="588.60" font-size="14.72" text-anchor="end" textLength="30.92" lengthAdjust="spacingAndGlyphs" fill="#000">8.46</text>
<text x="95.60" y="631.60" font-size="14.72" text-anchor="end" textLength="30.92" lengthAdjust="spacingAndGlyphs" fill="#000">8.44</text>
<text x="795.00" y="372.00" font-size="16.33" text-anchor="middle" textLength="175.90" lengthAdjust="spacingAndGlyphs" fill="#000">Magnitude Estimates</text>
<text x="416.60" y="656.80" font-size="14.72" text-anchor="middle" textLength="44.18" lengthAdjust="spacingAndGlyphs" fill="#000">45130</text>
<text x="987.50" y="636.90" font-size="14.72" text-anchor="middle" textLength="44.18" lengthAdjust="spacingAndGlyphs" fill="#000">45128</text>
<rect x="1365.4" y="387.5" width="113.30" height="48.00" rx="2.8" fill="#fff" fill-opacity="0.8" stroke="#cccccc" stroke-width="1.1"/>
<path d="M1369 399.4H1400" stroke="#ffa500" stroke-width="2.78"/>
<path d="M1369 421.8H1399" stroke="#ff0000" stroke-width="2.08"/>
<text x="1410.40" y="403.70" font-size="14.72" text-anchor="start" textLength="30.86" lengthAdjust="spacingAndGlyphs" fill="#000">mag</text>
<text x="1440.80" y="405.40" font-size="10.30" text-anchor="start" textLength="30.84" lengthAdjust="spacingAndGlyphs" font-style="italic" fill="#000">OBSID</text>
<text x="1409.30" y="426.40" font-size="14.72" text-anchor="start" textLength="30.86" lengthAdjust="spacingAndGlyphs" fill="#000">mag</text>
<rect x="1348.3" y="613.3" width="130.40" height="45.90" rx="2.8" fill="#fff" fill-opacity="0.8" stroke="#cccccc" stroke-width="1.1"/>
<path d="M1367.5 626.5h0" stroke="#ffa500" stroke-width="3" stroke-linecap="round"/>
<path d="M1367.5 647.5h0" stroke="#000" stroke-width="3" stroke-linecap="round"/>
<text x="1392.80" y="629.30" font-size="14.72" text-anchor="start" textLength="80.07" lengthAdjust="spacingAndGlyphs" fill="#000">Highlighted</text>
<text x="1392.80" y="650.70" font-size="14.72" text-anchor="start" textLength="20.04" lengthAdjust="spacingAndGlyphs" fill="#000">OK</text>
<path d="M105.5 763.5H1485.5M105.5 802.5H1485.5M105.5 840.5H1485.5M105.5 878.5H1485.5M105.5 916.5H1485.5" stroke="#b0b0b0" stroke-width="1.11" stroke-dasharray="1.11 1.83"/>
<path d="M402.2 840.5h0M454.7 840.5h0M630.3 840.5h0M726.9 840.5h0M872.3 840.5h0M908.3 840.5h0M952.9 840.5h0M1050.4 840.5h0M1055.4 840.5h0M1149.2 840.5h0M1197.1 840.5h0" stroke="#000" stroke-width="2.6" stroke-linecap="round"/>
<path d="M402.2 878.5h0M454.7 878.5h0M630.3 878.5h0M726.9 878.5h0M872.3 878.5h0M908.3 878.5h0M952.9 878.5h0M1050.4 878.5h0M1055.4 878.5h0M1149.2 878.5h0M1197.1 878.5h0" stroke="#000" stroke-width="2.6" stroke-linecap="round"/>
<path d="M162.00 954.5V725.5M672.00 954.5V725.5M1303.00 954.5V725.5" stroke="#800080" stroke-width="2.08" stroke-dasharray="2.08 3.44"/>
<path d="M105.5 725.5H1485.5V954.5H105.5Z" fill="none" stroke="#000" stroke-width="1.11" stroke-linejoin="miter"/>
<path d="M100.64 763.50H105.5M100.64 802.50H105.5M100.64 840.50H105.5M100.64 878.50H105.5M100.64 916.50H105.5" stroke="#000" stroke-width="1.11"/>
<text x="95.60" y="768.60" font-size="14.72" text-anchor="end" textLength="79.24" lengthAdjust="spacingAndGlyphs" fill="#000">not Kalman</text>
<text x="95.60" y="807.60" font-size="14.72" text-anchor="end" textLength="62.51" lengthAdjust="spacingAndGlyphs" fill="#000">not track</text>
<text x="95.60" y="845.60" font-size="14.72" text-anchor="end" textLength="57.68" lengthAdjust="spacingAndGlyphs" fill="#000">Ion. rad.</text>
<text x="95.60" y="883.60" font-size="14.72" text-anchor="end" textLength="43.83" lengthAdjust="spacingAndGlyphs" fill="#000">dr &gt; 5</text>
<text x="95.60" y="921.60" font-size="14.72" text-anchor="end" textLength="80.65" lengthAdjust="spacingAndGlyphs" fill="#000">OBS not OK</text>
<g clip-path="url(#c4)">
<path d="M105.5 1009.5H1485.5M105.5 983.5H1485.5M105.5 957.5H1485.5" stroke="#b0b0b0" stroke-width="1.11" stroke-dasharray="1.11 1.83"/>
<path d="M162.2 1005.6h0M162.6 1005.0h0M162.9 1005.5h0M163.3 1006.3h0M163.7 1006.2h0M164.0 1006.7h0M164.4 1005.6h0M164.8 1006.8h0M165.1 1006.9h0M165.5 1006.3h0M165.9 1006.3h0M166.2 1006.0h0M166.6 1005.6h0M167.0 1004.5h0M167.3 1004.8h0M167.7 1005.2h0M168.0 1004.5h0M168.4 1005.1h0M168.8 1004.7h0M169.1 1005.3h0M169.5 1005.7h0M169.9 1006.1h0M170.2 1006.3h0M170.6 1007.3h0M171.0 1006.6h0M171.3 1007.5h0M171.7 1006.7h0M172.1 1005.3h0M172.4 1004.8h0M172.8 1005.0h0M173.2 1005.4h0M173.5 1005.1h0M173.9 1004.8h0M174.3 1004.4h0M174.6 1005.0h0M175.0 1004.4h0M175.4 1005.3h0M175.7 1005.0h0M176.1 1005.9h0M176.5 1006.6h0M176.8 1006.3h0M177.2 1006.4h0M177.5 1006.4h0M177.9 1006.0h0M178.3 1006.1h0M178.6 1005.5h0M179.0 1006.7h0M179.4 1006.3h0M179.7 1005.9h0M180.1 1006.7h0M180.5 1007.3h0M180.8 1006.8h0M181.2 1007.3h0M181.6 1007.3h0M181.9 1007.1h0M182.3 1006.9h0M182.7 1006.8h0M183.0 1007.1h0M183.4 1007.1h0M183.8 1006.4h0M184.1 1006.1h0M184.5 1007.2h0M184.9 1006.9h0M185.2 1006.9h0M185.6 1007.1h0M186.0 1006.3h0M186.3 1007.1h0M186.7 1006.0h0M187.0 1006.5h0M187.4 1006.0h0M187.8 1005.7h0M188.1 1006.6h0M188.5 1006.5h0M188.9 1005.9h0M189.2 1005.7h0M189.6 1005.4h0M190.0 1005.9h0M190.3 1005.6h0M190.7 1005.5h0M191.1 1005.3h0M191.4 1005.9h0M191.8 1006.1h0M192.2 1006.1h0M192.5 1005.4h0M192.9 1006.1h0M193.3 1006.5h0M193.6 1006.1h0M194.0 1006.6h0M194.4 1006.7h0M194.7 1007.1h0M195.1 1007.7h0M195.5 1007.4h0M195.8 1007.4h0M196.2 1006.5h0M196.5 1005.4h0M196.9 1006.1h0M197.3 1005.3h0M197.6 1005.1h0M198.0 1005.1h0M198.4 1005.5h0M198.7 1005.0h0M199.1 1005.3h0M199.5 1005.1h0M199.8 1005.4h0M200.2 1005.2h0M200.6 1005.7h0M200.9 1005.3h0M201.3 1004.6h0M201.7 1005.2h0M202.0 1005.8h0M202.4 1006.0h0M202.8 1006.5h0M203.1 1006.6h0M203.5 1005.9h0M203.9 1005.0h0M204.2 1005.0h0M204.6 1005.6h0M205.0 1005.4h0M205.3 1006.3h0M205.7 1006.4h0M206.0 1006.2h0M206.4 1005.8h0M206.8 1005.9h0M207.1 1007.2h0M207.5 1006.4h0M207.9 1006.6h0M208.2 1006.6h0M208.6 1006.3h0M209.0 1006.6h0M209.3 1007.4h0M209.7 1007.0h0M210.1 1007.2h0M210.4 1007.4h0M210.8 1008.0h0M211.2 1008.0h0M211.5 1008.3h0M211.9 1007.7h0M212.3 1007.7h0M212.6 1007.0h0M213.0 1007.3h0M213.4 1007.3h0M213.7 1008.2h0M214.1 1008.5h0M214.5 1008.1h0M214.8 1006.4h0M215.2 1007.2h0M215.5 1007.2h0M215.9 1007.1h0M216.3 1006.8h0M216.6 1007.0h0M217.0 1006.8h0M217.4 1007.6h0M217.7 1007.7h0M218.1 1007.2h0M218.5 1006.5h0M218.8 1006.3h0M219.2 1006.5h0M219.6 1006.2h0M219.9 1005.3h0M220.3 1005.7h0M220.7 1005.8h0M221.0 1005.5h0M221.4 1005.1h0M221.8 1005.4h0M222.1 1006.5h0M222.5 1006.1h0M222.9 1005.7h0M223.2 1005.4h0M223.6 1005.1h0M224.0 1005.7h0M224.3 1005.9h0M224.7 1006.3h0M225.1 1006.9h0M225.4 1007.0h0M225.8 1007.3h0M226.1 1006.6h0M226.5 1007.2h0M226.9 1007.0h0M227.2 1007.5h0M227.6 1006.7h0M228.0 1006.2h0M228.3 1006.4h0M228.7 1006.1h0M229.1 1006.0h0M229.4 1006.3h0M229.8 1005.1h0M230.2 1005.4h0M230.5 1004.1h0M230.9 1004.0h0M231.3 1003.6h0M231.6 1003.8h0M232.0 1004.5h0M232.4 1004.0h0M232.7 1004.1h0M233.1 1004.1h0M233.5 1004.3h0M233.8 1004.3h0M234.2 1005.0h0M234.6 1004.9h0M234.9 1004.4h0M235.3 1004.6h0M235.6 1004.5h0M236.0 1003.7h0M236.4 1004.6h0M236.7 1004.7h0M237.1 1005.4h0M237.5 1004.6h0M237.8 1004.5h0M238.2 1005.1h0M238.6 1005.8h0M238.9 1005.7h0M239.3 1005.5h0M239.7 1005.8h0M240.0 1005.7h0M240.4 1005.5h0M240.8 1006.2h0M241.1 1005.9h0M241.5 1005.8h0M241.9 1006.5h0M242.2 1006.5h0M242.6 1006.4h0M243.0 1006.1h0M243.3 1006.5h0M243.7 1006.3h0M244.1 1006.1h0M244.4 1006.5h0M244.8 1007.1h0M245.1 1006.5h0M245.5 1006.0h0M245.9 1005.1h0M246.2 1005.4h0M246.6 1005.4h0M247.0 1005.1h0M247.3 1005.1h0M247.7 1004.9h0M248.1 1004.6h0M248.4 1003.7h0M248.8 1004.2h0M249.2 1004.4h0M249.5 1004.6h0M249.9 1004.9h0M250.3 1003.9h0M250.6 1003.6h0M251.0 1004.7h0M251.4 1004.9h0M251.7 1004.6h0M252.1 1005.2h0M252.5 1004.9h0M252.8 1005.1h0M253.2 1005.0h0M253.6 1004.9h0M253.9 1004.2h0M254.3 1004.0h0M254.6 1004.5h0M255.0 1004.0h0M255.4 1004.2h0M255.7 1004.8h0M256.1 1005.3h0M256.5 1004.6h0M256.8 1004.9h0M257.2 1004.4h0M257.6 1004.3h0M257.9 1004.7h0M258.3 1005.3h0M258.7 1005.7h0M259.0 1005.4h0M259.4 1005.6h0M259.8 1004.8h0M260.1 1005.1h0M260.5 1005.4h0M260.9 1005.7h0M261.2 1005.4h0M261.6 1005.5h0M262.0 1005.3h0M262.3 1004.6h0M262.7 1005.0h0M263.1 1004.3h0M263.4 1005.8h0M263.8 1005.6h0M264.1 1006.5h0M264.5 1006.7h0M264.9 1006.5h0M265.2 1006.5h0M265.6 1006.1h0M266.0 1006.1h0M266.3 1006.2h0M266.7 1006.4h0M267.1 1007.2h0M267.4 1007.1h0M267.8 1006.1h0M268.2 1006.4h0M268.5 1006.0h0M268.9 1006.5h0M269.3 1005.8h0M269.6 1005.7h0M270.0 1005.7h0M270.4 1006.5h0M270.7 1006.6h0M271.1 1006.1h0M271.5 1006.1h0M271.8 1005.9h0M272.2 1006.0h0M272.6 1007.1h0M272.9 1006.7h0M273.3 1006.4h0M273.7 1006.7h0M274.0 1006.7h0M274.4 1006.7h0M274.7 1006.6h0M275.1 1006.7h0M275.5 1006.5h0M275.8 1007.7h0M276.2 1007.4h0M276.6 1007.8h0M276.9 1008.1h0M277.3 1007.9h0M277.7 1007.8h0M278.0 1007.5h0M278.4 1006.6h0M278.8 1006.3h0M279.1 1007.6h0M279.5 1007.7h0M279.9 1006.9h0M280.2 1006.8h0M280.6 1007.2h0M281.0 1007.1h0M281.3 1006.8h0M281.7 1006.5h0M282.1 1006.0h0M282.4 1006.5h0M282.8 1006.9h0M283.2 1006.8h0M283.5 1006.6h0M283.9 1007.7h0M284.2 1007.6h0M284.6 1008.2h0M285.0 1007.4h0M285.3 1006.3h0M285.7 1005.6h0M286.1 1005.4h0M286.4 1005.6h0M286.8 1005.0h0M287.2 1004.8h0M287.5 1004.9h0M287.9 1005.1h0M288.3 1005.6h0M288.6 1005.8h0M289.0 1004.6h0M289.4 1004.9h0M289.7 1003.9h0M290.1 1002.7h0M290.5 1003.1h0M290.8 1003.8h0M291.2 1004.2h0M291.6 1004.1h0M291.9 1004.6h0M292.3 1005.0h0M292.7 1004.4h0M293.0 1004.1h0M293.4 1004.0h0M293.7 1004.0h0M294.1 1004.3h0M294.5 1004.3h0M294.8 1003.8h0M295.2 1004.4h0M295.6 1004.1h0M295.9 1004.7h0M296.3 1004.6h0M296.7 1003.8h0M297.0 1004.0h0M297.4 1004.5h0M297.8 1004.1h0M298.1 1004.1h0M298.5 1005.6h0M298.9 1005.9h0M299.2 1005.6h0M299.6 1005.3h0M300.0 1004.8h0M300.3 1004.8h0M300.7 1004.4h0M301.1 1005.6h0M301.4 1006.0h0M301.8 1006.2h0M302.2 1005.5h0M302.5 1005.8h0M302.9 1006.3h0M303.2 1006.4h0M303.6 1007.0h0M304.0 1007.8h0M304.3 1007.7h0M304.7 1007.5h0M305.1 1007.5h0M305.4 1008.6h0M305.8 1008.3h0M306.2 1008.8h0M306.5 1008.2h0M306.9 1008.0h0M307.3 1007.9h0M307.6 1007.2h0M308.0 1007.6h0M308.4 1007.0h0M308.7 1006.3h0M309.1 1005.8h0M309.5 1005.5h0M309.8 1005.5h0M310.2 1005.5h0M310.6 1005.2h0M310.9 1005.5h0M311.3 1005.6h0M311.7 1006.1h0M312.0 1006.4h0M312.4 1006.0h0M312.7 1005.8h0M313.1 1005.6h0M313.5 1005.7h0M313.8 1006.3h0M314.2 1005.9h0M314.6 1005.4h0M314.9 1005.1h0M315.3 1005.3h0M315.7 1005.3h0M316.0 1005.8h0M316.4 1005.9h0M316.8 1006.3h0M317.1 1007.3h0M317.5 1006.4h0M317.9 1006.8h0M318.2 1006.0h0M318.6 1006.3h0M319.0 1006.5h0M319.3 1006.8h0M319.7 1006.6h0M320.1 1007.4h0M320.4 1007.2h0M320.8 1007.1h0M321.2 1006.9h0M321.5 1006.5h0M321.9 1005.8h0M322.2 1006.1h0M322.6 1006.1h0M323.0 1005.6h0M323.3 1005.8h0M323.7 1004.4h0M324.1 1005.5h0M324.4 1005.7h0M324.8 1006.8h0M325.2 1006.8h0M325.5 1007.1h0M325.9 1005.0h0M326.3 1005.1h0M326.6 1004.0h0M327.0 1003.8h0M327.4 1004.0h0M327.7 1004.0h0M328.1 1003.3h0M328.5 1003.2h0M328.8 1003.4h0M329.2 1003.2h0M329.6 1004.3h0M329.9 1004.4h0M330.3 1004.6h0M330.7 1004.2h0M331.0 1004.5h0M331.4 1005.5h0M331.8 1005.3h0M332.1 1005.3h0M332.5 1004.8h0M332.8 1005.1h0M333.2 1004.9h0M333.6 1005.8h0M333.9 1006.1h0M334.3 1006.2h0M334.7 1006.6h0M335.0 1007.0h0M335.4 1007.1h0M335.8 1006.8h0M336.1 1006.6h0M336.5 1007.0h0M336.9 1006.9h0M337.2 1007.3h0M337.6 1007.1h0M338.0 1005.9h0M338.3 1006.8h0M338.7 1006.7h0M339.1 1007.1h0M339.4 1006.2h0M339.8 1006.4h0M340.2 1007.3h0M340.5 1006.6h0M340.9 1007.3h0M341.3 1007.2h0M341.6 1007.7h0M342.0 1008.0h0M342.3 1008.2h0M342.7 1007.6h0M343.1 1006.9h0M343.4 1007.2h0M343.8 1006.7h0M344.2 1006.9h0M344.5 1007.0h0M344.9 1007.0h0M345.3 1006.2h0M345.6 1006.6h0M346.0 1006.6h0M346.4 1006.4h0M346.7 1006.6h0M347.1 1006.7h0M347.5 1006.2h0M347.8 1006.0h0M348.2 1005.7h0M348.6 1005.2h0M348.9 1004.9h0M349.3 1006.1h0M349.7 1005.0h0M350.0 1005.1h0M350.4 1005.9h0M350.8 1005.8h0M351.1 1004.7h0M351.5 1004.1h0M351.8 1005.2h0M352.2 1005.8h0M352.6 1004.7h0M352.9 1005.1h0M353.3 1005.8h0M353.7 1005.2h0M354.0 1004.8h0M354.4 1004.8h0M354.8 1004.5h0M355.1 1004.9h0M355.5 1005.5h0M355.9 1005.0h0M356.2 1004.9h0M356.6 1005.3h0M357.0 1005.4h0M357.3 1004.9h0M357.7 1005.2h0M358.1 1005.3h0M358.4 1005.1h0M358.8 1005.4h0M359.2 1005.8h0M359.5 1006.0h0M359.9 1006.1h0M360.3 1006.9h0M360.6 1006.9h0M361.0 1007.5h0M361.3 1007.2h0M361.7 1006.9h0M362.1 1007.3h0M362.4 1007.0h0M362.8 1005.8h0M363.2 1005.3h0M363.5 1005.9h0M363.9 1005.4h0M364.3 1005.3h0M364.6 1005.4h0M365.0 1005.7h0M365.4 1005.4h0M365.7 1005.2h0M366.1 1004.8h0M366.5 1005.2h0M366.8 1005.3h0M367.2 1005.4h0M367.6 1005.5h0M367.9 1005.0h0M368.3 1005.0h0M368.7 1005.1h0M369.0 1005.7h0M369.4 1005.8h0M369.8 1005.6h0M370.1 1005.7h0M370.5 1006.0h0M370.8 1006.5h0M371.2 1005.9h0M371.6 1005.9h0M371.9 1005.6h0M372.3 1005.9h0M372.7 1005.9h0M373.0 1005.9h0M373.4 1005.7h0M373.8 1006.4h0M374.1 1006.8h0M374.5 1005.7h0M374.9 1006.4h0M375.2 1006.0h0M375.6 1005.5h0M376.0 1006.3h0M376.3 1005.9h0M376.7 1006.4h0M377.1 1005.8h0M377.4 1005.1h0M377.8 1005.8h0M378.2 1006.7h0M378.5 1006.2h0M378.9 1005.8h0M379.3 1005.8h0M379.6 1005.6h0M380.0 1004.8h0M380.3 1005.7h0M380.7 1004.9h0M381.1 1005.8h0M381.4 1004.9h0M381.8 1004.8h0M382.2 1005.4h0M382.5 1005.3h0M382.9 1005.2h0M383.3 1005.4h0M383.6 1005.4h0M384.0 1005.9h0M384.4 1006.4h0M384.7 1006.1h0M385.1 1006.0h0M385.5 1006.3h0M385.8 1007.0h0M386.2 1005.5h0M386.6 1005.0h0M386.9 1004.9h0M387.3 1005.4h0M387.7 1005.8h0M388.0 1005.8h0M388.4 1006.3h0M388.8 1005.6h0M389.1 1005.1h0M389.5 1005.0h0M389.9 1005.9h0M390.2 1006.1h0M390.6 1006.4h0M390.9 1006.0h0M391.3 1006.4h0M391.7 1006.4h0M392.0 1006.1h0M392.4 1006.4h0M392.8 1005.5h0M393.1 1005.5h0M393.5 1006.1h0M393.9 1005.7h0M394.2 1005.2h0M394.6 1005.6h0M395.0 1005.7h0M395.3 1005.6h0M395.7 1005.5h0M396.1 1005.5h0M396.4 1005.9h0M396.8 1006.2h0M397.2 1005.5h0M397.5 1004.9h0M397.9 1004.5h0M398.3 1004.2h0M398.6 1004.4h0M399.0 1004.9h0M399.4 1004.5h0M399.7 1004.9h0M400.1 1005.1h0M400.4 1006.2h0M400.8 1006.2h0M401.2 1006.4h0M401.5 1006.9h0M401.9 1006.7h0M402.3 1007.1h0M402.6 1007.0h0M403.0 1006.8h0M403.4 1007.3h0M403.7 1006.7h0M404.1 1006.7h0M404.5 1006.8h0M404.8 1007.1h0M405.2 1007.3h0M405.6 1007.2h0M405.9 1007.3h0M406.3 1007.3h0M406.7 1007.0h0M407.0 1006.5h0M407.4 1006.6h0M407.8 1006.4h0M408.1 1006.7h0M408.5 1005.4h0M408.9 1004.8h0M409.2 1004.4h0M409.6 1004.2h0M409.9 1005.0h0M410.3 1004.9h0M410.7 1004.7h0M411.0 1004.6h0M411.4 1005.4h0M411.8 1005.8h0M412.1 1005.3h0M412.5 1005.4h0M412.9 1006.3h0M413.2 1006.2h0M413.6 1005.5h0M414.0 1005.9h0M414.3 1006.0h0M414.7 1006.3h0M415.1 1006.1h0M415.4 1006.6h0M415.8 1006.8h0M416.2 1007.0h0M416.5 1006.1h0M416.9 1006.3h0M417.3 1006.8h0M417.6 1006.6h0M418.0 1006.6h0M418.4 1005.4h0M418.7 1006.0h0M419.1 1006.8h0M419.4 1007.0h0M419.8 1006.6h0M420.2 1006.3h0M420.5 1006.0h0M420.9 1006.6h0M421.3 1007.0h0M421.6 1006.8h0M422.0 1006.4h0M422.4 1006.3h0M422.7 1006.4h0M423.1 1006.5h0M423.5 1006.4h0M423.8 1005.8h0M424.2 1004.6h0M424.6 1004.5h0M424.9 1004.0h0M425.3 1004.8h0M425.7 1005.2h0M426.0 1005.4h0M426.4 1005.5h0M426.8 1005.9h0M427.1 1006.5h0M427.5 1006.0h0M427.9 1006.5h0M428.2 1006.3h0M428.6 1006.1h0M428.9 1006.2h0M429.3 1005.5h0M429.7 1005.3h0M430.0 1005.2h0M430.4 1005.3h0M430.8 1005.5h0M431.1 1004.9h0M431.5 1005.5h0M431.9 1004.7h0M432.2 1004.2h0M432.6 1003.7h0M433.0 1004.2h0M433.3 1004.8h0M433.7 1005.4h0M434.1 1005.4h0M434.4 1004.9h0M434.8 1005.5h0M435.2 1005.3h0M435.5 1004.5h0M435.9 1005.0h0M436.3 1004.3h0M436.6 1004.1h0M437.0 1004.9h0M437.4 1004.9h0M437.7 1005.0h0M438.1 1005.8h0M438.4 1006.6h0M438.8 1007.1h0M439.2 1006.8h0M439.5 1006.7h0M439.9 1006.8h0M440.3 1007.5h0M440.6 1007.2h0M441.0 1007.1h0M441.4 1007.9h0M441.7 1008.3h0M442.1 1007.8h0M442.5 1008.0h0M442.8 1008.3h0M443.2 1008.3h0M443.6 1007.5h0M443.9 1006.5h0M444.3 1006.9h0M444.7 1006.8h0M445.0 1005.7h0M445.4 1005.8h0M445.8 1005.1h0M446.1 1006.3h0M446.5 1005.7h0M446.9 1005.5h0M447.2 1006.3h0M447.6 1005.8h0M448.0 1005.4h0M448.3 1005.0h0M448.7 1004.4h0M449.0 1004.4h0M449.4 1005.0h0M449.8 1005.2h0M450.1 1005.3h0M450.5 1005.2h0M450.9 1005.4h0M451.2 1005.6h0M451.6 1004.8h0M452.0 1005.2h0M452.3 1003.8h0M452.7 1003.2h0M453.1 1003.5h0M453.4 1004.0h0M453.8 1005.0h0M454.2 1005.5h0M454.5 1005.4h0M454.9 1005.8h0M455.3 1006.2h0M455.6 1005.9h0M456.0 1006.1h0M456.4 1005.9h0M456.7 1006.3h0M457.1 1005.7h0M457.5 1005.4h0M457.8 1005.2h0M458.2 1004.8h0M458.5 1005.5h0M458.9 1005.4h0M459.3 1005.7h0M459.6 1005.0h0M460.0 1005.1h0M460.4 1005.5h0M460.7 1005.0h0M461.1 1005.6h0M461.5 1005.0h0M461.8 1004.7h0M462.2 1005.0h0M462.6 1005.7h0M462.9 1006.2h0M463.3 1006.0h0M463.7 1006.5h0M464.0 1006.0h0M464.4 1006.5h0M464.8 1006.5h0M465.1 1006.4h0M465.5 1007.4h0M465.9 1007.4h0M466.2 1007.9h0M466.6 1008.7h0M467.0 1008.7h0M467.3 1008.4h0M467.7 1008.1h0M468.0 1008.1h0M468.4 1007.2h0M468.8 1006.3h0M469.1 1005.9h0M469.5 1005.4h0M469.9 1005.0h0M470.2 1005.4h0M470.6 1005.1h0M471.0 1004.9h0M471.3 1004.7h0M471.7 1005.2h0M472.1 1006.0h0M472.4 1005.4h0M472.8 1005.3h0M473.2 1005.8h0M473.5 1005.6h0M473.9 1005.5h0M474.3 1005.3h0M474.6 1005.3h0M475.0 1004.8h0M475.4 1005.8h0M475.7 1005.8h0M476.1 1005.6h0M476.5 1005.2h0M476.8 1004.4h0M477.2 1005.8h0M477.5 1005.5h0M477.9 1005.4h0M478.3 1004.7h0M478.6 1003.9h0M479.0 1004.6h0M479.4 1004.9h0M479.7 1005.6h0M480.1 1004.9h0M480.5 1005.8h0M480.8 1005.1h0M481.2 1005.0h0M481.6 1004.4h0M481.9 1005.8h0M482.3 1005.8h0M482.7 1005.7h0M483.0 1006.2h0M483.4 1006.4h0M483.8 1006.3h0M484.1 1005.9h0M484.5 1005.6h0M484.9 1005.5h0M485.2 1005.8h0M485.6 1005.6h0M486.0 1006.0h0M486.3 1005.4h0M486.7 1005.7h0M487.0 1005.4h0M487.4 1005.9h0M487.8 1005.5h0M488.1 1005.3h0M488.5 1005.1h0M488.9 1005.0h0M489.2 1004.6h0M489.6 1004.4h0M490.0 1004.4h0M490.3 1004.7h0M490.7 1004.4h0M491.1 1004.4h0M491.4 1005.5h0M491.8 1005.8h0M492.2 1005.7h0M492.5 1006.1h0M492.9 1006.0h0M493.3 1006.9h0M493.6 1006.3h0M494.0 1005.9h0M494.4 1005.1h0M494.7 1005.2h0M495.1 1006.1h0M495.5 1006.0h0M495.8 1006.7h0M496.2 1006.7h0M496.6 1006.9h0M496.9 1006.9h0M497.3 1006.7h0M497.6 1006.6h0M498.0 1005.5h0M498.4 1005.3h0M498.7 1006.2h0M499.1 1005.6h0M499.5 1006.1h0M499.8 1006.2h0M500.2 1006.7h0M500.6 1007.0h0M500.9 1006.2h0M501.3 1006.6h0M501.7 1006.8h0M502.0 1007.1h0M502.4 1007.0h0M502.8 1006.4h0M503.1 1006.5h0M503.5 1007.3h0M503.9 1007.0h0M504.2 1007.5h0M504.6 1007.7h0M505.0 1007.0h0M505.3 1006.9h0M505.7 1007.2h0M506.1 1007.5h0M506.4 1007.8h0M506.8 1007.6h0M507.1 1007.7h0M507.5 1006.9h0M507.9 1006.4h0M508.2 1006.5h0M508.6 1006.6h0M509.0 1006.6h0M509.3 1007.2h0M509.7 1007.4h0M510.1 1007.5h0M510.4 1007.8h0M510.8 1008.4h0M511.2 1007.7h0M511.5 1008.5h0M511.9 1008.8h0M512.3 1008.6h0M512.6 1008.5h0M513.0 1008.8h0M513.4 1008.6h0M513.7 1008.4h0M514.1 1008.4h0M514.5 1008.2h0M514.8 1008.2h0M515.2 1008.8h0M515.6 1008.0h0M515.9 1007.8h0M516.3 1007.5h0M516.6 1007.1h0M517.0 1007.5h0M517.4 1007.0h0M517.7 1007.0h0M518.1 1007.4h0M518.5 1006.8h0M518.8 1007.5h0M519.2 1007.0h0M519.6 1007.6h0M519.9 1006.7h0M520.3 1006.2h0M520.7 1006.0h0M521.0 1006.6h0M521.4 1006.7h0M521.8 1006.6h0M522.1 1007.1h0M522.5 1007.1h0M522.9 1007.1h0M523.2 1007.1h0M523.6 1007.6h0M524.0 1007.5h0M524.3 1007.3h0M524.7 1007.0h0M525.1 1007.5h0M525.4 1007.1h0M525.8 1007.7h0M526.1 1007.1h0M526.5 1006.1h0M526.9 1007.4h0M527.2 1007.3h0M527.6 1006.7h0M528.0 1007.1h0M528.3 1006.7h0M528.7 1007.2h0M529.1 1007.6h0M529.4 1007.2h0M529.8 1007.4h0M530.2 1007.6h0M530.5 1007.4h0M530.9 1007.9h0M531.3 1007.8h0M531.6 1007.6h0M532.0 1007.4h0M532.4 1007.2h0M532.7 1007.9h0M533.1 1008.8h0M533.5 1008.6h0M533.8 1007.7h0M534.2 1008.1h0M534.6 1008.5h0M534.9 1007.9h0M535.3 1007.7h0M535.6 1007.1h0M536.0 1006.3h0M536.4 1006.3h0M536.7 1006.3h0M537.1 1006.3h0M537.5 1006.4h0M537.8 1005.8h0M538.2 1005.4h0M538.6 1005.1h0M538.9 1005.6h0M539.3 1005.0h0M539.7 1005.4h0M540.0 1005.2h0M540.4 1006.9h0M540.8 1007.2h0M541.1 1007.0h0M541.5 1007.0h0M541.9 1006.2h0M542.2 1007.5h0M542.6 1006.7h0M543.0 1006.4h0M543.3 1006.5h0M543.7 1006.4h0M544.1 1006.0h0M544.4 1005.4h0M544.8 1005.1h0M545.1 1006.3h0M545.5 1006.1h0M545.9 1005.4h0M546.2 1005.7h0M546.6 1005.5h0M547.0 1005.7h0M547.3 1005.3h0M547.7 1004.9h0M548.1 1006.0h0M548.4 1006.4h0M548.8 1006.2h0M549.2 1006.2h0M549.5 1005.9h0M549.9 1005.2h0M550.3 1005.4h0M550.6 1005.3h0M551.0 1005.5h0M551.4 1006.2h0M551.7 1006.0h0M552.1 1006.8h0M552.5 1007.6h0M552.8 1006.8h0M553.2 1006.9h0M553.6 1006.2h0M553.9 1006.5h0M554.3 1006.3h0M554.7 1006.1h0M555.0 1005.6h0M555.4 1006.2h0M555.7 1005.7h0M556.1 1006.3h0M556.5 1006.1h0M556.8 1004.9h0M557.2 1004.8h0M557.6 1004.3h0M557.9 1004.4h0M558.3 1004.3h0M558.7 1004.8h0M559.0 1004.4h0M559.4 1005.2h0M559.8 1005.3h0M560.1 1005.1h0M560.5 1006.1h0M560.9 1006.5h0M561.2 1006.5h0M561.6 1006.9h0M562.0 1007.0h0M562.3 1007.4h0M562.7 1007.5h0M563.1 1007.3h0M563.4 1007.1h0M563.8 1007.1h0M564.2 1006.0h0M564.5 1006.3h0M564.9 1007.4h0M565.2 1007.2h0M565.6 1007.1h0M566.0 1007.2h0M566.3 1007.5h0M566.7 1006.9h0M567.1 1007.1h0M567.4 1007.1h0M567.8 1007.1h0M568.2 1007.2h0M568.5 1007.2h0M568.9 1006.3h0M569.3 1006.6h0M569.6 1007.3h0M570.0 1007.1h0M570.4 1007.7h0M570.7 1007.1h0M571.1 1007.9h0M571.5 1007.6h0M571.8 1007.6h0M572.2 1007.8h0M572.6 1007.4h0M572.9 1008.2h0M573.3 1007.7h0M573.7 1008.1h0M574.0 1007.8h0M574.4 1008.0h0M574.7 1008.4h0M575.1 1008.5h0M575.5 1007.5h0M575.8 1007.4h0M576.2 1007.1h0M576.6 1006.9h0M576.9 1007.1h0M577.3 1007.5h0M577.7 1007.1h0M578.0 1006.6h0M578.4 1006.5h0M578.8 1006.2h0M579.1 1005.8h0M579.5 1006.0h0M579.9 1005.8h0M580.2 1005.9h0M580.6 1005.9h0M581.0 1006.4h0M581.3 1006.6h0M581.7 1006.3h0M582.1 1006.4h0M582.4 1007.3h0M582.8 1007.5h0M583.2 1008.7h0M583.5 1007.2h0M583.9 1007.0h0M584.2 1006.5h0M584.6 1006.4h0M585.0 1007.1h0M585.3 1007.2h0M585.7 1007.1h0M586.1 1007.5h0M586.4 1007.2h0M586.8 1007.0h0M587.2 1006.7h0M587.5 1007.1h0M587.9 1007.7h0M588.3 1007.6h0M588.6 1008.2h0M589.0 1007.5h0M589.4 1006.9h0M589.7 1005.9h0M590.1 1006.0h0M590.5 1005.3h0M590.8 1004.8h0M591.2 1004.9h0M591.6 1004.8h0M591.9 1004.5h0M592.3 1004.7h0M592.7 1005.2h0M593.0 1005.1h0M593.4 1005.5h0M593.7 1006.1h0M594.1 1005.8h0M594.5 1006.1h0M594.8 1005.1h0M595.2 1004.3h0M595.6 1005.5h0M595.9 1004.8h0M596.3 1005.3h0M596.7 1004.3h0M597.0 1004.3h0M597.4 1004.5h0M597.8 1004.1h0M598.1 1004.4h0M598.5 1004.5h0M598.9 1004.7h0M599.2 1005.0h0M599.6 1004.8h0M600.0 1005.5h0M600.3 1004.7h0M600.7 1005.7h0M601.1 1005.4h0M601.4 1005.2h0M601.8 1004.6h0M602.2 1005.4h0M602.5 1003.8h0M602.9 1004.2h0M603.2 1004.3h0M603.6 1005.0h0M604.0 1004.0h0M604.3 1004.6h0M604.7 1004.2h0M605.1 1004.7h0M605.4 1004.6h0M605.8 1004.7h0M606.2 1004.7h0M606.5 1004.8h0M606.9 1005.2h0M607.3 1005.1h0M607.6 1005.6h0M608.0 1006.2h0M608.4 1005.6h0M608.7 1006.8h0M609.1 1006.5h0M609.5 1006.4h0M609.8 1006.6h0M610.2 1006.7h0M610.6 1006.4h0M610.9 1006.6h0M611.3 1006.5h0M611.7 1006.2h0M612.0 1005.7h0M612.4 1006.1h0M612.8 1005.9h0M613.1 1006.5h0M613.5 1006.9h0M613.8 1006.2h0M614.2 1006.1h0M614.6 1005.7h0M614.9 1005.5h0M615.3 1005.2h0M615.7 1005.7h0M616.0 1006.2h0M616.4 1004.9h0M616.8 1006.0h0M617.1 1006.0h0M617.5 1005.7h0M617.9 1005.9h0M618.2 1004.5h0M618.6 1004.2h0M619.0 1003.9h0M619.3 1004.2h0M619.7 1004.3h0M620.1 1004.7h0M620.4 1004.8h0M620.8 1004.6h0M621.2 1004.7h0M621.5 1004.8h0M621.9 1004.2h0M622.3 1003.5h0M622.6 1003.7h0M623.0 1004.7h0M623.3 1004.0h0M623.7 1004.1h0M624.1 1004.1h0M624.4 1004.7h0M624.8 1004.3h0M625.2 1004.6h0M625.5 1004.2h0M625.9 1005.2h0M626.3 1005.3h0M626.6 1005.3h0M627.0 1006.2h0M627.4 1005.7h0M627.7 1005.8h0M628.1 1006.5h0M628.5 1005.9h0M628.8 1006.5h0M629.2 1005.6h0M629.6 1005.6h0M629.9 1006.0h0M630.3 1006.1h0M630.7 1006.8h0M631.0 1006.8h0M631.4 1007.5h0M631.8 1006.7h0M632.1 1006.3h0M632.5 1006.6h0M632.8 1006.4h0M633.2 1006.0h0M633.6 1006.1h0M633.9 1006.0h0M634.3 1005.7h0M634.7 1005.6h0M635.0 1005.9h0M635.4 1005.8h0M635.8 1006.1h0M636.1 1006.3h0M636.5 1006.3h0M636.9 1006.0h0M637.2 1006.7h0M637.6 1006.6h0M638.0 1006.1h0M638.3 1005.9h0M638.7 1006.4h0M639.1 1005.9h0M639.4 1005.7h0M639.8 1005.5h0M640.2 1004.9h0M640.5 1005.7h0M640.9 1005.7h0M641.3 1005.6h0M641.6 1006.2h0M642.0 1005.0h0M642.3 1004.7h0M642.7 1005.9h0M643.1 1005.4h0M643.4 1005.9h0M643.8 1005.1h0M644.2 1005.0h0M644.5 1004.9h0M644.9 1005.2h0M645.3 1005.0h0M645.6 1005.1h0M646.0 1005.1h0M646.4 1005.7h0M646.7 1005.2h0M647.1 1005.6h0M647.5 1005.6h0M647.8 1005.8h0M648.2 1005.8h0M648.6 1005.4h0M648.9 1006.1h0M649.3 1006.3h0M649.7 1006.6h0M650.0 1006.2h0M650.4 1006.2h0M650.8 1006.1h0M651.1 1006.2h0M651.5 1006.9h0M651.8 1006.6h0M652.2 1006.6h0M652.6 1006.8h0M652.9 1006.7h0M653.3 1006.2h0M653.7 1005.9h0M654.0 1005.1h0M654.4 1005.2h0M654.8 1005.4h0M655.1 1005.5h0M655.5 1005.2h0M655.9 1004.6h0M656.2 1004.5h0M656.6 1004.6h0M657.0 1004.8h0M657.3 1004.7h0M657.7 1004.8h0M658.1 1005.3h0M658.4 1006.5h0M658.8 1006.6h0M659.2 1006.1h0M659.5 1005.7h0M659.9 1007.0h0M660.3 1006.8h0M660.6 1007.3h0M661.0 1006.4h0M661.4 1006.2h0M661.7 1006.6h0M662.1 1006.6h0M662.4 1006.7h0M662.8 1006.4h0M663.2 1006.0h0M663.5 1006.7h0M663.9 1006.3h0M664.3 1006.6h0M664.6 1006.2h0M665.0 1006.1h0M665.4 1006.5h0M665.7 1007.3h0M666.1 1006.2h0M666.5 1005.6h0M666.8 1006.1h0M667.2 1005.5h0M667.6 1005.5h0M667.9 1005.6h0M668.3 1005.6h0M668.7 1005.9h0M669.0 1005.0h0M669.4 1004.9h0M669.8 1005.9h0M670.1 1005.0h0M670.5 1004.6h0M670.9 1005.1h0M671.2 1005.3h0M671.6 1005.4h0M671.9 1005.8h0M672.3 1005.4h0M672.7 1005.3h0M673.0 1005.7h0M673.4 1006.1h0M673.8 1005.8h0M674.1 1005.8h0M674.5 1004.5h0M674.9 1004.8h0M675.2 1004.9h0M675.6 1004.7h0M676.0 1005.1h0M676.3 1004.4h0M676.7 1004.6h0M677.1 1005.0h0M677.4 1005.1h0M677.8 1005.0h0M678.2 1005.4h0M678.5 1005.1h0M678.9 1004.9h0M679.3 1004.9h0M679.6 1004.4h0M680.0 1003.4h0M680.4 1003.2h0M680.7 1003.5h0M681.1 1002.8h0M681.4 1002.3h0M681.8 1003.0h0M682.2 1003.2h0M682.5 1003.4h0M682.9 1003.9h0M683.3 1004.7h0M683.6 1004.3h0M684.0 1004.2h0M684.4 1004.4h0M684.7 1003.6h0M685.1 1004.2h0M685.5 1004.1h0M685.8 1004.5h0M686.2 1004.7h0M686.6 1004.6h0M686.9 1004.3h0M687.3 1004.5h0M687.7 1003.6h0M688.0 1004.4h0M688.4 1004.3h0M688.8 1005.2h0M689.1 1004.9h0M689.5 1005.4h0M689.9 1004.9h0M690.2 1004.9h0M690.6 1004.4h0M690.9 1003.8h0M691.3 1003.1h0M691.7 1002.9h0M692.0 1003.6h0M692.4 1004.3h0M692.8 1004.3h0M693.1 1004.6h0M693.5 1005.1h0M693.9 1005.3h0M694.2 1006.1h0M694.6 1005.4h0M695.0 1005.6h0M695.3 1006.1h0M695.7 1006.0h0M696.1 1006.5h0M696.4 1006.2h0M696.8 1006.1h0M697.2 1005.5h0M697.5 1006.0h0M697.9 1006.6h0M698.3 1007.2h0M698.6 1006.4h0M699.0 1006.4h0M699.4 1006.7h0M699.7 1007.0h0M700.1 1006.6h0M700.4 1005.9h0M700.8 1006.3h0M701.2 1006.6h0M701.5 1007.4h0M701.9 1006.9h0M702.3 1007.0h0M702.6 1005.4h0M703.0 1005.9h0M703.4 1005.9h0M703.7 1006.1h0M704.1 1005.7h0M704.5 1006.4h0M704.8 1005.8h0M705.2 1006.1h0M705.6 1006.1h0M705.9 1006.4h0M706.3 1006.0h0M706.7 1005.2h0M707.0 1005.1h0M707.4 1005.2h0M707.8 1004.4h0M708.1 1004.7h0M708.5 1004.9h0M708.9 1005.4h0M709.2 1005.6h0M709.6 1005.5h0M709.9 1005.7h0M710.3 1006.0h0M710.7 1006.6h0M711.0 1007.4h0M711.4 1007.4h0M711.8 1007.2h0M712.1 1007.2h0M712.5 1007.5h0M712.9 1007.2h0M713.2 1007.1h0M713.6 1006.8h0M714.0 1007.3h0M714.3 1006.9h0M714.7 1006.4h0M715.1 1006.8h0M715.4 1006.3h0M715.8 1006.3h0M716.2 1005.9h0M716.5 1006.3h0M716.9 1005.8h0M717.3 1005.9h0M717.6 1006.1h0M718.0 1005.6h0M718.4 1005.3h0M718.7 1005.8h0M719.1 1005.1h0M719.5 1005.3h0M719.8 1005.7h0M720.2 1006.2h0M720.5 1005.6h0M720.9 1005.1h0M721.3 1005.4h0M721.6 1005.0h0M722.0 1004.8h0M722.4 1004.0h0M722.7 1002.6h0M723.1 1003.2h0M723.5 1004.4h0M723.8 1004.8h0M724.2 1005.3h0M724.6 1005.1h0M724.9 1005.2h0M725.3 1005.9h0M725.7 1005.9h0M726.0 1006.4h0M726.4 1006.4h0M726.8 1007.3h0M727.1 1006.9h0M727.5 1006.9h0M727.9 1006.6h0M728.2 1006.7h0M728.6 1006.8h0M729.0 1006.7h0M729.3 1006.2h0M729.7 1005.8h0M730.0 1005.5h0M730.4 1005.9h0M730.8 1006.0h0M731.1 1005.3h0M731.5 1005.0h0M731.9 1005.3h0M732.2 1006.4h0M732.6 1006.9h0M733.0 1007.5h0M733.3 1006.8h0M733.7 1006.5h0M734.1 1006.9h0M734.4 1007.0h0M734.8 1005.7h0M735.2 1005.1h0M735.5 1005.8h0M735.9 1006.1h0M736.3 1006.6h0M736.6 1007.3h0M737.0 1006.8h0M737.4 1005.7h0M737.7 1004.9h0M738.1 1004.8h0M738.5 1005.3h0M738.8 1004.9h0M739.2 1004.6h0M739.5 1005.5h0M739.9 1006.1h0M740.3 1005.6h0M740.6 1005.4h0M741.0 1004.5h0M741.4 1004.4h0M741.7 1003.9h0M742.1 1004.6h0M742.5 1004.2h0M742.8 1003.5h0M743.2 1002.8h0M743.6 1003.3h0M743.9 1003.2h0M744.3 1003.9h0M744.7 1004.5h0M745.0 1004.5h0M745.4 1003.7h0M745.8 1003.4h0M746.1 1004.3h0M746.5 1003.9h0M746.9 1003.8h0M747.2 1004.1h0M747.6 1005.1h0M748.0 1004.8h0M748.3 1004.5h0M748.7 1004.5h0M749.0 1005.2h0M749.4 1005.9h0M749.8 1005.3h0M750.1 1004.9h0M750.5 1004.8h0M750.9 1005.2h0M751.2 1004.6h0M751.6 1005.0h0M752.0 1005.2h0M752.3 1005.6h0M752.7 1005.9h0M753.1 1005.9h0M753.4 1005.5h0M753.8 1004.9h0M754.2 1005.7h0M754.5 1004.7h0M754.9 1005.0h0M755.3 1004.9h0M755.6 1004.6h0M756.0 1003.7h0M756.4 1005.4h0M756.7 1004.6h0M757.1 1004.2h0M757.5 1003.5h0M757.8 1004.8h0M758.2 1005.3h0M758.5 1005.2h0M758.9 1005.7h0M759.3 1004.8h0M759.6 1005.3h0M760.0 1004.5h0M760.4 1004.5h0M760.7 1005.3h0M761.1 1005.7h0M761.5 1005.7h0M761.8 1006.2h0M762.2 1005.3h0M762.6 1005.4h0M762.9 1005.3h0M763.3 1006.0h0M763.7 1007.2h0M764.0 1007.4h0M764.4 1007.1h0M764.8 1006.8h0M765.1 1007.6h0M765.5 1007.2h0M765.9 1006.4h0M766.2 1006.2h0M766.6 1006.6h0M767.0 1006.5h0M767.3 1005.5h0M767.7 1005.9h0M768.0 1005.1h0M768.4 1004.7h0M768.8 1004.4h0M769.1 1004.8h0M769.5 1004.4h0M769.9 1004.3h0M770.2 1004.3h0M770.6 1003.8h0M771.0 1004.0h0M771.3 1004.2h0M771.7 1004.6h0M772.1 1004.1h0M772.4 1004.8h0M772.8 1004.4h0M773.2 1005.2h0M773.5 1005.2h0M773.9 1005.6h0M774.3 1005.5h0M774.6 1005.5h0M775.0 1005.8h0M775.4 1005.6h0M775.7 1006.6h0M776.1 1005.9h0M776.5 1006.2h0M776.8 1006.5h0M777.2 1006.8h0M777.6 1006.5h0M777.9 1006.7h0M778.3 1006.0h0M778.6 1005.4h0M779.0 1004.7h0M779.4 1004.2h0M779.7 1004.0h0M780.1 1004.7h0M780.5 1004.5h0M780.8 1003.9h0M781.2 1003.3h0M781.6 1003.0h0M781.9 1003.3h0M782.3 1003.8h0M782.7 1003.4h0M783.0 1003.0h0M783.4 1003.7h0M783.8 1003.6h0M784.1 1003.3h0M784.5 1003.1h0M784.9 1003.1h0M785.2 1002.5h0M785.6 1002.3h0M786.0 1002.3h0M786.3 1003.0h0M786.7 1003.1h0M787.1 1002.9h0M787.4 1003.7h0M787.8 1003.6h0M788.1 1004.2h0M788.5 1003.7h0M788.9 1003.3h0M789.2 1003.8h0M789.6 1003.0h0M790.0 1003.3h0M790.3 1002.9h0M790.7 1004.0h0M791.1 1003.7h0M791.4 1003.9h0M791.8 1003.5h0M792.2 1003.7h0M792.5 1003.4h0M792.9 1003.1h0M793.3 1003.1h0M793.6 1002.9h0M794.0 1002.8h0M794.4 1002.6h0M794.7 1002.7h0M795.1 1002.6h0M795.5 1003.0h0M795.8 1002.7h0M796.2 1002.5h0M796.6 1002.9h0M796.9 1002.5h0M797.3 1002.3h0M797.6 1003.4h0M798.0 1003.0h0M798.4 1002.6h0M798.7 1003.2h0M799.1 1004.0h0M799.5 1004.2h0M799.8 1004.5h0M800.2 1003.8h0M800.6 1003.7h0M800.9 1003.7h0M801.3 1004.4h0M801.7 1004.1h0M802.0 1004.9h0M802.4 1005.2h0M802.8 1005.3h0M803.1 1005.2h0M803.5 1005.0h0M803.9 1005.3h0M804.2 1005.8h0M804.6 1005.8h0M805.0 1006.3h0M805.3 1005.6h0M805.7 1006.9h0M806.1 1005.7h0M806.4 1006.3h0M806.8 1006.1h0M807.1 1005.1h0M807.5 1006.4h0M807.9 1006.8h0M808.2 1005.9h0M808.6 1006.0h0M809.0 1006.0h0M809.3 1006.1h0M809.7 1006.5h0M810.1 1006.2h0M810.4 1005.7h0M810.8 1005.3h0M811.2 1005.6h0M811.5 1005.0h0M811.9 1004.2h0M812.3 1004.5h0M812.6 1004.4h0M813.0 1005.0h0M813.4 1005.3h0M813.7 1005.2h0M814.1 1005.6h0M814.5 1006.8h0M814.8 1007.6h0M815.2 1007.5h0M815.6 1007.2h0M815.9 1006.4h0M816.3 1006.9h0M816.6 1006.6h0M817.0 1006.3h0M817.4 1005.9h0M817.7 1005.9h0M818.1 1005.7h0M818.5 1004.9h0M818.8 1005.0h0M819.2 1005.5h0M819.6 1006.2h0M819.9 1006.0h0M820.3 1006.0h0M820.7 1005.1h0M821.0 1005.3h0M821.4 1004.7h0M821.8 1004.3h0M822.1 1003.6h0M822.5 1004.4h0M822.9 1003.6h0M823.2 1003.8h0M823.6 1003.9h0M824.0 1004.2h0M824.3 1004.4h0M824.7 1004.7h0M825.1 1006.1h0M825.4 1005.8h0M825.8 1005.2h0M826.1 1005.9h0M826.5 1005.9h0M826.9 1004.9h0M827.2 1004.8h0M827.6 1004.5h0M828.0 1004.3h0M828.3 1004.6h0M828.7 1004.7h0M829.1 1005.2h0M829.4 1005.3h0M829.8 1004.9h0M830.2 1004.6h0M830.5 1005.1h0M830.9 1004.9h0M831.3 1005.2h0M831.6 1005.2h0M832.0 1005.0h0M832.4 1005.5h0M832.7 1006.1h0M833.1 1006.3h0M833.5 1006.2h0M833.8 1006.0h0M834.2 1006.2h0M834.6 1006.3h0M834.9 1006.7h0M835.3 1006.8h0M835.7 1006.9h0M836.0 1006.6h0M836.4 1006.7h0M836.7 1007.0h0M837.1 1006.0h0M837.5 1005.7h0M837.8 1005.8h0M838.2 1005.0h0M838.6 1004.9h0M838.9 1005.3h0M839.3 1005.2h0M839.7 1003.9h0M840.0 1003.6h0M840.4 1003.2h0M840.8 1003.4h0M841.1 1003.4h0M841.5 1002.1h0M841.9 1002.6h0M842.2 1002.3h0M842.6 1001.5h0M843.0 1001.4h0M843.3 1001.3h0M843.7 1001.5h0M844.1 1001.7h0M844.4 1001.9h0M844.8 1001.0h0M845.2 1001.4h0M845.5 1001.4h0M845.9 1000.9h0M846.2 1001.5h0M846.6 1001.5h0M847.0 1002.3h0M847.3 1002.6h0M847.7 1003.0h0M848.1 1002.9h0M848.4 1003.0h0M848.8 1003.5h0M849.2 1003.7h0M849.5 1004.0h0M849.9 1004.2h0M850.3 1003.8h0M850.6 1003.8h0M851.0 1004.0h0M851.4 1004.2h0M851.7 1004.2h0M852.1 1005.0h0M852.5 1004.9h0M852.8 1005.0h0M853.2 1005.5h0M853.6 1005.7h0M853.9 1006.1h0M854.3 1004.9h0M854.7 1005.1h0M855.0 1005.0h0M855.4 1004.8h0M855.7 1004.6h0M856.1 1004.2h0M856.5 1004.9h0M856.8 1005.6h0M857.2 1003.7h0M857.6 1003.9h0M857.9 1004.3h0M858.3 1004.2h0M858.7 1003.9h0M859.0 1004.6h0M859.4 1004.4h0M859.8 1004.3h0M860.1 1004.3h0M860.5 1004.5h0M860.9 1004.7h0M861.2 1004.7h0M861.6 1006.3h0M862.0 1005.5h0M862.3 1006.4h0M862.7 1006.3h0M863.1 1005.6h0M863.4 1006.0h0M863.8 1005.5h0M864.2 1005.2h0M864.5 1005.2h0M864.9 1005.1h0M865.2 1005.5h0M865.6 1004.9h0M866.0 1004.9h0M866.3 1005.6h0M866.7 1005.4h0M867.1 1005.5h0M867.4 1006.0h0M867.8 1005.7h0M868.2 1005.4h0M868.5 1004.5h0M868.9 1004.5h0M869.3 1004.7h0M869.6 1005.0h0M870.0 1005.3h0M870.4 1005.4h0M870.7 1005.4h0M871.1 1005.2h0M871.5 1005.3h0M871.8 1005.4h0M872.2 1005.9h0M872.6 1005.7h0M872.9 1005.3h0M873.3 1005.1h0M873.7 1004.7h0M874.0 1004.4h0M874.4 1005.3h0M874.7 1005.4h0M875.1 1005.4h0M875.5 1005.5h0M875.8 1004.8h0M876.2 1004.6h0M876.6 1004.9h0M876.9 1004.6h0M877.3 1004.4h0M877.7 1004.7h0M878.0 1004.4h0M878.4 1004.6h0M878.8 1004.3h0M879.1 1003.7h0M879.5 1003.4h0M879.9 1003.5h0M880.2 1003.7h0M880.6 1004.4h0M881.0 1004.6h0M881.3 1005.7h0M881.7 1005.5h0M882.1 1005.2h0M882.4 1005.2h0M882.8 1005.3h0M883.2 1004.5h0M883.5 1004.7h0M883.9 1004.3h0M884.3 1003.3h0M884.6 1003.3h0M885.0 1002.9h0M885.3 1003.0h0M885.7 1003.1h0M886.1 1003.1h0M886.4 1003.1h0M886.8 1002.8h0M887.2 1003.5h0M887.5 1004.2h0M887.9 1003.8h0M888.3 1004.2h0M888.6 1004.5h0M889.0 1004.7h0M889.4 1004.7h0M889.7 1004.4h0M890.1 1003.5h0M890.5 1003.8h0M890.8 1003.9h0M891.2 1004.1h0M891.6 1004.0h0M891.9 1003.4h0M892.3 1004.5h0M892.7 1004.4h0M893.0 1005.2h0M893.4 1005.2h0M893.8 1004.5h0M894.1 1004.4h0M894.5 1004.0h0M894.8 1004.3h0M895.2 1004.9h0M895.6 1004.5h0M895.9 1003.9h0M896.3 1004.0h0M896.7 1004.2h0M897.0 1004.8h0M897.4 1004.3h0M897.8 1004.8h0M898.1 1004.7h0M898.5 1005.4h0M898.9 1005.6h0M899.2 1005.6h0M899.6 1005.2h0M900.0 1004.8h0M900.3 1003.9h0M900.7 1003.6h0M901.1 1003.9h0M901.4 1003.9h0M901.8 1003.4h0M902.2 1002.4h0M902.5 1003.4h0M902.9 1004.2h0M903.3 1003.8h0M903.6 1004.2h0M904.0 1004.7h0M904.3 1004.8h0M904.7 1005.1h0M905.1 1005.9h0M905.4 1005.9h0M905.8 1005.9h0M906.2 1005.7h0M906.5 1005.3h0M906.9 1005.1h0M907.3 1005.0h0M907.6 1005.6h0M908.0 1006.1h0M908.4 1006.5h0M908.7 1005.7h0M909.1 1005.7h0M909.5 1004.6h0M909.8 1004.9h0M910.2 1005.5h0M910.6 1005.1h0M910.9 1004.9h0M911.3 1005.5h0M911.7 1006.1h0M912.0 1006.2h0M912.4 1005.7h0M912.8 1006.2h0M913.1 1006.1h0M913.5 1006.3h0M913.8 1007.0h0M914.2 1007.5h0M914.6 1007.2h0M914.9 1007.4h0M915.3 1007.5h0M915.7 1008.4h0M916.0 1007.5h0M916.4 1007.8h0M916.8 1007.8h0M917.1 1007.8h0M917.5 1007.8h0M917.9 1008.2h0M918.2 1008.1h0M918.6 1008.0h0M919.0 1007.3h0M919.3 1007.7h0M919.7 1007.7h0M920.1 1007.7h0M920.4 1006.9h0M920.8 1007.6h0M921.2 1006.8h0M921.5 1007.3h0M921.9 1006.7h0M922.3 1006.5h0M922.6 1006.5h0M923.0 1006.1h0M923.3 1006.0h0M923.7 1006.2h0M924.1 1006.4h0M924.4 1006.9h0M924.8 1006.9h0M925.2 1007.4h0M925.5 1007.0h0M925.9 1006.9h0M926.3 1006.5h0M926.6 1006.5h0M927.0 1006.0h0M927.4 1006.4h0M927.7 1006.3h0M928.1 1006.2h0M928.5 1006.7h0M928.8 1006.9h0M929.2 1006.5h0M929.6 1006.0h0M929.9 1005.4h0M930.3 1005.7h0M930.7 1005.3h0M931.0 1005.0h0M931.4 1004.1h0M931.8 1003.5h0M932.1 1003.8h0M932.5 1003.8h0M932.8 1003.9h0M933.2 1003.8h0M933.6 1004.0h0M933.9 1003.9h0M934.3 1004.3h0M934.7 1005.0h0M935.0 1004.7h0M935.4 1004.9h0M935.8 1005.3h0M936.1 1006.2h0M936.5 1005.9h0M936.9 1005.5h0M937.2 1005.8h0M937.6 1005.6h0M938.0 1005.3h0M938.3 1005.6h0M938.7 1004.7h0M939.1 1004.9h0M939.4 1004.6h0M939.8 1003.9h0M940.2 1004.4h0M940.5 1004.4h0M940.9 1004.9h0M941.3 1004.3h0M941.6 1004.6h0M942.0 1005.2h0M942.4 1004.5h0M942.7 1004.2h0M943.1 1004.9h0M943.4 1004.4h0M943.8 1004.4h0M944.2 1003.4h0M944.5 1002.5h0M944.9 1003.1h0M945.3 1003.5h0M945.6 1004.0h0M946.0 1003.7h0M946.4 1004.0h0M946.7 1003.6h0M947.1 1003.8h0M947.5 1004.7h0M947.8 1005.0h0M948.2 1004.4h0M948.6 1004.0h0M948.9 1004.3h0M949.3 1004.4h0M949.7 1004.7h0M950.0 1004.6h0M950.4 1005.4h0M950.8 1004.8h0M951.1 1005.1h0M951.5 1005.2h0M951.9 1006.3h0M952.2 1006.3h0M952.6 1005.2h0M952.9 1006.4h0M953.3 1005.5h0M953.7 1005.6h0M954.0 1005.9h0M954.4 1006.5h0M954.8 1006.0h0M955.1 1005.8h0M955.5 1005.8h0M955.9 1005.6h0M956.2 1006.1h0M956.6 1005.5h0M957.0 1006.1h0M957.3 1005.9h0M957.7 1006.3h0M958.1 1006.6h0M958.4 1007.5h0M958.8 1006.8h0M959.2 1007.4h0M959.5 1007.8h0M959.9 1007.5h0M960.3 1006.8h0M960.6 1005.8h0M961.0 1005.2h0M961.4 1005.1h0M961.7 1004.5h0M962.1 1005.2h0M962.4 1005.7h0M962.8 1005.8h0M963.2 1006.2h0M963.5 1006.6h0M963.9 1007.2h0M964.3 1007.0h0M964.6 1006.6h0M965.0 1006.7h0M965.4 1006.8h0M965.7 1006.5h0M966.1 1006.3h0M966.5 1006.7h0M966.8 1006.6h0M967.2 1007.1h0M967.6 1006.9h0M967.9 1006.7h0M968.3 1006.2h0M968.7 1006.1h0M969.0 1005.8h0M969.4 1004.7h0M969.8 1004.8h0M970.1 1005.6h0M970.5 1005.9h0M970.9 1005.7h0M971.2 1005.0h0M971.6 1004.8h0M971.9 1004.4h0M972.3 1004.5h0M972.7 1005.1h0M973.0 1005.5h0M973.4 1006.4h0M973.8 1006.6h0M974.1 1007.0h0M974.5 1007.2h0M974.9 1006.5h0M975.2 1007.8h0M975.6 1007.2h0M976.0 1006.8h0M976.3 1007.4h0M976.7 1007.0h0M977.1 1006.7h0M977.4 1006.8h0M977.8 1006.5h0M978.2 1006.3h0M978.5 1005.8h0M978.9 1005.2h0M979.3 1005.8h0M979.6 1005.5h0M980.0 1005.0h0M980.4 1004.7h0M980.7 1005.5h0M981.1 1005.8h0M981.4 1005.7h0M981.8 1006.0h0M982.2 1006.1h0M982.5 1006.1h0M982.9 1006.0h0M983.3 1005.7h0M983.6 1005.7h0M984.0 1004.9h0M984.4 1004.5h0M984.7 1004.8h0M985.1 1004.6h0M985.5 1004.9h0M985.8 1005.0h0M986.2 1005.3h0M986.6 1005.6h0M986.9 1006.1h0M987.3 1007.3h0M987.7 1007.1h0M988.0 1006.3h0M988.4 1006.7h0M988.8 1006.4h0M989.1 1006.7h0M989.5 1006.2h0M989.9 1006.3h0M990.2 1006.9h0M990.6 1007.0h0M990.9 1007.9h0M991.3 1007.6h0M991.7 1007.6h0M992.0 1008.6h0M992.4 1007.8h0M992.8 1007.7h0M993.1 1007.3h0M993.5 1007.2h0M993.9 1007.4h0M994.2 1007.6h0M994.6 1007.9h0M995.0 1007.9h0M995.3 1006.9h0M995.7 1005.6h0M996.1 1005.8h0M996.4 1006.2h0M996.8 1006.0h0M997.2 1005.7h0M997.5 1006.0h0M997.9 1006.3h0M998.3 1005.5h0M998.6 1005.0h0M999.0 1006.0h0M999.4 1006.7h0M999.7 1007.2h0M1000.1 1006.5h0M1000.5 1006.2h0M1000.8 1006.4h0M1001.2 1007.1h0M1001.5 1006.7h0M1001.9 1006.5h0M1002.3 1006.8h0M1002.6 1006.8h0M1003.0 1006.8h0M1003.4 1006.5h0M1003.7 1007.1h0M1004.1 1006.8h0M1004.5 1007.2h0M1004.8 1006.9h0M1005.2 1006.5h0M1005.6 1006.8h0M1005.9 1006.7h0M1006.3 1006.1h0M1006.7 1007.4h0M1007.0 1007.1h0M1007.4 1006.0h0M1007.8 1006.8h0M1008.1 1007.1h0M1008.5 1007.5h0M1008.9 1007.3h0M1009.2 1008.5h0M1009.6 1008.8h0M1010.0 1008.8h0M1010.3 1008.7h0M1010.7 1008.3h0M1011.0 1007.6h0M1011.4 1007.3h0M1011.8 1006.9h0M1012.1 1006.3h0M1012.5 1006.9h0M1012.9 1006.8h0M1013.2 1005.6h0M1013.6 1004.2h0M1014.0 1003.9h0M1014.3 1003.9h0M1014.7 1003.2h0M1015.1 1003.8h0M1015.4 1003.0h0M1015.8 1003.6h0M1016.2 1003.8h0M1016.5 1002.8h0M1016.9 1004.1h0M1017.3 1003.8h0M1017.6 1004.7h0M1018.0 1005.3h0M1018.4 1005.5h0M1018.7 1005.5h0M1019.1 1005.6h0M1019.5 1005.8h0M1019.8 1005.8h0M1020.2 1006.4h0M1020.5 1006.5h0M1020.9 1007.0h0M1021.3 1006.4h0M1021.6 1007.3h0M1022.0 1006.7h0M1022.4 1007.0h0M1022.7 1007.2h0M1023.1 1006.2h0M1023.5 1006.2h0M1023.8 1007.1h0M1024.2 1006.7h0M1024.6 1008.1h0M1024.9 1008.0h0M1025.3 1007.6h0M1025.7 1008.2h0M1026.0 1008.1h0M1026.4 1008.0h0M1026.8 1006.8h0M1027.1 1007.2h0M1027.5 1006.0h0M1027.9 1005.5h0M1028.2 1005.7h0M1028.6 1006.2h0M1029.0 1005.1h0M1029.3 1005.6h0M1029.7 1005.4h0M1030.0 1005.6h0M1030.4 1006.3h0M1030.8 1006.2h0M1031.1 1006.8h0M1031.5 1007.5h0M1031.9 1007.5h0M1032.2 1006.6h0M1032.6 1005.5h0M1033.0 1005.6h0M1033.3 1005.5h0M1033.7 1005.6h0M1034.1 1004.8h0M1034.4 1004.8h0M1034.8 1005.0h0M1035.2 1005.1h0M1035.5 1004.7h0M1035.9 1003.6h0M1036.3 1003.9h0M1036.6 1005.0h0M1037.0 1004.5h0M1037.4 1005.2h0M1037.7 1004.8h0M1038.1 1004.4h0M1038.5 1004.6h0M1038.8 1005.1h0M1039.2 1006.3h0M1039.5 1006.5h0M1039.9 1006.8h0M1040.3 1006.5h0M1040.6 1006.7h0M1041.0 1007.2h0M1041.4 1007.9h0M1041.7 1008.0h0M1042.1 1007.9h0M1042.5 1007.4h0M1042.8 1006.6h0M1043.2 1006.9h0M1043.6 1007.1h0M1043.9 1006.3h0M1044.3 1005.8h0M1044.7 1005.7h0M1045.0 1005.7h0M1045.4 1004.4h0M1045.8 1004.1h0M1046.1 1003.9h0M1046.5 1003.7h0M1046.9 1004.4h0M1047.2 1004.5h0M1047.6 1005.0h0M1048.0 1004.5h0M1048.3 1004.8h0M1048.7 1005.1h0M1049.1 1004.7h0M1049.4 1004.8h0M1049.8 1006.0h0M1050.1 1005.3h0M1050.5 1005.3h0M1050.9 1005.8h0M1051.2 1005.9h0M1051.6 1005.1h0M1052.0 1005.4h0M1052.3 1006.1h0M1052.7 1006.9h0M1053.1 1007.1h0M1053.4 1005.9h0M1053.8 1006.5h0M1054.2 1006.7h0M1054.5 1007.3h0M1054.9 1007.2h0M1055.3 1006.8h0M1055.6 1007.9h0M1056.0 1008.8h0M1056.4 1008.7h0M1056.7 1008.1h0M1057.1 1008.5h0M1057.5 1007.8h0M1057.8 1006.9h0M1058.2 1008.1h0M1058.6 1008.2h0M1058.9 1007.4h0M1059.3 1007.6h0M1059.6 1007.2h0M1060.0 1006.9h0M1060.4 1007.0h0M1060.7 1007.3h0M1061.1 1007.5h0M1061.5 1008.3h0M1061.8 1007.5h0M1062.2 1008.3h0M1062.6 1007.7h0M1062.9 1008.8h0M1063.3 1008.2h0M1063.7 1008.5h0M1064.0 1008.7h0M1064.4 1007.6h0M1064.8 1007.3h0M1065.1 1006.7h0M1065.5 1006.4h0M1065.9 1006.4h0M1066.2 1006.1h0M1066.6 1006.0h0M1067.0 1005.9h0M1067.3 1005.6h0M1067.7 1005.4h0M1068.1 1005.1h0M1068.4 1004.9h0M1068.8 1004.4h0M1069.1 1005.0h0M1069.5 1005.2h0M1069.9 1005.9h0M1070.2 1005.9h0M1070.6 1005.9h0M1071.0 1005.5h0M1071.3 1006.1h0M1071.7 1004.6h0M1072.1 1004.9h0M1072.4 1004.5h0M1072.8 1003.9h0M1073.2 1005.3h0M1073.5 1005.6h0M1073.9 1004.4h0M1074.3 1006.2h0M1074.6 1005.5h0M1075.0 1005.9h0M1075.4 1006.2h0M1075.7 1005.6h0M1076.1 1006.9h0M1076.5 1006.9h0M1076.8 1006.7h0M1077.2 1007.4h0M1077.6 1007.0h0M1077.9 1005.2h0M1078.3 1005.0h0M1078.6 1004.7h0M1079.0 1004.8h0M1079.4 1005.5h0M1079.7 1005.1h0M1080.1 1004.1h0M1080.5 1004.6h0M1080.8 1004.2h0M1081.2 1004.2h0M1081.6 1003.1h0M1081.9 1004.3h0M1082.3 1004.2h0M1082.7 1004.1h0M1083.0 1003.7h0M1083.4 1004.4h0M1083.8 1005.5h0M1084.1 1005.7h0M1084.5 1005.5h0M1084.9 1006.2h0M1085.2 1006.4h0M1085.6 1006.1h0M1086.0 1005.3h0M1086.3 1005.8h0M1086.7 1006.2h0M1087.1 1006.3h0M1087.4 1005.4h0M1087.8 1005.3h0M1088.1 1005.2h0M1088.5 1004.6h0M1088.9 1004.0h0M1089.2 1003.2h0M1089.6 1004.0h0M1090.0 1004.4h0M1090.3 1004.6h0M1090.7 1004.9h0M1091.1 1005.5h0M1091.4 1005.6h0M1091.8 1006.4h0M1092.2 1005.9h0M1092.5 1005.9h0M1092.9 1006.5h0M1093.3 1007.7h0M1093.6 1007.8h0M1094.0 1007.0h0M1094.4 1006.9h0M1094.7 1006.9h0M1095.1 1008.4h0M1095.5 1008.6h0M1095.8 1008.6h0M1096.2 1008.6h0M1096.6 1008.8h0M1096.9 1008.8h0M1097.3 1008.8h0M1097.6 1007.3h0M1098.0 1007.4h0M1098.4 1006.6h0M1098.7 1007.2h0M1099.1 1006.8h0M1099.5 1006.6h0M1099.8 1006.9h0M1100.2 1006.7h0M1100.6 1006.3h0M1100.9 1006.1h0M1101.3 1005.6h0M1101.7 1004.9h0M1102.0 1005.1h0M1102.4 1005.8h0M1102.8 1006.5h0M1103.1 1006.6h0M1103.5 1006.6h0M1103.9 1006.2h0M1104.2 1005.8h0M1104.6 1006.0h0M1105.0 1006.8h0M1105.3 1005.7h0M1105.7 1005.5h0M1106.1 1005.6h0M1106.4 1005.6h0M1106.8 1005.0h0M1107.2 1004.8h0M1107.5 1004.7h0M1107.9 1005.8h0M1108.2 1005.3h0M1108.6 1004.8h0M1109.0 1005.1h0M1109.3 1005.3h0M1109.7 1006.1h0M1110.1 1005.8h0M1110.4 1006.1h0M1110.8 1005.4h0M1111.2 1005.8h0M1111.5 1005.7h0M1111.9 1005.1h0M1112.3 1004.8h0M1112.6 1005.5h0M1113.0 1005.6h0M1113.4 1004.8h0M1113.7 1005.1h0M1114.1 1005.5h0M1114.5 1005.7h0M1114.8 1005.2h0M1115.2 1006.2h0M1115.6 1006.7h0M1115.9 1006.5h0M1116.3 1006.7h0M1116.7 1006.7h0M1117.0 1007.0h0M1117.4 1008.2h0M1117.7 1008.3h0M1118.1 1007.3h0M1118.5 1007.6h0M1118.8 1007.7h0M1119.2 1007.3h0M1119.6 1007.5h0M1119.9 1007.0h0M1120.3 1006.8h0M1120.7 1006.6h0M1121.0 1007.0h0M1121.4 1007.7h0M1121.8 1008.8h0M1122.1 1008.8h0M1122.5 1008.6h0M1122.9 1008.3h0M1123.2 1007.6h0M1123.6 1007.7h0M1124.0 1007.6h0M1124.3 1006.8h0M1124.7 1006.4h0M1125.1 1006.2h0M1125.4 1006.3h0M1125.8 1006.4h0M1126.2 1006.3h0M1126.5 1006.1h0M1126.9 1006.4h0M1127.2 1007.1h0M1127.6 1006.7h0M1128.0 1006.6h0M1128.3 1006.5h0M1128.7 1006.7h0M1129.1 1006.6h0M1129.4 1006.3h0M1129.8 1006.0h0M1130.2 1005.8h0M1130.5 1005.2h0M1130.9 1004.9h0M1131.3 1004.0h0M1131.6 1004.5h0M1132.0 1004.4h0M1132.4 1004.6h0M1132.7 1003.4h0M1133.1 1003.8h0M1133.5 1003.7h0M1133.8 1003.1h0M1134.2 1003.9h0M1134.6 1004.4h0M1134.9 1004.9h0M1135.3 1005.3h0M1135.7 1005.9h0M1136.0 1006.1h0M1136.4 1005.5h0M1136.7 1005.0h0M1137.1 1005.2h0M1137.5 1005.1h0M1137.8 1006.1h0M1138.2 1005.9h0M1138.6 1005.7h0M1138.9 1006.1h0M1139.3 1005.9h0M1139.7 1005.8h0M1140.0 1006.3h0M1140.4 1006.8h0M1140.8 1007.1h0M1141.1 1007.1h0M1141.5 1007.0h0M1141.9 1006.8h0M1142.2 1006.4h0M1142.6 1006.8h0M1143.0 1006.7h0M1143.3 1005.7h0M1143.7 1006.6h0M1144.1 1006.1h0M1144.4 1005.6h0M1144.8 1005.4h0M1145.2 1006.2h0M1145.5 1006.0h0M1145.9 1006.5h0M1146.2 1006.8h0M1146.6 1007.2h0M1147.0 1008.0h0M1147.3 1007.3h0M1147.7 1006.3h0M1148.1 1008.2h0M1148.4 1008.8h0M1148.8 1008.2h0M1149.2 1008.5h0M1149.5 1008.3h0M1149.9 1007.5h0M1150.3 1007.0h0M1150.6 1006.8h0M1151.0 1005.6h0M1151.4 1005.7h0M1151.7 1005.2h0M1152.1 1006.2h0M1152.5 1006.2h0M1152.8 1006.8h0M1153.2 1005.9h0M1153.6 1004.8h0M1153.9 1004.3h0M1154.3 1005.2h0M1154.7 1005.7h0M1155.0 1005.3h0M1155.4 1005.1h0M1155.7 1004.8h0M1156.1 1004.3h0M1156.5 1005.8h0M1156.8 1005.0h0M1157.2 1005.6h0M1157.6 1005.6h0M1157.9 1005.3h0M1158.3 1005.0h0M1158.7 1006.1h0M1159.0 1006.9h0M1159.4 1006.4h0M1159.8 1006.0h0M1160.1 1005.2h0M1160.5 1005.3h0M1160.9 1005.6h0M1161.2 1005.0h0M1161.6 1005.1h0M1162.0 1004.4h0M1162.3 1004.3h0M1162.7 1004.1h0M1163.1 1004.7h0M1163.4 1004.5h0M1163.8 1004.8h0M1164.2 1005.3h0M1164.5 1005.5h0M1164.9 1005.8h0M1165.3 1005.4h0M1165.6 1005.5h0M1166.0 1005.5h0M1166.3 1005.9h0M1166.7 1005.8h0M1167.1 1005.1h0M1167.4 1005.2h0M1167.8 1005.4h0M1168.2 1005.5h0M1168.5 1005.0h0M1168.9 1005.6h0M1169.3 1005.4h0M1169.6 1005.4h0M1170.0 1005.3h0M1170.4 1005.4h0M1170.7 1005.3h0M1171.1 1006.1h0M1171.5 1006.4h0M1171.8 1007.7h0M1172.2 1007.1h0M1172.6 1006.4h0M1172.9 1006.0h0M1173.3 1006.0h0M1173.7 1005.4h0M1174.0 1005.5h0M1174.4 1005.4h0M1174.8 1006.1h0M1175.1 1006.1h0M1175.5 1006.6h0M1175.8 1006.2h0M1176.2 1005.1h0M1176.6 1005.7h0M1176.9 1005.4h0M1177.3 1005.2h0M1177.7 1005.6h0M1178.0 1006.5h0M1178.4 1006.9h0M1178.8 1007.7h0M1179.1 1007.5h0M1179.5 1007.5h0M1179.9 1007.3h0M1180.2 1007.4h0M1180.6 1006.9h0M1181.0 1007.6h0M1181.3 1006.7h0M1181.7 1007.7h0M1182.1 1007.6h0M1182.4 1007.3h0M1182.8 1007.5h0M1183.2 1007.8h0M1183.5 1007.4h0M1183.9 1007.9h0M1184.3 1007.2h0M1184.6 1006.8h0M1185.0 1007.0h0M1185.3 1006.8h0M1185.7 1006.4h0M1186.1 1006.0h0M1186.4 1006.8h0M1186.8 1006.3h0M1187.2 1006.1h0M1187.5 1005.9h0M1187.9 1005.8h0M1188.3 1005.6h0M1188.6 1005.9h0M1189.0 1006.2h0M1189.4 1006.8h0M1189.7 1006.2h0M1190.1 1006.5h0M1190.5 1006.5h0M1190.8 1007.2h0M1191.2 1007.0h0M1191.6 1007.3h0M1191.9 1005.7h0M1192.3 1006.2h0M1192.7 1006.4h0M1193.0 1006.1h0M1193.4 1005.3h0M1193.8 1006.4h0M1194.1 1006.5h0M1194.5 1005.8h0M1194.8 1006.9h0M1195.2 1005.9h0M1195.6 1006.3h0M1195.9 1006.7h0M1196.3 1007.1h0M1196.7 1006.6h0M1197.0 1007.6h0M1197.4 1006.4h0M1197.8 1006.4h0M1198.1 1006.9h0M1198.5 1006.5h0M1198.9 1006.3h0M1199.2 1005.8h0M1199.6 1005.7h0M1200.0 1005.6h0M1200.3 1005.4h0M1200.7 1005.7h0M1201.1 1005.5h0M1201.4 1005.7h0M1201.8 1004.6h0M1202.2 1005.4h0M1202.5 1005.3h0M1202.9 1005.7h0M1203.3 1005.4h0M1203.6 1005.4h0M1204.0 1004.8h0M1204.3 1005.5h0M1204.7 1005.6h0M1205.1 1005.8h0M1205.4 1005.9h0M1205.8 1005.4h0M1206.2 1006.6h0M1206.5 1006.3h0M1206.9 1006.3h0M1207.3 1006.9h0M1207.6 1006.9h0M1208.0 1006.2h0M1208.4 1006.1h0M1208.7 1005.9h0M1209.1 1006.0h0M1209.5 1006.6h0M1209.8 1006.7h0M1210.2 1007.0h0M1210.6 1006.3h0M1210.9 1005.6h0M1211.3 1006.3h0M1211.7 1005.7h0M1212.0 1005.6h0M1212.4 1005.8h0M1212.8 1005.9h0M1213.1 1006.2h0M1213.5 1006.9h0M1213.8 1006.4h0M1214.2 1007.4h0M1214.6 1007.0h0M1214.9 1007.3h0M1215.3 1007.3h0M1215.7 1007.5h0M1216.0 1007.5h0M1216.4 1008.4h0M1216.8 1008.2h0M1217.1 1008.0h0M1217.5 1007.9h0M1217.9 1008.3h0M1218.2 1007.5h0M1218.6 1007.8h0M1219.0 1007.6h0M1219.3 1008.0h0M1219.7 1007.6h0M1220.1 1007.2h0M1220.4 1005.8h0M1220.8 1005.4h0M1221.2 1005.4h0M1221.5 1004.3h0M1221.9 1005.3h0M1222.3 1004.6h0M1222.6 1004.7h0M1223.0 1005.5h0M1223.4 1004.7h0M1223.7 1004.6h0M1224.1 1004.2h0M1224.4 1005.3h0M1224.8 1004.7h0M1225.2 1005.2h0M1225.5 1005.5h0M1225.9 1006.1h0M1226.3 1006.0h0M1226.6 1005.6h0M1227.0 1006.3h0M1227.4 1006.7h0M1227.7 1007.3h0M1228.1 1006.4h0M1228.5 1006.5h0M1228.8 1006.6h0M1229.2 1006.2h0M1229.6 1006.2h0M1229.9 1006.0h0M1230.3 1005.4h0M1230.7 1005.5h0M1231.0 1005.4h0M1231.4 1005.7h0M1231.8 1005.6h0M1232.1 1005.7h0M1232.5 1005.6h0M1232.9 1005.6h0M1233.2 1006.1h0M1233.6 1006.1h0M1233.9 1005.9h0M1234.3 1005.8h0M1234.7 1006.5h0M1235.0 1006.1h0M1235.4 1005.8h0M1235.8 1005.8h0M1236.1 1005.8h0M1236.5 1006.0h0M1236.9 1006.4h0M1237.2 1005.5h0M1237.6 1005.2h0M1238.0 1004.9h0M1238.3 1005.4h0M1238.7 1006.2h0M1239.1 1005.9h0M1239.4 1005.7h0M1239.8 1005.2h0M1240.2 1004.5h0M1240.5 1004.4h0M1240.9 1003.9h0M1241.3 1004.5h0M1241.6 1004.2h0M1242.0 1003.9h0M1242.4 1003.2h0M1242.7 1002.9h0M1243.1 1003.0h0M1243.4 1002.4h0M1243.8 1002.9h0M1244.2 1002.8h0M1244.5 1002.6h0M1244.9 1003.2h0M1245.3 1004.2h0M1245.6 1003.9h0M1246.0 1003.8h0M1246.4 1003.8h0M1246.7 1003.3h0M1247.1 1003.8h0M1247.5 1004.0h0M1247.8 1003.4h0M1248.2 1004.1h0M1248.6 1004.3h0M1248.9 1004.8h0M1249.3 1004.4h0M1249.7 1003.6h0M1250.0 1004.5h0M1250.4 1003.7h0M1250.8 1003.7h0M1251.1 1004.1h0M1251.5 1004.3h0M1251.9 1004.9h0M1252.2 1005.4h0M1252.6 1005.4h0M1252.9 1005.2h0M1253.3 1004.7h0M1253.7 1004.7h0M1254.0 1004.8h0M1254.4 1005.3h0M1254.8 1004.8h0M1255.1 1003.7h0M1255.5 1004.4h0M1255.9 1003.5h0M1256.2 1003.4h0M1256.6 1003.6h0M1257.0 1002.8h0M1257.3 1004.4h0M1257.7 1005.1h0M1258.1 1004.9h0M1258.4 1004.9h0M1258.8 1005.5h0M1259.2 1004.5h0M1259.5 1004.4h0M1259.9 1005.2h0M1260.3 1005.8h0M1260.6 1005.0h0M1261.0 1004.1h0M1261.4 1005.3h0M1261.7 1005.4h0M1262.1 1005.3h0M1262.4 1006.0h0M1262.8 1006.5h0M1263.2 1006.8h0M1263.5 1007.3h0M1263.9 1006.2h0M1264.3 1005.6h0M1264.6 1005.5h0M1265.0 1005.1h0M1265.4 1005.1h0M1265.7 1004.6h0M1266.1 1004.8h0M1266.5 1005.2h0M1266.8 1005.0h0M1267.2 1005.4h0M1267.6 1005.5h0M1267.9 1004.6h0M1268.3 1004.2h0M1268.7 1004.5h0M1269.0 1005.1h0M1269.4 1005.0h0M1269.8 1004.5h0M1270.1 1005.1h0M1270.5 1004.9h0M1270.9 1004.7h0M1271.2 1004.7h0M1271.6 1003.4h0M1272.0 1003.0h0M1272.3 1002.4h0M1272.7 1002.2h0M1273.0 1001.0h0M1273.4 1001.0h0M1273.8 1001.5h0M1274.1 1001.6h0M1274.5 1001.7h0M1274.9 1002.2h0M1275.2 1002.4h0M1275.6 1002.6h0M1276.0 1002.9h0M1276.3 1003.3h0M1276.7 1003.0h0M1277.1 1003.9h0M1277.4 1003.7h0M1277.8 1003.4h0M1278.2 1003.6h0M1278.5 1005.2h0M1278.9 1004.3h0M1279.3 1005.2h0M1279.6 1005.4h0M1280.0 1004.9h0M1280.4 1005.6h0M1280.7 1005.5h0M1281.1 1006.7h0M1281.5 1006.5h0M1281.8 1006.3h0M1282.2 1006.1h0M1282.5 1006.1h0M1282.9 1006.0h0M1283.3 1005.8h0M1283.6 1006.2h0M1284.0 1006.3h0M1284.4 1005.4h0M1284.7 1005.8h0M1285.1 1005.1h0M1285.5 1005.1h0M1285.8 1004.6h0M1286.2 1004.9h0M1286.6 1004.4h0M1286.9 1004.5h0M1287.3 1004.4h0M1287.7 1004.7h0M1288.0 1005.1h0M1288.4 1005.0h0M1288.8 1005.1h0M1289.1 1005.0h0M1289.5 1004.8h0M1289.9 1005.4h0M1290.2 1005.6h0M1290.6 1005.8h0M1291.0 1006.2h0M1291.3 1005.7h0M1291.7 1005.2h0M1292.0 1004.8h0M1292.4 1005.0h0M1292.8 1005.6h0M1293.1 1005.1h0M1293.5 1005.8h0M1293.9 1005.3h0M1294.2 1005.8h0M1294.6 1005.8h0M1295.0 1005.2h0M1295.3 1005.9h0M1295.7 1006.1h0M1296.1 1006.4h0M1296.4 1006.8h0M1296.8 1006.1h0M1297.2 1006.4h0M1297.5 1007.4h0M1297.9 1006.6h0M1298.3 1007.0h0M1298.6 1008.4h0M1299.0 1008.2h0M1299.4 1007.7h0M1299.7 1007.1h0M1300.1 1006.4h0M1300.5 1006.3h0M1300.8 1006.1h0M1301.2 1006.4h0M1301.5 1006.3h0M1301.9 1005.6h0M1302.3 1005.2h0M1302.6 1004.9h0M1303.0 1005.8h0" stroke="#000" stroke-width="3.0" stroke-linecap="round"/>
<path d="M506.0 998.7h0M595.8 998.7h0M640.2 997.3h0M659.5 995.5h0M1218.6 997.9h0" stroke="#000" stroke-width="2.6" stroke-linecap="round"/>
<path d="M400.0 959.4H404.4L402.2 955.4Z" fill="#ff0000"/>
<path d="M452.5 959.4H456.9L454.7 955.4Z" fill="#ff0000"/>
<path d="M628.1 959.4H632.5L630.3 955.4Z" fill="#ff0000"/>
<path d="M724.7 959.4H729.1L726.9 955.4Z" fill="#ff0000"/>
<path d="M870.1 959.4H874.5L872.3 955.4Z" fill="#ff0000"/>
<path d="M906.1 959.4H910.5L908.3 955.4Z" fill="#ff0000"/>
<path d="M950.7 959.4H955.1L952.9 955.4Z" fill="#ff0000"/>
<path d="M1048.2 959.4H1052.6L1050.4 955.4Z" fill="#ff0000"/>
<path d="M1053.2 959.4H1057.6L1055.4 955.4Z" fill="#ff0000"/>
<path d="M1147.0 959.4H1151.4L1149.2 955.4Z" fill="#ff0000"/>
<path d="M1194.9 959.4H1199.3L1197.1 955.4Z" fill="#ff0000"/>
<path d="M1076.0 987.5h0" stroke="#ff0000" stroke-width="2.4" stroke-linecap="round"/>
<path d="M162.00 1011.5V954.5M672.00 1011.5V954.5M1303.00 1011.5V954.5" stroke="#800080" stroke-width="2.08" stroke-dasharray="2.08 3.44"/>
</g>
<path d="M105.5 954.5H1485.5V1011.5H105.5Z" fill="none" stroke="#000" stroke-width="1.11" stroke-linejoin="miter"/>
<path d="M162.50 1011.5v4.86M345.50 1011.5v4.86M528.50 1011.5v4.86M710.50 1011.5v4.86M893.50 1011.5v4.86M1076.50 1011.5v4.86M1258.50 1011.5v4.86M1441.50 1011.5v4.86" stroke="#000" stroke-width="1.11"/>
<text x="162.20" y="1032.20" font-size="14.72" text-anchor="middle" textLength="8.84" lengthAdjust="spacingAndGlyphs" fill="#000">0</text>
<text x="344.90" y="1032.20" font-size="14.72" text-anchor="middle" textLength="26.51" lengthAdjust="spacingAndGlyphs" fill="#000">500</text>
<text x="527.61" y="1032.20" font-size="14.72" text-anchor="middle" textLength="35.35" lengthAdjust="spacingAndGlyphs" fill="#000">1000</text>
<text x="710.32" y="1032.20" font-size="14.72" text-anchor="middle" textLength="35.35" lengthAdjust="spacingAndGlyphs" fill="#000">1500</text>
<text x="893.02" y="1032.20" font-size="14.72" text-anchor="middle" textLength="35.35" lengthAdjust="spacingAndGlyphs" fill="#000">2000</text>
<text x="1075.72" y="1032.20" font-size="14.72" text-anchor="middle" textLength="35.35" lengthAdjust="spacingAndGlyphs" fill="#000">2500</text>
<text x="1258.43" y="1032.20" font-size="14.72" text-anchor="middle" textLength="35.35" lengthAdjust="spacingAndGlyphs" fill="#000">3000</text>
<text x="1441.13" y="1032.20" font-size="14.72" text-anchor="middle" textLength="35.35" lengthAdjust="spacingAndGlyphs" fill="#000">3500</text>
<path d="M100.64 1009.50H105.5M100.64 983.50H105.5M100.64 957.50H105.5" stroke="#000" stroke-width="1.11"/>
<path d="M102.72 996.50H105.5M102.72 970.50H105.5" stroke="#000" stroke-width="0.83"/>
<text x="95.60" y="1014.30" font-size="14.72" text-anchor="end" textLength="8.84" lengthAdjust="spacingAndGlyphs" fill="#000">0</text>
<text x="95.60" y="988.30" font-size="14.72" text-anchor="end" textLength="8.84" lengthAdjust="spacingAndGlyphs" fill="#000">5</text>
<text x="95.60" y="962.30" font-size="14.72" text-anchor="end" textLength="17.67" lengthAdjust="spacingAndGlyphs" fill="#000">10</text>
<text x="0" y="0" font-size="14.72" text-anchor="middle" transform="translate(68.5 983.3) rotate(-90)" textLength="14.53" lengthAdjust="spacingAndGlyphs">dr</text>
</g></svg>
</body></html>
